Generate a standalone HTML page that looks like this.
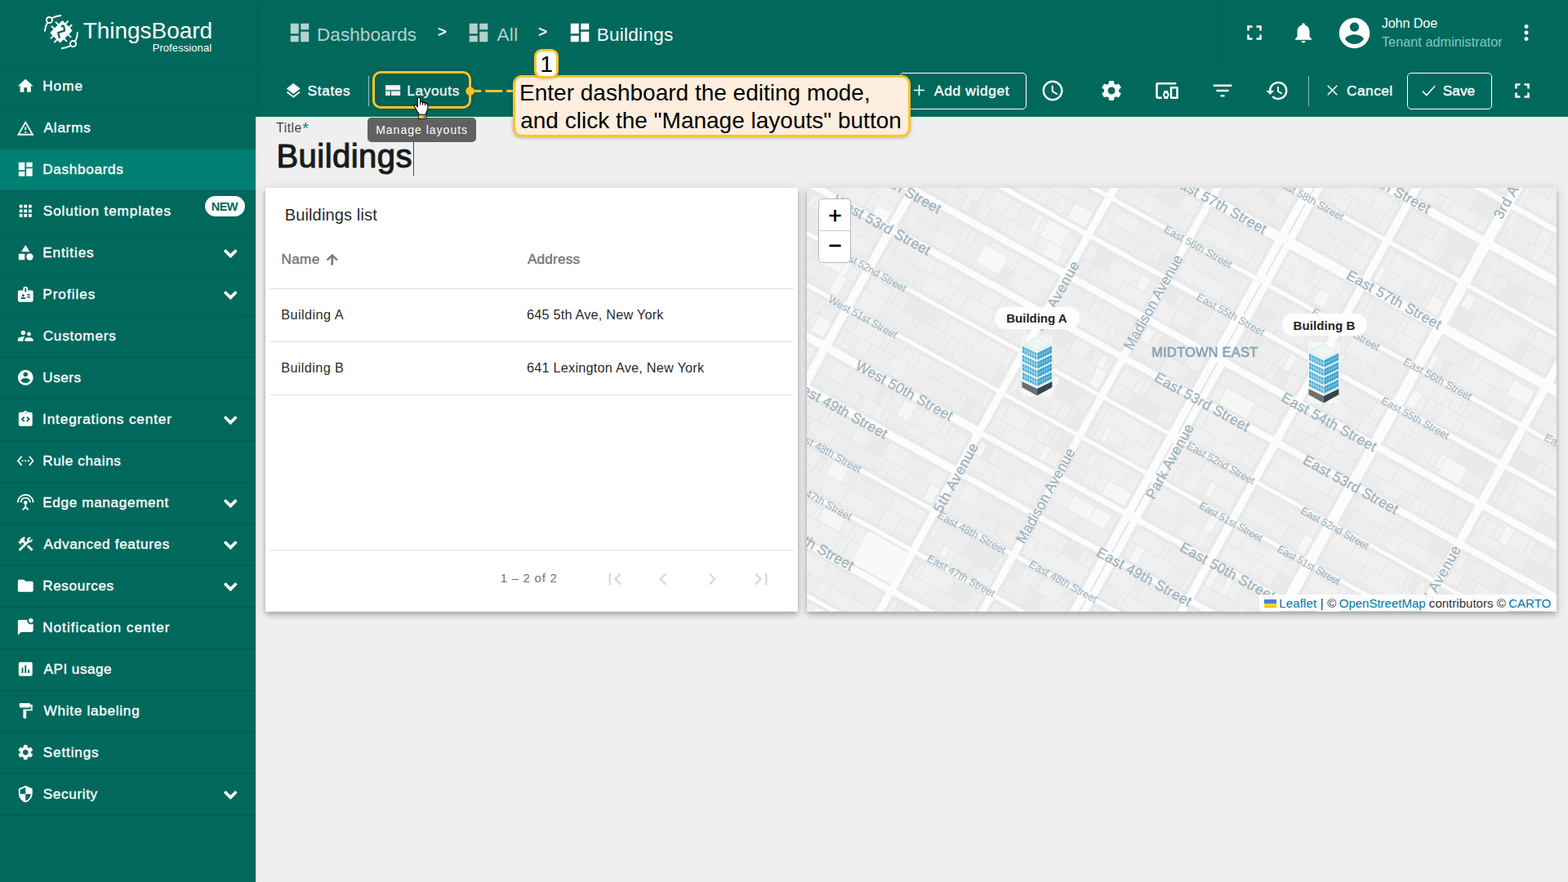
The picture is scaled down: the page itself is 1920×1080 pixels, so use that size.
<!DOCTYPE html>
<html lang="en"><head><meta charset="utf-8"><title>ThingsBoard - Buildings</title>
<style>
html,body{margin:0;padding:0}
body{width:1920px;height:1080px;overflow:hidden;background:#efefef;font-family:"Liberation Sans",sans-serif;position:relative}
.a,.t,.i{position:absolute}
.t{white-space:nowrap;margin:0;padding:0;font-weight:400}
.i{display:block;overflow:visible}
#side{left:0;top:0;width:313px;height:1080px;background:#00695c;box-shadow:1px 0 3px rgba(0,0,0,.1);z-index:3}
#top{left:313px;top:0;width:1607px;height:80px;background:#00695c;z-index:2}
#tb2{left:313px;top:80px;width:1607px;height:63px;background:#00695c;z-index:2}
.mi{left:0;width:313px;height:50px;border-top:1px solid rgba(0,0,0,.12)}
.card{background:#fff;box-shadow:0 2.5px 5px -1.25px rgba(0,0,0,.2),0 5px 6.25px 0 rgba(0,0,0,.14),0 1.25px 12.5px 0 rgba(0,0,0,.12)}
.hl{height:1px;background:#e0e0e0}

</style></head><body>
<nav id="side" class="a">
<div class="a" id="logo" style="left:0;top:0;width:313px;height:80px">
<svg class="i" style="left:48px;top:10px;width:64px;height:56px" viewBox="48 10 64 56" aria-hidden="true"><g fill="none" stroke="#fff" stroke-width="1.9" stroke-linecap="round"><circle cx="60.45" cy="24.5" r="3.55"/><circle cx="89.5" cy="53.6" r="3.55"/><path d="M63.8 22Q69 19.600 74.300 19M58 27.800Q55.400 32.500 54.900 37.800M92.200 50.400Q94.800 45.500 94.900 39.900M86.200 56.200Q81 58.600 75.700 59.200"/></g><g transform="translate(75 38.8) rotate(45)"><rect x="-8.8" y="-10.8" width="17.6" height="21.6" rx="1.2" fill="#fff"/><path d="M-8 -3.6H-12.7M-8 3.6H-12.7M8 -3.6H12.7M8 3.6H12.7M-3.2 -10V-14.7M3.2 -10V-14.7M-3.2 10V14.7M3.2 10V14.7" stroke="#fff" stroke-width="1.9" stroke-linecap="round" fill="none"/></g><path d="M75.800 32.300Q77.600 30 78.300 33L79.200 37.400L71.200 40.100L72.700 45.900" fill="none" stroke="#00695c" stroke-width="2.3" stroke-linejoin="round" stroke-linecap="round"/></svg>
<span class="t" style="left:101.67px;top:24.4px;font-size:28px;line-height:28px;letter-spacing:-0.03px;color:#fff;">ThingsBoard</span>
<span class="t" style="left:186.63px;top:52px;font-size:13px;line-height:13px;letter-spacing:0.09px;color:#fff;">Professional</span>
</div>
<ul style="list-style:none;margin:0;padding:0">
<li class="a mi" style="top:80px;">
<svg class="i" style="left:20.05px;top:13.45px;width:22.5px;height:22.5px;" viewBox="0 0 24 24" aria-hidden="true"><path fill="#fff" d="M10 20v-6h4v6h5v-8h3L12 3 2 12h3v8z"/></svg>
<span class="t" style="left:52.18px;top:16.24px;font-size:17.2px;line-height:17.2px;letter-spacing:1.01px;color:#fff;-webkit-text-stroke:0.38px #fff;">Home</span>
</li>
<li class="a mi" style="top:131px;">
<svg class="i" style="left:20.05px;top:14.35px;width:22.5px;height:22.5px;" viewBox="0 0 24 24" aria-hidden="true"><path fill="#fff" d="M12 5.99L19.53 19H4.47L12 5.99M12 2L1 21h22L12 2zm1 14h-2v2h2v-2zm0-6h-2v4h2v-4z"/></svg>
<span class="t" style="left:53.56px;top:16.24px;font-size:17.2px;line-height:17.2px;letter-spacing:0.78px;color:#fff;-webkit-text-stroke:0.38px #fff;">Alarms</span>
</li>
<li class="a mi" style="top:182px;background:#007f73;">
<svg class="i" style="left:20.05px;top:13.45px;width:22.5px;height:22.5px;" viewBox="0 0 24 24" aria-hidden="true"><path fill="#fff" d="M3 13h8V3H3v10zm0 8h8v-6H3v6zm10 0h8V11h-8v10zm0-18v6h8V3h-8z"/></svg>
<span class="t" style="left:52.18px;top:16.24px;font-size:17.2px;line-height:17.2px;letter-spacing:0.67px;color:#fff;-webkit-text-stroke:0.38px #fff;">Dashboards</span>
</li>
<li class="a mi" style="top:233px;">
<svg class="i" style="left:20.05px;top:13.45px;width:22.5px;height:22.5px;" viewBox="0 0 24 24" aria-hidden="true"><path fill="#fff" d="M4 8h4V4H4v4zm6 12h4v-4h-4v4zm-6 0h4v-4H4v4zm0-6h4v-4H4v4zm6 0h4v-4h-4v4zm6-10v4h4V4h-4zm-6 4h4V4h-4v4zm6 6h4v-4h-4v4zm0 6h4v-4h-4v4z"/></svg>
<span class="t" style="left:52.81px;top:16.24px;font-size:17.2px;line-height:17.2px;letter-spacing:0.87px;color:#fff;-webkit-text-stroke:0.38px #fff;">Solution templates</span>
<span class="a" style="left:251px;top:6px;width:49px;height:25px;border-radius:13px;background:#fff"></span>
<span class="t" style="left:258.73px;top:12.03px;font-size:14.5px;line-height:14.5px;letter-spacing:-0.53px;font-weight:700;color:#00695c;">NEW</span>
</li>
<li class="a mi" style="top:284px;">
<svg class="i" style="left:20.05px;top:13.45px;width:22.5px;height:22.5px;" viewBox="0 0 24 24" aria-hidden="true"><path fill="#fff" d="M12 2l-5.5 9h11z M17.5 13a4.5 4.5 0 1 0 0 9 4.5 4.5 0 1 0 0-9z M3 13.5h8v8H3z"/></svg>
<span class="t" style="left:52.18px;top:16.24px;font-size:17.2px;line-height:17.2px;letter-spacing:0.88px;color:#fff;-webkit-text-stroke:0.38px #fff;">Entities</span>
<svg class="i" style="left:267.25px;top:9.95px;width:30.5px;height:30.5px;" viewBox="0 0 24 24" aria-hidden="true"><path fill="#fff" stroke="#fff" stroke-width="0.9" stroke-linejoin="round" d="M16.59 8.59L12 13.17 7.41 8.59 6 10l6 6 6-6z"/></svg>
</li>
<li class="a mi" style="top:335px;">
<svg class="i" style="left:20.05px;top:13.45px;width:22.5px;height:22.5px;" viewBox="0 0 24 24" aria-hidden="true"><path fill="#fff" d="M20 7h-5V4c0-1.1-.9-2-2-2h-2c-1.1 0-2 .9-2 2v3H4c-1.1 0-2 .9-2 2v11c0 1.1.9 2 2 2h16c1.1 0 2-.9 2-2V9c0-1.1-.9-2-2-2zM9 12c.83 0 1.5.67 1.5 1.5S9.83 15 9 15s-1.5-.67-1.5-1.5S8.17 12 9 12zm3 6H6v-.75c0-1 2-1.5 3-1.5s3 .5 3 1.5V18zm1-9h-2V4h2v5zm5 7.5h-4V15h4v1.5zm0-3h-4V12h4v1.5z"/></svg>
<span class="t" style="left:52.18px;top:16.24px;font-size:17.2px;line-height:17.2px;letter-spacing:0.99px;color:#fff;-webkit-text-stroke:0.38px #fff;">Profiles</span>
<svg class="i" style="left:267.25px;top:9.95px;width:30.5px;height:30.5px;" viewBox="0 0 24 24" aria-hidden="true"><path fill="#fff" stroke="#fff" stroke-width="0.9" stroke-linejoin="round" d="M16.59 8.59L12 13.17 7.41 8.59 6 10l6 6 6-6z"/></svg>
</li>
<li class="a mi" style="top:386px;">
<svg class="i" style="left:20.05px;top:13.45px;width:22.5px;height:22.5px;" viewBox="0 0 24 24" aria-hidden="true"><path fill="#fff" d="M16.5 12c1.38 0 2.49-1.12 2.49-2.5S17.88 7 16.5 7C15.12 7 14 8.12 14 9.5s1.12 2.5 2.5 2.5zM9 11c1.66 0 2.99-1.34 2.99-3S10.66 5 9 5C7.34 5 6 6.34 6 8s1.34 3 3 3zm7.5 3c-1.83 0-5.5.92-5.5 2.75V19h11v-2.25c0-1.83-3.67-2.75-5.5-2.75zM9 13c-2.33 0-7 1.17-7 3.5V19h7v-2.25c0-.85.33-2.34 2.37-3.47C10.5 13.1 9.66 13 9 13z"/></svg>
<span class="t" style="left:52.72px;top:16.24px;font-size:17.2px;line-height:17.2px;letter-spacing:0.74px;color:#fff;-webkit-text-stroke:0.38px #fff;">Customers</span>
</li>
<li class="a mi" style="top:437px;">
<svg class="i" style="left:20.05px;top:13.45px;width:22.5px;height:22.5px;" viewBox="0 0 24 24" aria-hidden="true"><path fill="#fff" d="M12 2C6.48 2 2 6.48 2 12s4.48 10 10 10 10-4.48 10-10S17.52 2 12 2zm0 3c1.66 0 3 1.34 3 3s-1.34 3-3 3-3-1.34-3-3 1.34-3 3-3zm0 14.2c-2.5 0-4.71-1.28-6-3.22.03-1.99 4-3.08 6-3.08 1.99 0 5.97 1.09 6 3.08-1.29 1.94-3.5 3.22-6 3.22z"/></svg>
<span class="t" style="left:52.26px;top:16.24px;font-size:17.2px;line-height:17.2px;letter-spacing:0.52px;color:#fff;-webkit-text-stroke:0.38px #fff;">Users</span>
</li>
<li class="a mi" style="top:488px;">
<svg class="i" style="left:20.05px;top:13.45px;width:22.5px;height:22.5px;" viewBox="0 0 24 24" aria-hidden="true"><path fill="#fff" fill-rule="evenodd" d="M19 3h-4.18C14.4 1.84 13.3 1 12 1s-2.4.84-2.82 2H5c-.14 0-.27.01-.4.04-.39.08-.74.28-1.01.55-.18.18-.33.4-.43.64-.1.23-.16.49-.16.77v14c0 .27.06.54.16.78s.25.45.43.64c.27.27.62.47 1.01.55.13.02.26.03.4.03h14c1.1 0 2-.9 2-2V5c0-1.1-.9-2-2-2zm-8 11.17l-1.41 1.42L6 12l3.59-3.59L11 9.83 8.83 12 11 14.17zm1-9.42c-.41 0-.75-.34-.75-.75s.34-.75.75-.75.75.34.75.75-.34.75-.75.75zm2.41 10.84L13 14.17 15.17 12 13 9.83l1.41-1.42L18 12l-3.59 3.59z"/></svg>
<span class="t" style="left:52px;top:16.24px;font-size:17.2px;line-height:17.2px;letter-spacing:0.87px;color:#fff;-webkit-text-stroke:0.38px #fff;">Integrations center</span>
<svg class="i" style="left:267.25px;top:9.95px;width:30.5px;height:30.5px;" viewBox="0 0 24 24" aria-hidden="true"><path fill="#fff" stroke="#fff" stroke-width="0.9" stroke-linejoin="round" d="M16.59 8.59L12 13.17 7.41 8.59 6 10l6 6 6-6z"/></svg>
</li>
<li class="a mi" style="top:539px;">
<svg class="i" style="left:20.05px;top:13.45px;width:22.5px;height:22.5px;" viewBox="0 0 24 24" aria-hidden="true"><path fill="#fff" d="M7.77 6.76L6.23 5.48.82 12l5.41 6.52 1.54-1.28L3.42 12l4.35-5.24zM7 13h2v-2H7v2zm10-2h-2v2h2v-2zm-6 2h2v-2h-2v2zm6.77-7.52l-1.54 1.28L20.58 12l-4.35 5.24 1.54 1.28L23.18 12l-5.41-6.52z"/></svg>
<span class="t" style="left:52.18px;top:16.24px;font-size:17.2px;line-height:17.2px;letter-spacing:0.59px;color:#fff;-webkit-text-stroke:0.38px #fff;">Rule chains</span>
</li>
<li class="a mi" style="top:590px;">
<svg class="i" style="left:20.05px;top:13.45px;width:22.5px;height:22.5px;" viewBox="0 0 24 24" aria-hidden="true"><path fill="#fff" d="M12 5c-3.87 0-7 3.13-7 7h2c0-2.76 2.24-5 5-5s5 2.24 5 5h2c0-3.87-3.13-7-7-7zm1 9.29c.88-.39 1.5-1.26 1.5-2.29 0-1.38-1.12-2.5-2.5-2.5S9.5 10.62 9.5 12c0 1.02.62 1.9 1.5 2.29v3.3L7.59 21 9 22.41l3-3 3 3L16.41 21 13 17.59v-3.3zM12 1C5.93 1 1 5.93 1 12h2c0-4.97 4.03-9 9-9s9 4.03 9 9h2c0-6.07-4.93-11-11-11z"/></svg>
<span class="t" style="left:52.18px;top:16.24px;font-size:17.2px;line-height:17.2px;letter-spacing:0.63px;color:#fff;-webkit-text-stroke:0.38px #fff;">Edge management</span>
<svg class="i" style="left:267.25px;top:9.95px;width:30.5px;height:30.5px;" viewBox="0 0 24 24" aria-hidden="true"><path fill="#fff" stroke="#fff" stroke-width="0.9" stroke-linejoin="round" d="M16.59 8.59L12 13.17 7.41 8.59 6 10l6 6 6-6z"/></svg>
</li>
<li class="a mi" style="top:641px;">
<svg class="i" style="left:20.05px;top:13.45px;width:22.5px;height:22.5px;" viewBox="0 0 24 24" aria-hidden="true"><path fill="#fff" d="M13.783 15.172l2.121-2.121 5.996 5.996-2.121 2.121zM17.5 10c1.93 0 3.5-1.57 3.5-3.5 0-.58-.16-1.12-.41-1.6l-2.7 2.7-1.49-1.49 2.7-2.7c-.48-.25-1.02-.41-1.6-.41C15.57 3 14 4.57 14 6.5c0 .41.08.8.21 1.16l-1.85 1.85-1.78-1.78.71-.71-1.41-1.41L12 3.49c-1.17-1.17-3.07-1.17-4.24 0L4.22 7.03l1.41 1.41H2.81l-.71.71 3.54 3.54.71-.71V9.15l1.41 1.41.71-.71 1.78 1.78-7.41 7.41 2.12 2.12L16.34 9.79c.36.13.75.21 1.16.21z"/></svg>
<span class="t" style="left:53.56px;top:16.24px;font-size:17.2px;line-height:17.2px;letter-spacing:0.66px;color:#fff;-webkit-text-stroke:0.38px #fff;">Advanced features</span>
<svg class="i" style="left:267.25px;top:9.95px;width:30.5px;height:30.5px;" viewBox="0 0 24 24" aria-hidden="true"><path fill="#fff" stroke="#fff" stroke-width="0.9" stroke-linejoin="round" d="M16.59 8.59L12 13.17 7.41 8.59 6 10l6 6 6-6z"/></svg>
</li>
<li class="a mi" style="top:692px;">
<svg class="i" style="left:20.05px;top:13.45px;width:22.5px;height:22.5px;" viewBox="0 0 24 24" aria-hidden="true"><path fill="#fff" d="M10 4H4c-1.1 0-1.99.9-1.99 2L2 18c0 1.1.9 2 2 2h16c1.1 0 2-.9 2-2V8c0-1.1-.9-2-2-2h-8l-2-2z"/></svg>
<span class="t" style="left:52.18px;top:16.24px;font-size:17.2px;line-height:17.2px;letter-spacing:0.61px;color:#fff;-webkit-text-stroke:0.38px #fff;">Resources</span>
<svg class="i" style="left:267.25px;top:9.95px;width:30.5px;height:30.5px;" viewBox="0 0 24 24" aria-hidden="true"><path fill="#fff" stroke="#fff" stroke-width="0.9" stroke-linejoin="round" d="M16.59 8.59L12 13.17 7.41 8.59 6 10l6 6 6-6z"/></svg>
</li>
<li class="a mi" style="top:743px;">
<svg class="i" style="left:20.05px;top:13.45px;width:22.5px;height:22.5px;" viewBox="0 0 24 24" aria-hidden="true"><path fill="#fff" d="M22 6.98V16c0 1.1-.9 2-2 2H6l-4 4V4c0-1.1.9-2 2-2h10.1c-.06.32-.1.66-.1 1 0 2.76 2.24 5 5 5 1.13 0 2.16-.39 3-1.02zM16 3c0 1.66 1.34 3 3 3s3-1.34 3-3-1.34-3-3-3-3 1.34-3 3z"/></svg>
<span class="t" style="left:52.18px;top:16.24px;font-size:17.2px;line-height:17.2px;letter-spacing:0.99px;color:#fff;-webkit-text-stroke:0.38px #fff;">Notification center</span>
</li>
<li class="a mi" style="top:794px;">
<svg class="i" style="left:20.05px;top:13.45px;width:22.5px;height:22.5px;" viewBox="0 0 24 24" aria-hidden="true"><path fill="#fff" d="M19 3H5c-1.1 0-2 .9-2 2v14c0 1.1.9 2 2 2h14c1.1 0 2-.9 2-2V5c0-1.1-.9-2-2-2zM9 17H7v-7h2v7zm4 0h-2V7h2v10zm4 0h-2v-4h2v4z"/></svg>
<span class="t" style="left:53.56px;top:16.24px;font-size:17.2px;line-height:17.2px;letter-spacing:0.46px;color:#fff;-webkit-text-stroke:0.38px #fff;">API usage</span>
</li>
<li class="a mi" style="top:845px;">
<svg class="i" style="left:20.05px;top:13.45px;width:22.5px;height:22.5px;" viewBox="0 0 24 24" aria-hidden="true"><path fill="#fff" d="M18 4V3c0-.55-.45-1-1-1H5c-.55 0-1 .45-1 1v4c0 .55.45 1 1 1h12c.55 0 1-.45 1-1V6h1v4H9v11c0 .55.45 1 1 1h2c.55 0 1-.45 1-1v-9h8V4h-3z"/></svg>
<span class="t" style="left:53.51px;top:16.24px;font-size:17.2px;line-height:17.2px;letter-spacing:0.71px;color:#fff;-webkit-text-stroke:0.38px #fff;">White labeling</span>
</li>
<li class="a mi" style="top:896px;">
<svg class="i" style="left:20.05px;top:13.45px;width:22.5px;height:22.5px;" viewBox="0 0 24 24" aria-hidden="true"><path fill="#fff" d="M19.14 12.94c.04-.3.06-.61.06-.94 0-.32-.02-.64-.07-.94l2.03-1.58c.18-.14.23-.41.12-.61l-1.92-3.32c-.12-.22-.37-.29-.59-.22l-2.39.96c-.5-.38-1.03-.7-1.62-.94l-.36-2.54c-.04-.24-.24-.41-.48-.41h-3.84c-.24 0-.43.17-.47.41l-.36 2.54c-.59.24-1.13.57-1.62.94l-2.39-.96c-.22-.08-.47 0-.59.22L2.74 8.87c-.12.21-.08.47.12.61l2.03 1.58c-.05.3-.09.63-.09.94s.02.64.07.94l-2.03 1.58c-.18.14-.23.41-.12.61l1.92 3.32c.12.22.37.29.59.22l2.39-.96c.5.38 1.03.7 1.62.94l.36 2.54c.05.24.24.41.48.41h3.84c.24 0 .44-.17.47-.41l.36-2.54c.59-.24 1.13-.56 1.62-.94l2.39.96c.22.08.47 0 .59-.22l1.92-3.32c.12-.22.07-.47-.12-.61l-2.01-1.58zM12 15.6c-1.98 0-3.6-1.62-3.6-3.6s1.62-3.6 3.6-3.6 3.6 1.62 3.6 3.6-1.62 3.6-3.6 3.6z"/></svg>
<span class="t" style="left:52.81px;top:16.24px;font-size:17.2px;line-height:17.2px;letter-spacing:0.83px;color:#fff;-webkit-text-stroke:0.38px #fff;">Settings</span>
</li>
<li class="a mi" style="top:947px;">
<svg class="i" style="left:20.05px;top:13.45px;width:22.5px;height:22.5px;" viewBox="0 0 24 24" aria-hidden="true"><path fill="#fff" d="M12 1L3 5v6c0 5.55 3.84 10.74 9 12 5.16-1.26 9-6.45 9-12V5l-9-4zm0 10.99h7c-.53 4.12-3.28 7.79-7 8.94V12H5V6.3l7-3.11v8.8z"/></svg>
<span class="t" style="left:52.81px;top:16.24px;font-size:17.2px;line-height:17.2px;letter-spacing:0.61px;color:#fff;-webkit-text-stroke:0.38px #fff;">Security</span>
<svg class="i" style="left:267.25px;top:9.95px;width:30.5px;height:30.5px;" viewBox="0 0 24 24" aria-hidden="true"><path fill="#fff" stroke="#fff" stroke-width="0.9" stroke-linejoin="round" d="M16.59 8.59L12 13.17 7.41 8.59 6 10l6 6 6-6z"/></svg>
</li>
</ul>
<div class="a" style="left:0;top:998px;width:313px;height:1px;background:rgba(0,0,0,.12)"></div>
</nav>
<header id="top" class="a">
<svg class="i" style="left:39.1px;top:25px;width:30px;height:30px;" viewBox="0 0 24 24" aria-hidden="true"><path fill="#b3d2ce" d="M3 13h8V3H3v10zm0 8h8v-6H3v6zm10 0h8V11h-8v10zm0-18v6h8V3h-8z"/></svg>
<span class="t" style="left:74.95px;top:31.55px;font-size:22.5px;line-height:22.5px;letter-spacing:0.09px;color:#b3d2ce;">Dashboards</span>
<span class="t" style="left:222.89px;top:30.14px;font-size:18.5px;line-height:18.5px;color:#fff;-webkit-text-stroke:0.4px #fff;">&gt;</span>
<svg class="i" style="left:258.3px;top:25px;width:30px;height:30px;" viewBox="0 0 24 24" aria-hidden="true"><path fill="#b3d2ce" d="M3 13h8V3H3v10zm0 8h8v-6H3v6zm10 0h8V11h-8v10zm0-18v6h8V3h-8z"/></svg>
<span class="t" style="left:295.46px;top:31.55px;font-size:22.5px;line-height:22.5px;letter-spacing:0.37px;color:#b3d2ce;">All</span>
<span class="t" style="left:346.29px;top:30.14px;font-size:18.5px;line-height:18.5px;color:#fff;-webkit-text-stroke:0.4px #fff;">&gt;</span>
<svg class="i" style="left:382.3px;top:25px;width:30px;height:30px;" viewBox="0 0 24 24" aria-hidden="true"><path fill="#fff" d="M3 13h8V3H3v10zm0 8h8v-6H3v6zm10 0h8V11h-8v10zm0-18v6h8V3h-8z"/></svg>
<span class="t" style="left:417.65px;top:31.55px;font-size:22.5px;line-height:22.5px;letter-spacing:0.29px;color:#fff;">Buildings</span>
<div class="a" style="left:1180px;top:0;width:1px;height:79px;background:rgba(0,0,0,.12)"></div>
<svg class="i" style="left:1208.3px;top:25.2px;width:30px;height:30px;" viewBox="0 0 24 24" aria-hidden="true"><path fill="#fff" d="M7 14H5v5h5v-2H7v-3zm-2-4h2V7h3V5H5v5zm12 7h-3v2h5v-5h-2v3zM14 5v2h3v3h2V5h-5z"/></svg>
<svg class="i" style="left:1268.2px;top:25.2px;width:30px;height:30px;" viewBox="0 0 24 24" aria-hidden="true"><path fill="#fff" d="M12 22c1.1 0 2-.9 2-2h-4c0 1.1.89 2 2 2zm6-6v-5c0-3.07-1.64-5.64-4.5-6.32V4c0-.83-.67-1.5-1.5-1.5s-1.5.67-1.5 1.5v.68C7.63 5.36 6 7.92 6 11v5l-2 2v1h16v-1l-2-2z"/></svg>
<svg class="i" style="left:1323.3px;top:17.7px;width:45px;height:45px;" viewBox="0 0 24 24" aria-hidden="true"><path fill="#fff" d="M12 2C6.48 2 2 6.48 2 12s4.48 10 10 10 10-4.48 10-10S17.52 2 12 2zm0 3c1.66 0 3 1.34 3 3s-1.34 3-3 3-3-1.34-3-3 1.34-3 3-3zm0 14.2c-2.5 0-4.71-1.28-6-3.22.03-1.99 4-3.08 6-3.08 1.99 0 5.97 1.09 6 3.08-1.29 1.94-3.5 3.22-6 3.22z"/></svg>
<span class="t" style="left:1378.75px;top:19.79px;font-size:16.2px;line-height:16.2px;letter-spacing:-0.13px;color:#fff;">John Doe</span>
<span class="t" style="left:1378.94px;top:42.79px;font-size:16.2px;line-height:16.2px;letter-spacing:0.06px;color:#80cbc4;">Tenant administrator</span>
<svg class="i" style="left:1540.8px;top:25.2px;width:30px;height:30px;" viewBox="0 0 24 24" aria-hidden="true"><path fill="#fff" d="M12 8c1.1 0 2-.9 2-2s-.9-2-2-2-2 .9-2 2 .9 2 2 2zm0 2c-1.1 0-2 .9-2 2s.9 2 2 2 2-.9 2-2-.9-2-2-2zm0 6c-1.1 0-2 .9-2 2s.9 2 2 2 2-.9 2-2-.9-2-2-2z"/></svg>
</header>
<div id="tb2" class="a" role="toolbar">
<svg class="i" style="left:35.05px;top:19.85px;width:22.5px;height:22.5px;" viewBox="0 0 24 24" aria-hidden="true"><path fill="#fff" d="M11.99 18.54l-7.37-5.73L3 14.07l9 7 9-7-1.63-1.27-7.38 5.74zM12 16l7.36-5.73L21 9l-9-7-9 7 1.63 1.27L12 16z"/></svg>
<span class="t" style="left:63.6px;top:22.96px;font-size:17.3px;line-height:17.3px;letter-spacing:0.63px;color:#fff;-webkit-text-stroke:0.38px #fff;">States</span>
<div class="a" style="left:138px;top:13px;width:1px;height:37px;background:rgba(255,255,255,.6)"></div>
<svg class="i" style="left:159px;top:24px;width:18.4px;height:13.2px" viewBox="0 0 18.4 13.2" aria-hidden="true"><path fill="#fff" d="M0 0.200h18.200v6H0zM0 7.500h5.700v5.500H0zM7 7.500h11.200v5.500H7z"/></svg>
<span class="t" style="left:185.27px;top:22.96px;font-size:17.3px;line-height:17.3px;letter-spacing:0.59px;color:#fff;-webkit-text-stroke:0.38px #fff;">Layouts</span>
<div class="a" style="left:788px;top:9px;width:154px;height:43px;border:1px solid #fff;border-radius:5px"></div>
<svg class="i" style="left:805.0999999999999px;top:23.099999999999994px;width:15px;height:15px" viewBox="0 0 15 15" aria-hidden="true"><path d="M7.5 0.900v13.200M0.900 7.500h13.200" stroke="#fff" stroke-width="1.7" fill="none"/></svg>
<span class="t" style="left:831.06px;top:22.96px;font-size:17.3px;line-height:17.3px;letter-spacing:0.66px;color:#fff;-webkit-text-stroke:0.38px #fff;">Add widget</span>
<svg class="i" style="left:961px;top:16px;width:30px;height:30px;" viewBox="0 0 24 24" aria-hidden="true"><path fill="#fff" d="M11.99 2C6.47 2 2 6.48 2 12s4.47 10 9.99 10C17.52 22 22 17.52 22 12S17.52 2 11.99 2zM12 20c-4.42 0-8-3.58-8-8s3.58-8 8-8 8 3.58 8 8-3.58 8-8 8zm.5-13H11v6l5.25 3.15.75-1.23-4.5-2.67z"/></svg>
<svg class="i" style="left:1033.3px;top:16px;width:30px;height:30px;" viewBox="0 0 24 24" aria-hidden="true"><path fill="#fff" d="M19.14 12.94c.04-.3.06-.61.06-.94 0-.32-.02-.64-.07-.94l2.03-1.58c.18-.14.23-.41.12-.61l-1.92-3.32c-.12-.22-.37-.29-.59-.22l-2.39.96c-.5-.38-1.03-.7-1.62-.94l-.36-2.54c-.04-.24-.24-.41-.48-.41h-3.84c-.24 0-.43.17-.47.41l-.36 2.54c-.59.24-1.13.57-1.62.94l-2.39-.96c-.22-.08-.47 0-.59.22L2.74 8.87c-.12.21-.08.47.12.61l2.03 1.58c-.05.3-.09.63-.09.94s.02.64.07.94l-2.03 1.58c-.18.14-.23.41-.12.61l1.92 3.32c.12.22.37.29.59.22l2.39-.96c.5.38 1.03.7 1.62.94l.36 2.54c.05.24.24.41.48.41h3.84c.24 0 .44-.17.47-.41l.36-2.54c.59-.24 1.13-.56 1.62-.94l2.39.96c.22.08.47 0 .59-.22l1.92-3.32c.12-.22.07-.47-.12-.61l-2.01-1.58zM12 15.6c-1.98 0-3.6-1.62-3.6-3.6s1.62-3.6 3.6-3.6 3.6 1.62 3.6 3.6-1.62 3.6-3.6 3.6z"/></svg>
<svg class="i" style="left:1100.7px;top:16px;width:30px;height:30px;" viewBox="0 0 24 24" aria-hidden="true"><path fill="#fff" d="M3 6h18V4H3c-1.1 0-2 .9-2 2v12c0 1.1.9 2 2 2h4v-2H3V6zm10 6H9v1.78c-.61.55-1 1.33-1 2.22s.39 1.67 1 2.22V20h4v-1.78c.61-.55 1-1.34 1-2.22s-.39-1.67-1-2.22V12zm-2 5.5c-.83 0-1.5-.67-1.5-1.5s.67-1.5 1.5-1.5 1.5.67 1.5 1.5-.67 1.5-1.5 1.5zM22 8h-6c-.5 0-1 .5-1 1v10c0 .5.5 1 1 1h6c.5 0 1-.5 1-1V9c0-.5-.5-1-1-1zm-1 10h-4v-8h4v8z"/></svg>
<svg class="i" style="left:1168.5px;top:16px;width:30px;height:30px;" viewBox="0 0 24 24" aria-hidden="true"><path fill="#fff" d="M10 18h4v-2h-4v2zM3 6v2h18V6H3zm3 7h12v-2H6v2z"/></svg>
<svg class="i" style="left:1235.9px;top:16px;width:30px;height:30px;" viewBox="0 0 24 24" aria-hidden="true"><path fill="#fff" d="M13 3c-4.97 0-9 4.03-9 9H1l3.89 3.89.07.14L9 12H6c0-3.87 3.13-7 7-7s7 3.13 7 7-3.13 7-7 7c-1.93 0-3.68-.79-4.94-2.06l-1.42 1.42C8.27 19.99 10.51 21 13 21c4.97 0 9-4.03 9-9s-4.03-9-9-9zm-1 5v5l4.28 2.54.72-1.21-3.5-2.08V8H12z"/></svg>
<div class="a" style="left:1289px;top:13px;width:1px;height:37px;background:rgba(255,255,255,.55)"></div>
<svg class="i" style="left:1311.8px;top:24.299999999999997px;width:13px;height:13px" viewBox="0 0 13 13"><path d="M0.7 0.7l11.6 11.6M12.3 0.7L0.7 12.3" stroke="#fff" stroke-width="1.5" fill="none"/></svg>
<span class="t" style="left:1336.11px;top:22.96px;font-size:17.3px;line-height:17.3px;letter-spacing:0.45px;color:#fff;-webkit-text-stroke:0.38px #fff;">Cancel</span>
<div class="a" style="left:1410px;top:9px;width:102px;height:43px;border:1px solid #fff;border-radius:5px"></div>
<svg class="i" style="left:1428px;top:24px;width:17px;height:14px" viewBox="0 0 17 14"><path d="M0.8 7.6l5 5L16.2 1.2" stroke="#fff" stroke-width="1.5" fill="none"/></svg>
<span class="t" style="left:1453.8px;top:22.96px;font-size:17.3px;line-height:17.3px;letter-spacing:-0.01px;color:#fff;-webkit-text-stroke:0.38px #fff;">Save</span>
<svg class="i" style="left:1536px;top:16px;width:30px;height:30px;" viewBox="0 0 24 24" aria-hidden="true"><path fill="#fff" d="M7 14H5v5h5v-2H7v-3zm-2-4h2V7h3V5H5v5zm12 7h-3v2h5v-5h-2v3zM14 5v2h3v3h2V5h-5z"/></svg>
</div>
<main class="a" style="left:313px;top:143px;width:1607px;height:937px">
<span class="t" style="left:25.25px;top:6.39px;font-size:15.6px;line-height:15.6px;letter-spacing:0.54px;color:rgba(0,0,0,.76);">Title</span>
<span class="t" style="left:57.29px;top:5.49px;font-size:19.5px;line-height:19.5px;color:#00897b;">*</span>
<h1 class="t" style="left:25.47px;top:27.94px;font-size:40px;line-height:40px;letter-spacing:0.47px;color:#1a1a1a;-webkit-text-stroke:1.1px #1a1a1a;">Buildings</h1>
<div class="a" style="left:193px;top:30.5px;width:1px;height:41.5px;background:#00695c"></div>
<section class="a card" style="left:12px;top:87px;width:652px;height:519px">
<h2 class="t" style="left:23.66px;top:22.87px;font-size:20px;line-height:20px;letter-spacing:0.15px;color:rgba(0,0,0,.87);">Buildings list</h2>
<span class="t" style="left:19.39px;top:78.84px;font-size:17.2px;line-height:17.2px;letter-spacing:0.37px;color:#757575;-webkit-text-stroke:0.4px #757575;">Name</span>
<svg class="i" style="left:71.85px;top:77.95px;width:19.5px;height:19.5px;" viewBox="0 0 24 24" aria-hidden="true"><path fill="#757575" stroke="#757575" stroke-width="1.1" stroke-linejoin="round" d="M4 12l1.41 1.41L11 7.83V20h2V7.83l5.58 5.59L20 12l-8-8-8 8z"/></svg>
<span class="t" style="left:320.97px;top:78.84px;font-size:17.2px;line-height:17.2px;letter-spacing:0.17px;color:#757575;-webkit-text-stroke:0.4px #757575;">Address</span>
<div class="a hl" style="left:5px;top:123px;width:642px"></div>
<div class="a hl" style="left:5px;top:188px;width:642px"></div>
<div class="a hl" style="left:5px;top:253px;width:642px"></div>
<div class="a hl" style="left:5px;top:443px;width:642px"></div>
<span class="t" style="left:19.17px;top:146.74px;font-size:16.25px;line-height:16.25px;letter-spacing:0.45px;color:rgba(0,0,0,.87);">Building A</span>
<span class="t" style="left:319.97px;top:146.74px;font-size:16.25px;line-height:16.25px;letter-spacing:0.21px;color:rgba(0,0,0,.87);">645 5th Ave, New York</span>
<span class="t" style="left:19.17px;top:211.74px;font-size:16.25px;line-height:16.25px;letter-spacing:0.39px;color:rgba(0,0,0,.87);">Building B</span>
<span class="t" style="left:319.97px;top:211.74px;font-size:16.25px;line-height:16.25px;letter-spacing:0.23px;color:rgba(0,0,0,.87);">641 Lexington Ave, New York</span>
<span class="t" style="left:287.66px;top:470.3px;font-size:15px;line-height:15px;letter-spacing:0.73px;color:#757575;">1 – 2 of 2</span>
<svg class="i" style="left:412.7px;top:463.5px;width:30px;height:30px;" viewBox="0 0 24 24" aria-hidden="true"><path fill="#dbdbdb" d="M18.41 16.59L13.82 12l4.59-4.59L17 6l-6 6 6 6zM6 6h2v12H6z"/></svg>
<svg class="i" style="left:472.2px;top:463.5px;width:30px;height:30px;" viewBox="0 0 24 24" aria-hidden="true"><path fill="#dbdbdb" d="M15.41 7.41L14 6l-6 6 6 6 1.41-1.41L10.83 12z"/></svg>
<svg class="i" style="left:532px;top:463.5px;width:30px;height:30px;" viewBox="0 0 24 24" aria-hidden="true"><path fill="#dbdbdb" d="M10 6L8.59 7.41 13.17 12l-4.58 4.59L10 18l6-6z"/></svg>
<svg class="i" style="left:591.6px;top:463.5px;width:30px;height:30px;" viewBox="0 0 24 24" aria-hidden="true"><path fill="#dbdbdb" d="M5.59 7.41L10.18 12l-4.59 4.59L7 18l6-6-6-6zM16 6h2v12h-2z"/></svg>
</section>
<section class="a card" id="map" style="left:675px;top:87px;width:918px;height:519px;background:#fcfcfc;overflow:hidden">
<svg class="i" style="left:0;top:0;width:918px;height:519px;overflow:hidden" viewBox="988 230 918 519" font-family="Liberation Sans, sans-serif">
<g transform="rotate(29.0)">
<path fill="#ececec" d="M700 -334.8H1085V-288H700zM700 -280H1085V-231.8H700zM700 -227.2H1085V-176.4H700zM700 -171.6H1085V-123.5H700zM700 -113.5H1085V-67.8H700zM1095 -499.1H1300.5V-450H1095zM1095 -445H1300.5V-397.3H1095zM1095 -391.3H1300.5V-343.2H1095zM1095 -334.8H1300.5V-288H1095zM1095 -280H1300.5V-231.8H1095zM1095 -227.2H1300.5V-176.4H1095zM1095 -171.6H1300.5V-123.5H1095zM1095 -113.5H1300.5V-67.8H1095zM1095 -58.2H1300.5V-10H1095zM1095 -5H1300.5V45.5H1095zM1095 50.5H1300.5V99.5H1095zM1095 107.5H1300.5V156.5H1095zM1095 161.5H1300.5V212H1095zM1309.5 -563H1410.7V-511.6H1309.5zM1309.5 -499.1H1410.7V-450H1309.5zM1309.5 -445H1410.7V-397.3H1309.5zM1309.5 -391.3H1410.7V-343.2H1309.5zM1309.5 -334.8H1410.7V-288H1309.5zM1309.5 -280H1410.7V-231.8H1309.5zM1309.5 -227.2H1410.7V-176.4H1309.5zM1309.5 -171.6H1410.7V-121.9H1309.5zM1309.5 -115.1H1410.7V-66.5H1309.5zM1309.5 -59.5H1410.7V-10H1309.5zM1309.5 -5H1410.7V45.5H1309.5zM1309.5 50.5H1410.7V100H1309.5zM1309.5 107H1410.7V156.5H1309.5zM1419.3 -617.5H1508.5V-568H1419.3zM1419.3 -563H1508.5V-511.6H1419.3zM1419.3 -499.1H1508.5V-450H1419.3zM1419.3 -445H1508.5V-397.3H1419.3zM1419.3 -391.3H1508.5V-343.2H1419.3zM1419.3 -334.8H1508.5V-288H1419.3zM1419.3 -280H1508.5V-231.8H1419.3zM1419.3 -227.2H1508.5V-176.4H1419.3zM1419.3 -171.6H1508.5V-121.9H1419.3zM1419.3 -115.1H1508.5V-66.5H1419.3zM1419.3 -59.5H1508.5V-10H1419.3zM1419.3 -5H1508.5V45.5H1419.3zM1419.3 50.5H1508.5V100H1419.3zM1528.5 -673.8H1623.8V-627.5H1528.5zM1528.5 -617.5H1623.8V-568H1528.5zM1528.5 -563H1623.8V-511.6H1528.5zM1528.5 -499.1H1623.8V-450H1528.5zM1528.5 -445H1623.8V-397.3H1528.5zM1528.5 -391.3H1623.8V-343.2H1528.5zM1528.5 -334.8H1623.8V-288H1528.5zM1528.5 -280H1623.8V-231.8H1528.5zM1528.5 -227.2H1623.8V-176.4H1528.5zM1528.5 -171.6H1623.8V-121.9H1528.5zM1528.5 -115.1H1623.8V-66.5H1528.5zM1528.5 -59.5H1623.8V-10H1528.5zM1528.5 -5H1623.8V45.5H1528.5zM1633.2 -730.5H1729.5V-680.2H1633.2zM1633.2 -673.8H1729.5V-627.5H1633.2zM1633.2 -617.5H1729.5V-568H1633.2zM1633.2 -563H1729.5V-511.6H1633.2zM1633.2 -499.1H1729.5V-450H1633.2zM1633.2 -445H1729.5V-397.3H1633.2zM1633.2 -391.3H1729.5V-343.2H1633.2zM1633.2 -334.8H1729.5V-288H1633.2zM1633.2 -280H1729.5V-231.8H1633.2zM1633.2 -227.2H1729.5V-176.4H1633.2zM1633.2 -171.6H1729.5V-121.9H1633.2zM1633.2 -115.1H1729.5V-66.5H1633.2zM1633.2 -59.5H1729.5V-10H1633.2zM1742.5 -730.5H1880V-680.2H1742.5zM1742.5 -673.8H1880V-627.5H1742.5zM1742.5 -617.5H1880V-568H1742.5zM1742.5 -563H1880V-511.6H1742.5zM1742.5 -499.1H1880V-450H1742.5zM1742.5 -445H1880V-397.3H1742.5zM1742.5 -391.3H1880V-343.2H1742.5zM1742.5 -334.8H1880V-288H1742.5zM1742.5 -280H1880V-231.8H1742.5zM1742.5 -227.2H1880V-176.4H1742.5zM1742.5 -171.6H1880V-121.9H1742.5zM1742.5 -115.1H1880V-66.5H1742.5zM1890 -563H2200V-511.6H1890zM1890 -499.1H2200V-450H1890zM1890 -445H2200V-397.3H1890zM1890 -391.3H2200V-343.2H1890zM1890 -334.8H2200V-288H1890zM1890 -280H2200V-231.8H1890zM1890 -227.2H2200V-176.4H1890z"/>
<path fill="#f0f0f0" d="M703.4 -331.4H712.4V-312.4H703.4zM759.4 -331.4H766.4V-312.4H759.4zM809.4 -331.4H825.4V-312.4H809.4zM889.4 -331.4H905.4V-312.4H889.4zM959.4 -331.4H981.4V-312.4H959.4zM981.4 -331.4H997.4V-312.4H981.4zM1019.4 -329.4H1049.4V-312.4H1019.4zM1049.4 -331.4H1081.6V-312.4H1049.4zM761.4 -312.4H777.4V-291.4H761.4zM777.4 -312.4H793.4V-291.4H777.4zM793.4 -312.4H823.4V-293.4H793.4zM823.4 -312.4H830.4V-296.4H823.4zM854.4 -312.4H863.4V-291.4H854.4zM912.4 -312.4H919.4V-291.4H912.4zM1003.4 -312.4H1019.4V-293.4H1003.4zM1019.4 -312.4H1049.4V-291.4H1019.4zM1049.4 -312.4H1058.4V-291.4H1049.4zM1058.4 -312.4H1081.6V-296.4H1058.4zM726.4 -276.6H738.4V-258H726.4zM738.4 -276.6H754.4V-258H738.4zM754.4 -276.6H763.4V-258H754.4zM779.4 -272.6H786.4V-258H779.4zM807.4 -276.6H829.4V-258H807.4zM829.4 -272.6H869.4V-258H829.4zM881.4 -274.6H921.4V-258H881.4zM986.4 -276.6H993.4V-258H986.4zM993.4 -274.6H1002.4V-258H993.4zM703.4 -258H712.4V-235.2H703.4zM925.4 -258H934.4V-240.2H925.4zM934.4 -258H946.4V-235.2H934.4zM1023.4 -258H1045.4V-235.2H1023.4zM1045.4 -258H1081.6V-240.2H1045.4zM703.4 -223.8H743.4V-204.8H703.4zM793.4 -223.8H800.4V-204.8H793.4zM800.4 -221.8H840.4V-204.8H800.4zM859.4 -223.8H881.4V-204.8H859.4zM921.4 -223.8H928.4V-204.8H921.4zM928.4 -223.8H958.4V-204.8H928.4zM958.4 -223.8H988.4V-204.8H958.4zM1069.4 -219.8H1081.6V-204.8H1069.4zM703.4 -204.8H715.4V-179.8H703.4zM722.4 -204.8H744.4V-181.8H722.4zM756.4 -204.8H763.4V-179.8H756.4zM763.4 -204.8H770.4V-179.8H763.4zM782.4 -204.8H798.4V-184.8H782.4zM821.4 -204.8H828.4V-179.8H821.4zM828.4 -204.8H868.4V-179.8H828.4zM868.4 -204.8H875.4V-181.8H868.4zM875.4 -204.8H882.4V-181.8H875.4zM894.4 -204.8H924.4V-179.8H894.4zM924.4 -204.8H936.4V-179.8H924.4zM936.4 -204.8H966.4V-179.8H936.4zM994.4 -204.8H1001.4V-184.8H994.4zM740.4 -166.2H770.4V-149.6H740.4zM770.4 -168.2H779.4V-149.6H770.4zM791.4 -168.2H800.4V-149.6H791.4zM800.4 -168.2H812.4V-149.6H800.4zM812.4 -164.2H819.4V-149.6H812.4zM840.4 -168.2H862.4V-149.6H840.4zM1056.4 -168.2H1063.4V-149.6H1056.4zM703.4 -149.6H733.4V-126.9H703.4zM733.4 -149.6H749.4V-126.9H733.4zM809.4 -149.6H849.4V-126.9H809.4zM895.4 -149.6H925.4V-131.9H895.4zM955.4 -149.6H964.4V-131.9H955.4zM964.4 -149.6H986.4V-126.9H964.4zM986.4 -149.6H1002.4V-126.9H986.4zM1002.4 -149.6H1032.4V-126.9H1002.4zM1032.4 -149.6H1048.4V-131.9H1032.4zM1048.4 -149.6H1057.4V-128.9H1048.4zM1057.4 -149.6H1064.4V-131.9H1057.4zM703.4 -110.1H712.4V-88.1H703.4zM771.4 -110.1H787.4V-88.1H771.4zM803.4 -110.1H833.4V-88.1H803.4zM833.4 -110.1H845.4V-88.1H833.4zM866.4 -108.1H878.4V-88.1H866.4zM878.4 -108.1H885.4V-88.1H878.4zM885.4 -110.1H925.4V-88.1H885.4zM965.4 -110.1H977.4V-88.1H965.4zM977.4 -108.1H1017.4V-88.1H977.4zM1057.4 -110.1H1081.6V-88.1H1057.4zM703.4 -88.1H733.4V-71.2H703.4zM763.4 -88.1H785.4V-73.2H763.4zM785.4 -88.1H797.4V-71.2H785.4zM835.4 -88.1H865.4V-76.2H835.4zM865.4 -88.1H905.4V-73.2H865.4zM926.4 -88.1H935.4V-71.2H926.4zM935.4 -88.1H944.4V-71.2H935.4zM967.4 -88.1H979.4V-73.2H967.4zM1033.4 -88.1H1063.4V-71.2H1033.4zM1063.4 -88.1H1072.4V-76.2H1063.4zM1072.4 -88.1H1081.6V-76.2H1072.4zM1098.4 -495.7H1114.4V-472.4H1098.4zM1114.4 -495.7H1123.4V-472.4H1114.4zM1130.4 -491.7H1170.4V-472.4H1130.4zM1222.4 -491.7H1229.4V-472.4H1222.4zM1229.4 -491.7H1245.4V-472.4H1229.4zM1264.4 -495.7H1286.4V-472.4H1264.4zM1098.4 -472.4H1105.4V-453.4H1098.4zM1105.4 -472.4H1117.4V-453.4H1105.4zM1117.4 -472.4H1126.4V-455.4H1117.4zM1138.4 -472.4H1178.4V-453.4H1138.4zM1178.4 -472.4H1187.4V-453.4H1178.4zM1227.4 -472.4H1236.4V-453.4H1227.4zM1236.4 -472.4H1258.4V-453.4H1236.4zM1258.4 -472.4H1274.4V-458.4H1258.4zM1128.4 -441.6H1137.4V-421.5H1128.4zM1137.4 -441.6H1167.4V-421.5H1137.4zM1167.4 -441.6H1207.4V-421.5H1167.4zM1207.4 -441.6H1216.4V-421.5H1207.4zM1216.4 -441.6H1223.4V-421.5H1216.4zM1223.4 -441.6H1263.4V-421.5H1223.4zM1098.4 -421.5H1128.4V-405.7H1098.4zM1128.4 -421.5H1144.4V-402.7H1128.4zM1151.4 -421.5H1158.4V-400.7H1151.4zM1198.4 -421.5H1228.4V-400.7H1198.4zM1228.4 -421.5H1240.4V-400.7H1228.4zM1252.4 -421.5H1264.4V-400.7H1252.4zM1098.4 -385.9H1138.4V-364.8H1098.4zM1145.4 -387.9H1167.4V-364.8H1145.4zM1179.4 -387.9H1201.4V-364.8H1179.4zM1201.4 -387.9H1217.4V-364.8H1201.4zM1246.4 -385.9H1253.4V-364.8H1246.4zM1283.4 -383.9H1297.1V-364.8H1283.4zM1128.4 -364.8H1140.4V-346.6H1128.4zM1152.4 -364.8H1161.4V-346.6H1152.4zM1173.4 -364.8H1185.4V-346.6H1173.4zM1207.4 -364.8H1214.4V-346.6H1207.4zM1214.4 -364.8H1254.4V-346.6H1214.4zM1254.4 -364.8H1266.4V-346.6H1254.4zM1288.4 -364.8H1297.1V-348.6H1288.4zM1168.4 -331.4H1177.4V-310.8H1168.4zM1177.4 -331.4H1184.4V-310.8H1177.4zM1206.4 -331.4H1246.4V-310.8H1206.4zM1246.4 -331.4H1268.4V-310.8H1246.4zM1268.4 -329.4H1297.1V-310.8H1268.4zM1098.4 -310.8H1114.4V-296.4H1098.4zM1139.4 -310.8H1169.4V-291.4H1139.4zM1199.4 -310.8H1215.4V-291.4H1199.4zM1247.4 -310.8H1287.4V-291.4H1247.4zM1129.4 -276.6H1138.4V-258.6H1129.4zM1138.4 -276.6H1160.4V-258.6H1138.4zM1160.4 -276.6H1176.4V-258.6H1160.4zM1185.4 -274.6H1197.4V-258.6H1185.4zM1227.4 -276.6H1249.4V-258.6H1227.4zM1258.4 -276.6H1280.4V-258.6H1258.4zM1280.4 -276.6H1289.4V-258.6H1280.4zM1098.4 -258.6H1105.4V-240.2H1098.4zM1157.4 -258.6H1187.4V-237.2H1157.4zM1187.4 -258.6H1196.4V-237.2H1187.4zM1196.4 -258.6H1212.4V-237.2H1196.4zM1212.4 -258.6H1252.4V-237.2H1212.4zM1252.4 -258.6H1259.4V-237.2H1252.4zM1259.4 -258.6H1271.4V-240.2H1259.4zM1098.4 -219.8H1128.4V-204.3H1098.4zM1142.4 -221.8H1151.4V-204.3H1142.4zM1198.4 -219.8H1207.4V-204.3H1198.4zM1207.4 -223.8H1247.4V-204.3H1207.4zM1247.4 -223.8H1263.4V-204.3H1247.4zM1263.4 -223.8H1285.4V-204.3H1263.4zM1285.4 -223.8H1297.1V-204.3H1285.4zM1098.4 -204.3H1128.4V-179.8H1098.4zM1219.4 -204.3H1231.4V-184.8H1219.4zM1231.4 -204.3H1240.4V-181.8H1231.4zM1240.4 -204.3H1249.4V-179.8H1240.4zM1110.4 -168.2H1132.4V-149.2H1110.4zM1132.4 -168.2H1148.4V-149.2H1132.4zM1148.4 -168.2H1155.4V-149.2H1148.4zM1178.4 -166.2H1187.4V-149.2H1178.4zM1187.4 -168.2H1196.4V-149.2H1187.4zM1196.4 -168.2H1212.4V-149.2H1196.4zM1288.4 -168.2H1297.1V-149.2H1288.4zM1098.4 -149.2H1105.4V-128.9H1098.4zM1105.4 -149.2H1114.4V-126.9H1105.4zM1121.4 -149.2H1137.4V-131.9H1121.4zM1167.4 -149.2H1189.4V-126.9H1167.4zM1265.4 -149.2H1272.4V-126.9H1265.4zM1110.4 -110.1H1132.4V-87.8H1110.4zM1181.4 -106.1H1190.4V-87.8H1181.4zM1234.4 -110.1H1256.4V-87.8H1234.4zM1256.4 -110.1H1263.4V-87.8H1256.4zM1263.4 -110.1H1272.4V-87.8H1263.4zM1272.4 -110.1H1279.4V-87.8H1272.4zM1279.4 -106.1H1297.1V-87.8H1279.4zM1147.4 -87.8H1156.4V-71.2H1147.4zM1163.4 -87.8H1179.4V-71.2H1163.4zM1179.4 -87.8H1191.4V-71.2H1179.4zM1191.4 -87.8H1198.4V-71.2H1191.4zM1228.4 -87.8H1250.4V-76.2H1228.4zM1250.4 -87.8H1280.4V-71.2H1250.4zM1134.4 -54.9H1141.4V-34.3H1134.4zM1171.4 -50.9H1193.4V-34.3H1171.4zM1215.4 -54.9H1245.4V-34.3H1215.4zM1275.4 -54.9H1297.1V-34.3H1275.4zM1098.4 -34.3H1105.4V-13.4H1098.4zM1121.4 -34.3H1130.4V-18.4H1121.4zM1130.4 -34.3H1152.4V-15.4H1130.4zM1213.4 -34.3H1222.4V-18.4H1213.4zM1222.4 -34.3H1231.4V-13.4H1222.4zM1231.4 -34.3H1253.4V-18.4H1231.4zM1098.4 0.4H1128.4V18.2H1098.4zM1137.4 -1.6H1149.4V18.2H1137.4zM1158.4 0.4H1165.4V18.2H1158.4zM1187.4 2.4H1194.4V18.2H1187.4zM1253.4 -1.6H1283.4V18.2H1253.4zM1283.4 -1.6H1297.1V18.2H1283.4zM1107.4 18.2H1147.4V42.1H1107.4zM1169.4 18.2H1199.4V40.1H1169.4zM1199.4 18.2H1239.4V42.1H1199.4zM1251.4 18.2H1273.4V40.1H1251.4zM1273.4 18.2H1297.1V37.1H1273.4zM1154.4 57.9H1184.4V72.1H1154.4zM1214.4 55.9H1226.4V72.1H1214.4zM1226.4 55.9H1233.4V72.1H1226.4zM1233.4 53.9H1255.4V72.1H1233.4zM1255.4 57.9H1285.4V72.1H1255.4zM1098.4 72.1H1107.4V96.1H1098.4zM1159.4 72.1H1189.4V94.1H1159.4zM1189.4 72.1H1219.4V96.1H1189.4zM1219.4 72.1H1231.4V96.1H1219.4zM1231.4 72.1H1247.4V96.1H1231.4zM1277.4 72.1H1297.1V91.1H1277.4zM1182.4 110.9H1222.4V134.4H1182.4zM1144.4 134.4H1151.4V153.1H1144.4zM1151.4 134.4H1167.4V151.1H1151.4zM1183.4 134.4H1199.4V153.1H1183.4zM1224.4 134.4H1240.4V153.1H1224.4zM1240.4 134.4H1270.4V153.1H1240.4zM1270.4 134.4H1297.1V153.1H1270.4zM1146.4 166.9H1158.4V186.8H1146.4zM1158.4 164.9H1180.4V186.8H1158.4zM1223.4 164.9H1232.4V186.8H1223.4zM1270.4 164.9H1297.1V186.8H1270.4zM1098.4 186.8H1105.4V203.6H1098.4zM1145.4 186.8H1167.4V203.6H1145.4zM1167.4 186.8H1197.4V206.6H1167.4zM1227.4 186.8H1267.4V208.6H1227.4zM1312.9 -555.6H1324.9V-537.7H1312.9zM1324.9 -555.6H1331.9V-537.7H1324.9zM1331.9 -557.6H1371.9V-537.7H1331.9zM1342.9 -537.7H1364.9V-515H1342.9zM1389.9 -537.7H1396.9V-515H1389.9zM1384.9 -495.7H1407.2V-475.3H1384.9zM1342.9 -475.3H1358.9V-453.4H1342.9zM1398.9 -475.3H1407.2V-455.4H1398.9zM1312.9 -441.6H1321.9V-421.3H1312.9zM1321.9 -439.6H1351.9V-421.3H1321.9zM1312.9 -421.3H1324.9V-400.7H1312.9zM1386.9 -421.3H1395.9V-405.7H1386.9zM1312.9 -385.9H1324.9V-366.1H1312.9zM1346.9 -383.9H1386.9V-366.1H1346.9zM1340.9 -366.1H1370.9V-351.6H1340.9zM1370.9 -366.1H1407.2V-348.6H1370.9zM1350.9 -327.4H1362.9V-311.1H1350.9zM1362.9 -331.4H1371.9V-311.1H1362.9zM1312.9 -311.1H1334.9V-291.4H1312.9zM1334.9 -311.1H1343.9V-291.4H1334.9zM1343.9 -311.1H1383.9V-291.4H1343.9zM1383.9 -311.1H1392.9V-291.4H1383.9zM1352.9 -276.6H1374.9V-258.7H1352.9zM1381.9 -276.6H1390.9V-258.7H1381.9zM1399.9 -272.6H1407.2V-258.7H1399.9zM1312.9 -219.8H1342.9V-201.4H1312.9zM1342.9 -223.8H1351.9V-201.4H1342.9zM1312.9 -201.4H1319.9V-179.8H1312.9zM1365.9 -201.4H1377.9V-179.8H1365.9zM1377.9 -201.4H1389.9V-181.8H1377.9zM1312.9 -164.2H1321.9V-144.2H1312.9zM1321.9 -166.2H1351.9V-144.2H1321.9zM1367.9 -168.2H1379.9V-144.2H1367.9zM1312.9 -144.2H1324.9V-125.3H1312.9zM1324.9 -144.2H1331.9V-125.3H1324.9zM1331.9 -144.2H1371.9V-125.3H1331.9zM1371.9 -144.2H1383.9V-125.3H1371.9zM1392.9 -144.2H1407.2V-125.3H1392.9zM1330.9 -111.7H1342.9V-92.3H1330.9zM1382.9 -107.7H1407.2V-92.3H1382.9zM1312.9 -92.3H1334.9V-74.9H1312.9zM1334.9 -92.3H1346.9V-69.9H1334.9zM1346.9 -92.3H1362.9V-69.9H1346.9zM1371.9 -92.3H1401.9V-69.9H1371.9zM1401.9 -92.3H1407.2V-71.9H1401.9zM1312.9 -52.1H1321.9V-33.2H1312.9zM1321.9 -56.1H1343.9V-33.2H1321.9zM1312.9 -33.2H1319.9V-13.4H1312.9zM1390.9 -33.2H1407.2V-15.4H1390.9zM1312.9 -1.6H1319.9V23.1H1312.9zM1399.9 2.4H1407.2V23.1H1399.9zM1343.9 23.1H1352.9V42.1H1343.9zM1388.9 23.1H1407.2V42.1H1388.9zM1319.9 57.9H1326.9V74.4H1319.9zM1326.9 53.9H1366.9V74.4H1326.9zM1312.9 74.4H1342.9V91.6H1312.9zM1312.9 110.4H1319.9V133.8H1312.9zM1335.9 110.4H1351.9V133.8H1335.9zM1351.9 112.4H1360.9V133.8H1351.9zM1360.9 110.4H1390.9V133.8H1360.9zM1324.9 133.8H1331.9V153.1H1324.9zM1331.9 133.8H1347.9V153.1H1331.9zM1347.9 133.8H1354.9V153.1H1347.9zM1361.9 133.8H1368.9V153.1H1361.9zM1368.9 133.8H1384.9V153.1H1368.9zM1400.9 133.8H1407.2V153.1H1400.9zM1453.8 -612.1H1475.8V-590.7H1453.8zM1475.8 -614.1H1505.1V-590.7H1475.8zM1422.8 -590.7H1431.8V-573.4H1422.8zM1431.8 -590.7H1453.8V-571.4H1431.8zM1493.8 -590.7H1505.1V-571.4H1493.8zM1422.8 -555.6H1462.8V-538.5H1422.8zM1484.8 -557.6H1505.1V-538.5H1484.8zM1422.8 -477H1462.8V-458.4H1422.8zM1462.8 -477H1484.8V-458.4H1462.8zM1484.8 -477H1493.8V-458.4H1484.8zM1493.8 -477H1505.1V-455.4H1493.8zM1422.8 -439.6H1434.8V-422.4H1422.8zM1496.8 -437.6H1505.1V-422.4H1496.8zM1422.8 -422.4H1462.8V-402.7H1422.8zM1462.8 -422.4H1484.8V-400.7H1462.8zM1438.8 -385.9H1445.8V-369H1438.8zM1483.8 -387.9H1499.8V-369H1483.8zM1499.8 -387.9H1505.1V-369H1499.8zM1422.8 -369H1444.8V-346.6H1422.8zM1444.8 -369H1466.8V-351.6H1444.8zM1475.8 -369H1491.8V-351.6H1475.8zM1434.8 -331.4H1443.8V-312.2H1434.8zM1483.8 -331.4H1505.1V-312.2H1483.8zM1431.8 -312.2H1440.8V-296.4H1431.8zM1440.8 -312.2H1447.8V-293.4H1440.8zM1461.8 -312.2H1483.8V-291.4H1461.8zM1483.8 -312.2H1492.8V-296.4H1483.8zM1422.8 -272.6H1444.8V-252.9H1422.8zM1444.8 -272.6H1453.8V-252.9H1444.8zM1453.8 -276.6H1460.8V-252.9H1453.8zM1422.8 -252.9H1434.8V-235.2H1422.8zM1434.8 -252.9H1446.8V-235.2H1434.8zM1486.8 -252.9H1498.8V-237.2H1486.8zM1498.8 -252.9H1505.1V-240.2H1498.8zM1422.8 -219.8H1429.8V-200.2H1422.8zM1429.8 -223.8H1438.8V-200.2H1429.8zM1438.8 -223.8H1478.8V-200.2H1438.8zM1478.8 -223.8H1490.8V-200.2H1478.8zM1490.8 -221.8H1497.8V-200.2H1490.8zM1497.8 -221.8H1505.1V-200.2H1497.8zM1429.8 -200.2H1438.8V-179.8H1429.8zM1445.8 -200.2H1467.8V-184.8H1445.8zM1467.8 -200.2H1505.1V-179.8H1467.8zM1438.8 -166.2H1447.8V-144H1438.8zM1447.8 -168.2H1459.8V-144H1447.8zM1459.8 -168.2H1489.8V-144H1459.8zM1489.8 -168.2H1505.1V-144H1489.8zM1444.8 -144H1460.8V-125.3H1444.8zM1460.8 -144H1472.8V-127.3H1460.8zM1422.8 -109.7H1444.8V-88.1H1422.8zM1422.8 -56.1H1452.8V-37.7H1422.8zM1452.8 -56.1H1464.8V-37.7H1452.8zM1486.8 -56.1H1495.8V-37.7H1486.8zM1495.8 -54.1H1505.1V-37.7H1495.8zM1422.8 -37.7H1434.8V-13.4H1422.8zM1434.8 -37.7H1446.8V-13.4H1434.8zM1446.8 -37.7H1462.8V-13.4H1446.8zM1462.8 -37.7H1505.1V-13.4H1462.8zM1434.8 -1.6H1450.8V19H1434.8zM1459.8 -1.6H1489.8V19H1459.8zM1471.8 19H1505.1V42.1H1471.8zM1422.8 53.9H1434.8V72.5H1422.8zM1450.8 57.9H1490.8V72.5H1450.8zM1471.8 72.5H1505.1V96.6H1471.8zM1540.9 -670.4H1552.9V-652.6H1540.9zM1552.9 -670.4H1564.9V-652.6H1552.9zM1564.9 -670.4H1594.9V-652.6H1564.9zM1594.9 -670.4H1620.3V-652.6H1594.9zM1553.9 -652.6H1583.9V-635.9H1553.9zM1583.9 -652.6H1605.9V-635.9H1583.9zM1554.9 -614.1H1570.9V-592.2H1554.9zM1570.9 -614.1H1582.9V-592.2H1570.9zM1582.9 -612.1H1589.9V-592.2H1582.9zM1589.9 -614.1H1611.9V-592.2H1589.9zM1611.9 -612.1H1620.3V-592.2H1611.9zM1538.9 -592.2H1550.9V-573.4H1538.9zM1550.9 -592.2H1566.9V-571.4H1550.9zM1566.9 -592.2H1573.9V-571.4H1566.9zM1603.9 -592.2H1610.9V-571.4H1603.9zM1610.9 -592.2H1620.3V-571.4H1610.9zM1601.9 -559.6H1613.9V-538.1H1601.9zM1613.9 -555.6H1620.3V-538.1H1613.9zM1571.9 -538.1H1578.9V-515H1571.9zM1578.9 -538.1H1587.9V-515H1578.9zM1599.9 -538.1H1620.3V-517H1599.9zM1531.9 -495.7H1547.9V-473.7H1531.9zM1547.9 -495.7H1563.9V-473.7H1547.9zM1570.9 -495.7H1579.9V-473.7H1570.9zM1579.9 -495.7H1609.9V-473.7H1579.9zM1609.9 -495.7H1620.3V-473.7H1609.9zM1531.9 -473.7H1547.9V-458.4H1531.9zM1547.9 -473.7H1577.9V-455.4H1547.9zM1559.9 -441.6H1599.9V-420.5H1559.9zM1562.9 -420.5H1569.9V-405.7H1562.9zM1569.9 -420.5H1599.9V-400.7H1569.9zM1584.9 -385.9H1591.9V-366.8H1584.9zM1571.9 -366.8H1578.9V-351.6H1571.9zM1578.9 -366.8H1587.9V-346.6H1578.9zM1603.9 -366.8H1620.3V-346.6H1603.9zM1561.9 -327.4H1568.9V-313.4H1561.9zM1580.9 -327.4H1592.9V-313.4H1580.9zM1531.9 -313.4H1543.9V-291.4H1531.9zM1583.9 -313.4H1620.3V-291.4H1583.9zM1531.9 -276.6H1540.9V-254.1H1531.9zM1540.9 -276.6H1580.9V-254.1H1540.9zM1610.9 -276.6H1620.3V-254.1H1610.9zM1531.9 -254.1H1553.9V-235.2H1531.9zM1553.9 -254.1H1560.9V-237.2H1553.9zM1560.9 -254.1H1600.9V-237.2H1560.9zM1600.9 -254.1H1620.3V-240.2H1600.9zM1565.9 -221.8H1605.9V-204.3H1565.9zM1605.9 -223.8H1620.3V-204.3H1605.9zM1531.9 -204.3H1538.9V-179.8H1531.9zM1538.9 -204.3H1547.9V-184.8H1538.9zM1554.9 -204.3H1570.9V-179.8H1554.9zM1591.9 -204.3H1620.3V-181.8H1591.9zM1531.9 -168.2H1561.9V-146H1531.9zM1578.9 -146H1600.9V-125.3H1578.9zM1600.9 -146H1612.9V-125.3H1600.9zM1531.9 -111.7H1571.9V-91.4H1531.9zM1571.9 -111.7H1578.9V-91.4H1571.9zM1531.9 -91.4H1540.9V-71.9H1531.9zM1552.9 -91.4H1592.9V-69.9H1552.9zM1613.9 -91.4H1620.3V-69.9H1613.9zM1531.9 -56.1H1561.9V-32.6H1531.9zM1610.9 -56.1H1620.3V-32.6H1610.9zM1553.9 -32.6H1560.9V-13.4H1553.9zM1560.9 -32.6H1590.9V-13.4H1560.9zM1590.9 -32.6H1599.9V-13.4H1590.9zM1606.9 -32.6H1620.3V-13.4H1606.9zM1559.9 -1.6H1566.9V17.4H1559.9zM1588.9 -1.6H1620.3V17.4H1588.9zM1600.9 17.4H1620.3V37.1H1600.9zM1636.7 -702.5H1645.7V-688.6H1636.7zM1654.7 -702.5H1676.7V-683.6H1654.7zM1716.7 -702.5H1726.1V-685.6H1716.7zM1636.7 -670.4H1652.7V-647.7H1636.7zM1652.7 -670.4H1668.7V-647.7H1652.7zM1636.7 -647.7H1658.7V-630.9H1636.7zM1658.7 -647.7H1665.7V-632.9H1658.7zM1665.7 -647.7H1674.7V-630.9H1665.7zM1674.7 -647.7H1714.7V-630.9H1674.7zM1714.7 -647.7H1726.1V-630.9H1714.7zM1676.7 -614.1H1688.7V-592.9H1676.7zM1666.7 -592.9H1688.7V-571.4H1666.7zM1711.7 -592.9H1726.1V-571.4H1711.7zM1645.7 -557.6H1685.7V-534.8H1645.7zM1685.7 -557.6H1701.7V-534.8H1685.7zM1708.7 -555.6H1715.7V-534.8H1708.7zM1715.7 -559.6H1726.1V-534.8H1715.7zM1643.7 -534.8H1650.7V-515H1643.7zM1650.7 -534.8H1672.7V-515H1650.7zM1636.7 -495.7H1645.7V-475.9H1636.7zM1645.7 -495.7H1652.7V-475.9H1645.7zM1692.7 -495.7H1699.7V-475.9H1692.7zM1699.7 -495.7H1726.1V-475.9H1699.7zM1676.7 -475.9H1692.7V-455.4H1676.7zM1692.7 -475.9H1701.7V-455.4H1692.7zM1701.7 -475.9H1726.1V-453.4H1701.7zM1648.7 -441.6H1688.7V-420.5H1648.7zM1674.7 -420.5H1681.7V-405.7H1674.7zM1712.7 -385.9H1726.1V-366H1712.7zM1658.7 -366H1667.7V-346.6H1658.7zM1667.7 -366H1689.7V-346.6H1667.7zM1707.7 -366H1726.1V-346.6H1707.7zM1636.7 -331.4H1666.7V-311.9H1636.7zM1678.7 -331.4H1690.7V-311.9H1678.7zM1690.7 -329.4H1706.7V-311.9H1690.7zM1636.7 -311.9H1645.7V-291.4H1636.7zM1680.7 -311.9H1692.7V-291.4H1680.7zM1636.7 -272.6H1676.7V-257.4H1636.7zM1676.7 -276.6H1716.7V-257.4H1676.7zM1716.7 -276.6H1726.1V-257.4H1716.7zM1636.7 -257.4H1666.7V-235.2H1636.7zM1716.7 -223.8H1726.1V-203.4H1716.7zM1636.7 -203.4H1676.7V-184.8H1636.7zM1676.7 -203.4H1692.7V-179.8H1676.7zM1636.7 -168.2H1652.7V-147.1H1636.7zM1652.7 -164.2H1682.7V-147.1H1652.7zM1682.7 -168.2H1712.7V-147.1H1682.7zM1712.7 -168.2H1726.1V-147.1H1712.7zM1636.7 -147.1H1676.7V-125.3H1636.7zM1676.7 -147.1H1692.7V-130.3H1676.7zM1692.7 -147.1H1708.7V-125.3H1692.7zM1645.7 -107.7H1657.7V-88.7H1645.7zM1666.7 -109.7H1678.7V-88.7H1666.7zM1636.7 -88.7H1648.7V-71.9H1636.7zM1688.7 -88.7H1697.7V-69.9H1688.7zM1673.7 -56.1H1713.7V-35H1673.7zM1713.7 -56.1H1726.1V-35H1713.7zM1692.7 -35H1701.7V-13.4H1692.7zM1701.7 -35H1708.7V-18.4H1701.7zM1708.7 -35H1726.1V-13.4H1708.7zM1797.9 -727.1H1819.9V-705.4H1797.9zM1819.9 -727.1H1859.9V-705.4H1819.9zM1868.9 -727.1H1876.6V-705.4H1868.9zM1745.9 -705.4H1752.9V-683.6H1745.9zM1752.9 -705.4H1792.9V-683.6H1752.9zM1822.9 -705.4H1834.9V-683.6H1822.9zM1745.9 -670.4H1757.9V-647.8H1745.9zM1787.9 -670.4H1803.9V-647.8H1787.9zM1815.9 -670.4H1855.9V-647.8H1815.9zM1855.9 -668.4H1876.6V-647.8H1855.9zM1752.9 -647.8H1761.9V-635.9H1752.9zM1783.9 -647.8H1792.9V-635.9H1783.9zM1792.9 -647.8H1804.9V-630.9H1792.9zM1804.9 -647.8H1811.9V-630.9H1804.9zM1811.9 -647.8H1818.9V-632.9H1811.9zM1818.9 -647.8H1834.9V-630.9H1818.9zM1754.9 -610.1H1761.9V-595.1H1754.9zM1845.9 -614.1H1854.9V-595.1H1845.9zM1854.9 -614.1H1861.9V-595.1H1854.9zM1861.9 -612.1H1876.6V-595.1H1861.9zM1754.9 -595.1H1766.9V-571.4H1754.9zM1812.9 -595.1H1819.9V-573.4H1812.9zM1779.9 -555.6H1786.9V-539.4H1779.9zM1786.9 -555.6H1795.9V-539.4H1786.9zM1795.9 -555.6H1835.9V-539.4H1795.9zM1835.9 -555.6H1842.9V-539.4H1835.9zM1842.9 -559.6H1876.6V-539.4H1842.9zM1783.9 -539.4H1823.9V-515H1783.9zM1791.9 -495.7H1800.9V-472.3H1791.9zM1800.9 -491.7H1830.9V-472.3H1800.9zM1830.9 -491.7H1846.9V-472.3H1830.9zM1752.9 -472.3H1761.9V-458.4H1752.9zM1786.9 -472.3H1826.9V-453.4H1786.9zM1856.9 -472.3H1876.6V-453.4H1856.9zM1745.9 -441.6H1767.9V-422.3H1745.9zM1767.9 -441.6H1783.9V-422.3H1767.9zM1783.9 -441.6H1792.9V-422.3H1783.9zM1792.9 -439.6H1804.9V-422.3H1792.9zM1804.9 -441.6H1811.9V-422.3H1804.9zM1757.9 -422.3H1766.9V-402.7H1757.9zM1766.9 -422.3H1778.9V-405.7H1766.9zM1787.9 -422.3H1809.9V-400.7H1787.9zM1809.9 -422.3H1818.9V-400.7H1809.9zM1818.9 -422.3H1848.9V-405.7H1818.9zM1848.9 -422.3H1876.6V-402.7H1848.9zM1745.9 -387.9H1767.9V-369.8H1745.9zM1767.9 -385.9H1779.9V-369.8H1767.9zM1745.9 -369.8H1761.9V-346.6H1745.9zM1791.9 -369.8H1803.9V-346.6H1791.9zM1803.9 -369.8H1812.9V-351.6H1803.9zM1745.9 -329.4H1775.9V-308.5H1745.9zM1775.9 -331.4H1805.9V-308.5H1775.9zM1764.9 -308.5H1794.9V-293.4H1764.9zM1810.9 -308.5H1822.9V-291.4H1810.9zM1822.9 -308.5H1829.9V-293.4H1822.9zM1851.9 -308.5H1858.9V-293.4H1851.9zM1757.9 -276.6H1797.9V-257.2H1757.9zM1807.9 -257.2H1823.9V-235.2H1807.9zM1823.9 -257.2H1863.9V-240.2H1823.9zM1745.9 -221.8H1775.9V-203.5H1745.9zM1775.9 -219.8H1797.9V-203.5H1775.9zM1797.9 -223.8H1819.9V-203.5H1797.9zM1819.9 -223.8H1849.9V-203.5H1819.9zM1865.9 -221.8H1876.6V-203.5H1865.9zM1797.9 -203.5H1806.9V-184.8H1797.9zM1806.9 -203.5H1846.9V-184.8H1806.9zM1846.9 -203.5H1853.9V-179.8H1846.9zM1853.9 -203.5H1860.9V-181.8H1853.9zM1745.9 -164.2H1785.9V-146.4H1745.9zM1785.9 -168.2H1792.9V-146.4H1785.9zM1866.9 -168.2H1876.6V-146.4H1866.9zM1792.9 -146.4H1814.9V-130.3H1792.9zM1814.9 -146.4H1836.9V-125.3H1814.9zM1836.9 -146.4H1858.9V-125.3H1836.9zM1858.9 -146.4H1876.6V-127.3H1858.9zM1775.9 -111.7H1784.9V-91.1H1775.9zM1784.9 -111.7H1800.9V-91.1H1784.9zM1830.9 -111.7H1870.9V-91.1H1830.9zM1775.9 -91.1H1787.9V-74.9H1775.9zM1799.9 -91.1H1829.9V-69.9H1799.9zM1829.9 -91.1H1836.9V-69.9H1829.9zM1852.9 -91.1H1864.9V-69.9H1852.9zM1893.4 -559.6H1933.4V-534.8H1893.4zM1955.4 -559.6H1964.4V-534.8H1955.4zM1964.4 -555.6H1994.4V-534.8H1964.4zM2074.4 -559.6H2083.4V-534.8H2074.4zM2083.4 -559.6H2105.4V-534.8H2083.4zM1893.4 -534.8H1902.4V-517H1893.4zM1902.4 -534.8H1909.4V-515H1902.4zM1909.4 -534.8H1925.4V-517H1909.4zM1925.4 -534.8H1965.4V-517H1925.4zM1965.4 -534.8H1974.4V-517H1965.4zM2034.4 -534.8H2043.4V-515H2034.4zM2043.4 -534.8H2050.4V-515H2043.4zM2089.4 -534.8H2096.4V-517H2089.4zM2145.4 -534.8H2167.4V-517H2145.4zM2167.4 -534.8H2174.4V-520H2167.4zM1915.4 -491.7H1945.4V-473.8H1915.4zM1945.4 -495.7H1957.4V-473.8H1945.4zM1957.4 -495.7H1987.4V-473.8H1957.4zM2064.4 -495.7H2086.4V-473.8H2064.4zM2086.4 -495.7H2116.4V-473.8H2086.4zM2116.4 -495.7H2128.4V-473.8H2116.4zM2128.4 -491.7H2137.4V-473.8H2128.4zM2137.4 -495.7H2177.4V-473.8H2137.4zM2177.4 -491.7H2184.4V-473.8H2177.4zM2184.4 -493.7H2196.6V-473.8H2184.4zM1915.4 -473.8H1955.4V-453.4H1915.4zM2017.4 -473.8H2047.4V-453.4H2017.4zM2047.4 -473.8H2054.4V-453.4H2047.4zM2054.4 -473.8H2070.4V-458.4H2054.4zM2110.4 -473.8H2150.4V-458.4H2110.4zM2150.4 -473.8H2157.4V-453.4H2150.4zM2157.4 -473.8H2196.6V-453.4H2157.4zM1893.4 -441.6H1915.4V-419.4H1893.4zM1931.4 -439.6H1953.4V-419.4H1931.4zM1978.4 -441.6H2008.4V-419.4H1978.4zM2008.4 -441.6H2038.4V-419.4H2008.4zM2038.4 -441.6H2060.4V-419.4H2038.4zM2060.4 -441.6H2100.4V-419.4H2060.4zM2100.4 -441.6H2107.4V-419.4H2100.4zM2129.4 -441.6H2159.4V-419.4H2129.4zM2159.4 -441.6H2171.4V-419.4H2159.4zM2171.4 -441.6H2178.4V-419.4H2171.4zM2178.4 -439.6H2196.6V-419.4H2178.4zM1923.4 -419.4H1930.4V-402.7H1923.4zM2000.4 -419.4H2040.4V-400.7H2000.4zM2059.4 -419.4H2066.4V-400.7H2059.4zM2066.4 -419.4H2096.4V-400.7H2066.4zM2096.4 -419.4H2112.4V-402.7H2096.4zM2124.4 -419.4H2133.4V-400.7H2124.4zM2169.4 -419.4H2181.4V-400.7H2169.4zM2181.4 -419.4H2196.6V-400.7H2181.4zM1911.4 -387.9H1951.4V-368.9H1911.4zM1951.4 -387.9H1991.4V-368.9H1951.4zM1991.4 -387.9H2007.4V-368.9H1991.4zM2023.4 -385.9H2039.4V-368.9H2023.4zM2039.4 -387.9H2048.4V-368.9H2039.4zM2048.4 -387.9H2057.4V-368.9H2048.4zM2057.4 -387.9H2073.4V-368.9H2057.4zM2073.4 -387.9H2080.4V-368.9H2073.4zM2080.4 -383.9H2110.4V-368.9H2080.4zM2110.4 -385.9H2117.4V-368.9H2110.4zM2117.4 -387.9H2124.4V-368.9H2117.4zM2124.4 -387.9H2164.4V-368.9H2124.4zM2164.4 -385.9H2180.4V-368.9H2164.4zM2187.4 -387.9H2196.6V-368.9H2187.4zM1900.4 -368.9H1912.4V-351.6H1900.4zM1919.4 -368.9H1949.4V-351.6H1919.4zM2063.4 -368.9H2085.4V-348.6H2063.4zM2092.4 -368.9H2108.4V-346.6H2092.4zM2152.4 -368.9H2161.4V-346.6H2152.4zM2170.4 -368.9H2186.4V-346.6H2170.4zM2186.4 -368.9H2196.6V-346.6H2186.4zM1893.4 -331.4H1900.4V-309.4H1893.4zM1900.4 -327.4H1916.4V-309.4H1900.4zM1916.4 -327.4H1925.4V-309.4H1916.4zM1937.4 -331.4H1959.4V-309.4H1937.4zM1959.4 -331.4H1968.4V-309.4H1959.4zM2012.4 -331.4H2042.4V-309.4H2012.4zM2042.4 -331.4H2082.4V-309.4H2042.4zM2082.4 -331.4H2089.4V-309.4H2082.4zM2089.4 -329.4H2105.4V-309.4H2089.4zM2145.4 -329.4H2152.4V-309.4H2145.4zM2174.4 -331.4H2196.6V-309.4H2174.4zM1905.4 -309.4H1935.4V-296.4H1905.4zM2040.4 -309.4H2056.4V-291.4H2040.4zM2068.4 -309.4H2098.4V-291.4H2068.4zM2146.4 -309.4H2158.4V-291.4H2146.4zM2167.4 -309.4H2183.4V-296.4H2167.4zM2183.4 -309.4H2196.6V-296.4H2183.4zM1893.4 -276.6H1902.4V-253.1H1893.4zM1983.4 -276.6H2013.4V-253.1H1983.4zM2013.4 -276.6H2022.4V-253.1H2013.4zM2022.4 -276.6H2029.4V-253.1H2022.4zM2029.4 -276.6H2038.4V-253.1H2029.4zM2038.4 -274.6H2050.4V-253.1H2038.4zM2050.4 -276.6H2090.4V-253.1H2050.4zM2090.4 -276.6H2102.4V-253.1H2090.4zM2102.4 -276.6H2124.4V-253.1H2102.4zM2164.4 -276.6H2186.4V-253.1H2164.4zM1893.4 -253.1H1909.4V-235.2H1893.4zM1928.4 -253.1H1968.4V-240.2H1928.4zM1975.4 -253.1H1991.4V-240.2H1975.4zM1991.4 -253.1H2000.4V-235.2H1991.4zM2000.4 -253.1H2040.4V-240.2H2000.4zM2040.4 -253.1H2062.4V-235.2H2040.4zM2071.4 -253.1H2083.4V-240.2H2071.4zM2122.4 -253.1H2129.4V-235.2H2122.4zM2129.4 -253.1H2145.4V-235.2H2129.4zM2185.4 -253.1H2196.6V-235.2H2185.4zM1923.4 -219.8H1932.4V-203.7H1923.4zM1932.4 -221.8H1972.4V-203.7H1932.4zM1984.4 -221.8H2006.4V-203.7H1984.4zM2018.4 -221.8H2034.4V-203.7H2018.4zM2114.4 -221.8H2121.4V-203.7H2114.4zM2191.4 -219.8H2196.6V-203.7H2191.4zM1905.4 -203.7H1927.4V-179.8H1905.4zM2016.4 -203.7H2025.4V-179.8H2016.4zM2025.4 -203.7H2037.4V-181.8H2025.4zM2037.4 -203.7H2059.4V-181.8H2037.4zM2059.4 -203.7H2075.4V-184.8H2059.4zM2075.4 -203.7H2115.4V-181.8H2075.4zM2115.4 -203.7H2145.4V-179.8H2115.4zM2145.4 -203.7H2161.4V-179.8H2145.4zM2161.4 -203.7H2196.6V-184.8H2161.4z"/>
<path fill="#eaeaea" d="M752.4 -331.4H759.4V-312.4H752.4zM773.4 -327.4H780.4V-312.4H773.4zM830.4 -312.4H842.4V-296.4H830.4zM703.4 -272.6H710.4V-258H703.4zM710.4 -272.6H717.4V-258H710.4zM946.4 -276.6H986.4V-258H946.4zM712.4 -258H752.4V-237.2H712.4zM777.4 -258H799.4V-240.2H777.4zM855.4 -258H885.4V-235.2H855.4zM885.4 -258H925.4V-235.2H885.4zM946.4 -258H953.4V-237.2H946.4zM983.4 -258H1023.4V-235.2H983.4zM1018.4 -221.8H1030.4V-204.8H1018.4zM749.4 -149.6H779.4V-126.9H749.4zM733.4 -88.1H763.4V-71.2H733.4zM1021.4 -88.1H1033.4V-73.2H1021.4zM1274.4 -472.4H1283.4V-453.4H1274.4zM1098.4 -441.6H1128.4V-421.5H1098.4zM1158.4 -421.5H1198.4V-400.7H1158.4zM1161.4 -364.8H1173.4V-346.6H1161.4zM1231.4 -310.8H1247.4V-291.4H1231.4zM1151.4 -223.8H1191.4V-204.3H1151.4zM1289.4 -204.3H1297.1V-179.8H1289.4zM1272.4 -149.2H1284.4V-126.9H1272.4zM1172.4 -110.1H1181.4V-87.8H1172.4zM1156.4 -87.8H1163.4V-71.2H1156.4zM1193.4 -54.9H1215.4V-34.3H1193.4zM1105.4 -34.3H1121.4V-13.4H1105.4zM1149.4 0.4H1158.4V18.2H1149.4zM1247.4 72.1H1277.4V96.1H1247.4zM1098.4 114.9H1138.4V134.4H1098.4zM1167.4 134.4H1183.4V153.1H1167.4zM1123.4 164.9H1130.4V186.8H1123.4zM1267.4 186.8H1279.4V208.6H1267.4zM1371.9 -557.6H1401.9V-537.7H1371.9zM1380.9 -537.7H1389.9V-517H1380.9zM1354.9 -495.7H1384.9V-475.3H1354.9zM1395.9 -421.3H1407.2V-400.7H1395.9zM1324.9 -387.9H1346.9V-366.1H1324.9zM1312.9 -274.6H1352.9V-258.7H1312.9zM1374.9 -272.6H1381.9V-258.7H1374.9zM1360.9 -223.8H1367.9V-201.4H1360.9zM1367.9 -223.8H1389.9V-201.4H1367.9zM1398.9 -201.4H1407.2V-179.8H1398.9zM1395.9 -166.2H1407.2V-144.2H1395.9zM1321.9 -111.7H1330.9V-92.3H1321.9zM1359.9 -1.6H1399.9V23.1H1359.9zM1374.9 23.1H1381.9V42.1H1374.9zM1366.9 57.9H1382.9V74.4H1366.9zM1382.9 53.9H1391.9V74.4H1382.9zM1319.9 110.4H1328.9V133.8H1319.9zM1462.8 -557.6H1484.8V-538.5H1462.8zM1422.8 -387.9H1438.8V-369H1422.8zM1466.8 -369H1475.8V-348.6H1466.8zM1443.8 -327.4H1483.8V-312.2H1443.8zM1454.8 -312.2H1461.8V-291.4H1454.8zM1492.8 -312.2H1505.1V-296.4H1492.8zM1446.8 -252.9H1486.8V-235.2H1446.8zM1464.8 -52.1H1486.8V-37.7H1464.8zM1422.8 -1.6H1434.8V19H1422.8zM1452.8 19H1464.8V42.1H1452.8zM1464.8 19H1471.8V37.1H1464.8zM1490.8 55.9H1505.1V72.5H1490.8zM1531.9 -420.5H1553.9V-405.7H1531.9zM1545.9 -383.9H1554.9V-366.8H1545.9zM1587.9 -366.8H1603.9V-351.6H1587.9zM1652.7 -727.1H1674.7V-702.5H1652.7zM1698.7 -670.4H1726.1V-647.7H1698.7zM1688.7 -614.1H1726.1V-592.9H1688.7zM1695.7 -592.9H1711.7V-571.4H1695.7zM1708.7 -147.1H1726.1V-127.3H1708.7zM1708.7 -111.7H1726.1V-88.7H1708.7zM1713.7 -88.7H1726.1V-69.9H1713.7zM1676.7 -35H1692.7V-13.4H1676.7zM1782.9 -595.1H1812.9V-571.4H1782.9zM1745.9 -539.4H1767.9V-515H1745.9zM1832.9 -539.4H1841.9V-515H1832.9zM1761.9 -472.3H1770.9V-453.4H1761.9zM1859.9 -439.6H1876.6V-422.3H1859.9zM1831.9 -387.9H1876.6V-369.8H1831.9zM1853.9 -276.6H1876.6V-257.2H1853.9zM1745.9 -257.2H1752.9V-240.2H1745.9zM1858.9 -223.8H1865.9V-203.5H1858.9zM1745.9 -107.7H1775.9V-91.1H1745.9zM1800.9 -111.7H1830.9V-91.1H1800.9zM1836.9 -91.1H1852.9V-69.9H1836.9zM1864.9 -91.1H1876.6V-69.9H1864.9zM2034.4 -557.6H2074.4V-534.8H2034.4zM2121.4 -559.6H2143.4V-534.8H2121.4zM1974.4 -534.8H2004.4V-515H1974.4zM2004.4 -534.8H2011.4V-517H2004.4zM1955.4 -473.8H1995.4V-453.4H1955.4zM1995.4 -473.8H2017.4V-453.4H1995.4zM1962.4 -437.6H1978.4V-419.4H1962.4zM1893.4 -419.4H1923.4V-400.7H1893.4zM1960.4 -419.4H2000.4V-400.7H1960.4zM1893.4 -385.9H1902.4V-368.9H1893.4zM1958.4 -368.9H1998.4V-346.6H1958.4zM2130.4 -368.9H2152.4V-348.6H2130.4zM1969.4 -309.4H2009.4V-293.4H1969.4zM2130.4 -309.4H2146.4V-296.4H2130.4zM1951.4 -272.6H1960.4V-253.1H1951.4zM2124.4 -276.6H2164.4V-253.1H2124.4zM2083.4 -253.1H2092.4V-235.2H2083.4zM2092.4 -253.1H2122.4V-235.2H2092.4zM1893.4 -221.8H1923.4V-203.7H1893.4zM2074.4 -223.8H2114.4V-203.7H2074.4zM2121.4 -223.8H2151.4V-203.7H2121.4zM1957.4 -203.7H1969.4V-184.8H1957.4z"/>
<path fill="#f6f6f5" d="M795.4 -276.6H807.4V-258H795.4zM768.4 -258H777.4V-235.2H768.4zM1030.4 -221.8H1060.4V-204.8H1030.4zM1060.4 -223.8H1069.4V-204.8H1060.4zM1060.4 -204.8H1072.4V-179.8H1060.4zM710.4 -164.2H740.4V-149.6H710.4zM779.4 -164.2H791.4V-149.6H779.4zM1064.4 -149.6H1081.6V-126.9H1064.4zM905.4 -88.1H917.4V-73.2H905.4zM1283.4 -472.4H1290.4V-455.4H1283.4zM1271.4 -421.5H1297.1V-400.7H1271.4zM1239.4 -387.9H1246.4V-364.8H1239.4zM1253.4 -387.9H1283.4V-364.8H1253.4zM1266.4 -364.8H1288.4V-346.6H1266.4zM1206.4 -110.1H1222.4V-87.8H1206.4zM1284.4 -34.3H1297.1V-13.4H1284.4zM1165.4 -1.6H1187.4V18.2H1165.4zM1184.4 53.9H1214.4V72.1H1184.4zM1285.4 55.9H1297.1V72.1H1285.4zM1192.4 168.9H1214.4V186.8H1192.4zM1232.4 164.9H1254.4V186.8H1232.4zM1312.9 -537.7H1342.9V-517H1312.9zM1386.9 -383.9H1398.9V-366.1H1386.9zM1390.9 -274.6H1399.9V-258.7H1390.9zM1392.9 -258.7H1407.2V-235.2H1392.9zM1351.9 -223.8H1360.9V-201.4H1351.9zM1383.9 -144.2H1392.9V-125.3H1383.9zM1312.9 -109.7H1321.9V-92.3H1312.9zM1334.9 23.1H1343.9V37.1H1334.9zM1398.9 74.4H1407.2V94.6H1398.9zM1453.8 -590.7H1493.8V-576.4H1453.8zM1422.8 -331.4H1434.8V-312.2H1422.8zM1438.8 -200.2H1445.8V-181.8H1438.8zM1472.8 -144H1505.1V-125.3H1472.8zM1444.8 -107.7H1474.8V-88.1H1444.8zM1474.8 -107.7H1496.8V-88.1H1474.8zM1531.9 -670.4H1540.9V-652.6H1531.9zM1584.9 -473.7H1600.9V-455.4H1584.9zM1591.9 -387.9H1600.9V-366.8H1591.9zM1543.9 -313.4H1583.9V-291.4H1543.9zM1582.9 -204.3H1591.9V-184.8H1582.9zM1601.9 -168.2H1613.9V-146H1601.9zM1540.9 -91.4H1552.9V-69.9H1540.9zM1561.9 17.4H1591.9V42.1H1561.9zM1681.7 -727.1H1690.7V-702.5H1681.7zM1690.7 -727.1H1726.1V-702.5H1690.7zM1636.7 -534.8H1643.7V-515H1636.7zM1709.7 -534.8H1726.1V-515H1709.7zM1636.7 -387.9H1652.7V-366H1636.7zM1714.7 -203.4H1726.1V-179.8H1714.7zM1636.7 -111.7H1645.7V-88.7H1636.7zM1657.7 -111.7H1666.7V-88.7H1657.7zM1636.7 -35H1676.7V-15.4H1636.7zM1745.9 -557.6H1757.9V-539.4H1745.9zM1846.9 -491.7H1876.6V-472.3H1846.9zM1745.9 -472.3H1752.9V-453.4H1745.9zM1745.9 -422.3H1757.9V-400.7H1745.9zM1812.9 -369.8H1819.9V-351.6H1812.9zM1819.9 -369.8H1849.9V-346.6H1819.9zM1826.9 -164.2H1866.9V-146.4H1826.9zM1785.9 -146.4H1792.9V-125.3H1785.9zM2096.4 -534.8H2136.4V-515H2096.4zM2107.4 -437.6H2129.4V-419.4H2107.4zM2161.4 -368.9H2170.4V-346.6H2161.4zM1925.4 -331.4H1937.4V-309.4H1925.4zM2033.4 -309.4H2040.4V-296.4H2033.4zM2151.4 -219.8H2191.4V-203.7H2151.4zM1927.4 -203.7H1957.4V-179.8H1927.4z"/>
<path fill="#eeeeee" d="M712.4 -331.4H752.4V-312.4H712.4zM766.4 -331.4H773.4V-312.4H766.4zM780.4 -331.4H802.4V-312.4H780.4zM802.4 -331.4H809.4V-312.4H802.4zM825.4 -331.4H837.4V-312.4H825.4zM837.4 -331.4H859.4V-312.4H837.4zM859.4 -331.4H866.4V-312.4H859.4zM866.4 -329.4H873.4V-312.4H866.4zM873.4 -329.4H889.4V-312.4H873.4zM905.4 -331.4H935.4V-312.4H905.4zM935.4 -331.4H947.4V-312.4H935.4zM947.4 -331.4H959.4V-312.4H947.4zM997.4 -331.4H1019.4V-312.4H997.4zM703.4 -312.4H719.4V-291.4H703.4zM719.4 -312.4H749.4V-293.4H719.4zM749.4 -312.4H761.4V-291.4H749.4zM842.4 -312.4H854.4V-293.4H842.4zM863.4 -312.4H872.4V-293.4H863.4zM872.4 -312.4H912.4V-291.4H872.4zM919.4 -312.4H941.4V-296.4H919.4zM941.4 -312.4H963.4V-293.4H941.4zM963.4 -312.4H1003.4V-293.4H963.4zM717.4 -276.6H726.4V-258H717.4zM763.4 -276.6H779.4V-258H763.4zM786.4 -276.6H795.4V-258H786.4zM869.4 -272.6H881.4V-258H869.4zM921.4 -276.6H930.4V-258H921.4zM930.4 -274.6H937.4V-258H930.4zM937.4 -276.6H946.4V-258H937.4zM1002.4 -274.6H1024.4V-258H1002.4zM1024.4 -276.6H1064.4V-258H1024.4zM1064.4 -276.6H1081.6V-258H1064.4zM752.4 -258H768.4V-235.2H752.4zM799.4 -258H839.4V-235.2H799.4zM839.4 -258H848.4V-235.2H839.4zM848.4 -258H855.4V-240.2H848.4zM953.4 -258H983.4V-237.2H953.4zM743.4 -219.8H765.4V-204.8H743.4zM765.4 -219.8H777.4V-204.8H765.4zM777.4 -223.8H793.4V-204.8H777.4zM840.4 -223.8H847.4V-204.8H840.4zM847.4 -219.8H859.4V-204.8H847.4zM881.4 -221.8H903.4V-204.8H881.4zM903.4 -223.8H912.4V-204.8H903.4zM912.4 -223.8H921.4V-204.8H912.4zM988.4 -223.8H1018.4V-204.8H988.4zM715.4 -204.8H722.4V-179.8H715.4zM744.4 -204.8H756.4V-184.8H744.4zM770.4 -204.8H782.4V-179.8H770.4zM798.4 -204.8H814.4V-179.8H798.4zM814.4 -204.8H821.4V-181.8H814.4zM882.4 -204.8H894.4V-184.8H882.4zM966.4 -204.8H982.4V-179.8H966.4zM982.4 -204.8H994.4V-179.8H982.4zM1001.4 -204.8H1010.4V-181.8H1001.4zM1010.4 -204.8H1017.4V-181.8H1010.4zM1017.4 -204.8H1039.4V-184.8H1017.4zM1039.4 -204.8H1051.4V-179.8H1039.4zM1051.4 -204.8H1060.4V-181.8H1051.4zM1072.4 -204.8H1081.6V-181.8H1072.4zM703.4 -166.2H710.4V-149.6H703.4zM819.4 -168.2H828.4V-149.6H819.4zM828.4 -168.2H840.4V-149.6H828.4zM862.4 -168.2H874.4V-149.6H862.4zM874.4 -168.2H896.4V-149.6H874.4zM896.4 -166.2H912.4V-149.6H896.4zM912.4 -168.2H924.4V-149.6H912.4zM924.4 -164.2H964.4V-149.6H924.4zM964.4 -164.2H994.4V-149.6H964.4zM994.4 -164.2H1016.4V-149.6H994.4zM1016.4 -168.2H1056.4V-149.6H1016.4zM1063.4 -164.2H1081.6V-149.6H1063.4zM779.4 -149.6H809.4V-126.9H779.4zM849.4 -149.6H879.4V-128.9H849.4zM879.4 -149.6H895.4V-128.9H879.4zM925.4 -149.6H955.4V-131.9H925.4zM712.4 -110.1H742.4V-88.1H712.4zM742.4 -106.1H764.4V-88.1H742.4zM764.4 -110.1H771.4V-88.1H764.4zM787.4 -108.1H803.4V-88.1H787.4zM845.4 -108.1H857.4V-88.1H845.4zM857.4 -110.1H866.4V-88.1H857.4zM925.4 -110.1H965.4V-88.1H925.4zM1017.4 -108.1H1057.4V-88.1H1017.4zM797.4 -88.1H813.4V-73.2H797.4zM813.4 -88.1H835.4V-71.2H813.4zM917.4 -88.1H926.4V-71.2H917.4zM944.4 -88.1H951.4V-73.2H944.4zM951.4 -88.1H967.4V-73.2H951.4zM979.4 -88.1H991.4V-71.2H979.4zM991.4 -88.1H1021.4V-71.2H991.4zM1123.4 -495.7H1130.4V-472.4H1123.4zM1170.4 -495.7H1200.4V-472.4H1170.4zM1200.4 -495.7H1222.4V-472.4H1200.4zM1245.4 -493.7H1252.4V-472.4H1245.4zM1252.4 -495.7H1264.4V-472.4H1252.4zM1286.4 -495.7H1297.1V-472.4H1286.4zM1126.4 -472.4H1138.4V-453.4H1126.4zM1187.4 -472.4H1227.4V-455.4H1187.4zM1290.4 -472.4H1297.1V-455.4H1290.4zM1263.4 -441.6H1297.1V-421.5H1263.4zM1144.4 -421.5H1151.4V-402.7H1144.4zM1240.4 -421.5H1252.4V-400.7H1240.4zM1264.4 -421.5H1271.4V-402.7H1264.4zM1138.4 -387.9H1145.4V-364.8H1138.4zM1167.4 -383.9H1179.4V-364.8H1167.4zM1217.4 -387.9H1239.4V-364.8H1217.4zM1098.4 -364.8H1128.4V-346.6H1098.4zM1140.4 -364.8H1152.4V-348.6H1140.4zM1185.4 -364.8H1207.4V-348.6H1185.4zM1098.4 -331.4H1138.4V-310.8H1098.4zM1138.4 -327.4H1168.4V-310.8H1138.4zM1184.4 -331.4H1206.4V-310.8H1184.4zM1114.4 -310.8H1123.4V-291.4H1114.4zM1123.4 -310.8H1139.4V-291.4H1123.4zM1169.4 -310.8H1199.4V-293.4H1169.4zM1215.4 -310.8H1231.4V-291.4H1215.4zM1287.4 -310.8H1297.1V-291.4H1287.4zM1098.4 -274.6H1107.4V-258.6H1098.4zM1107.4 -276.6H1129.4V-258.6H1107.4zM1176.4 -276.6H1185.4V-258.6H1176.4zM1197.4 -276.6H1227.4V-258.6H1197.4zM1249.4 -276.6H1258.4V-258.6H1249.4zM1289.4 -276.6H1297.1V-258.6H1289.4zM1105.4 -258.6H1145.4V-237.2H1105.4zM1145.4 -258.6H1157.4V-237.2H1145.4zM1271.4 -258.6H1297.1V-235.2H1271.4zM1128.4 -221.8H1135.4V-204.3H1128.4zM1135.4 -219.8H1142.4V-204.3H1135.4zM1191.4 -219.8H1198.4V-204.3H1191.4zM1128.4 -204.3H1168.4V-184.8H1128.4zM1168.4 -204.3H1175.4V-181.8H1168.4zM1175.4 -204.3H1197.4V-179.8H1175.4zM1197.4 -204.3H1219.4V-179.8H1197.4zM1249.4 -204.3H1289.4V-184.8H1249.4zM1098.4 -166.2H1110.4V-149.2H1098.4zM1155.4 -164.2H1162.4V-149.2H1155.4zM1162.4 -164.2H1178.4V-149.2H1162.4zM1212.4 -168.2H1228.4V-149.2H1212.4zM1228.4 -168.2H1258.4V-149.2H1228.4zM1258.4 -164.2H1288.4V-149.2H1258.4zM1114.4 -149.2H1121.4V-126.9H1114.4zM1137.4 -149.2H1167.4V-126.9H1137.4zM1189.4 -149.2H1219.4V-126.9H1189.4zM1219.4 -149.2H1235.4V-126.9H1219.4zM1235.4 -149.2H1265.4V-126.9H1235.4zM1284.4 -149.2H1297.1V-131.9H1284.4zM1098.4 -110.1H1110.4V-87.8H1098.4zM1132.4 -110.1H1172.4V-87.8H1132.4zM1190.4 -110.1H1206.4V-87.8H1190.4zM1222.4 -108.1H1234.4V-87.8H1222.4zM1098.4 -87.8H1107.4V-71.2H1098.4zM1107.4 -87.8H1147.4V-71.2H1107.4zM1198.4 -87.8H1228.4V-76.2H1198.4zM1280.4 -87.8H1297.1V-71.2H1280.4zM1098.4 -54.9H1105.4V-34.3H1098.4zM1105.4 -54.9H1127.4V-34.3H1105.4zM1127.4 -54.9H1134.4V-34.3H1127.4zM1141.4 -54.9H1171.4V-34.3H1141.4zM1245.4 -52.9H1275.4V-34.3H1245.4zM1152.4 -34.3H1161.4V-13.4H1152.4zM1161.4 -34.3H1173.4V-13.4H1161.4zM1173.4 -34.3H1213.4V-13.4H1173.4zM1253.4 -34.3H1262.4V-13.4H1253.4zM1262.4 -34.3H1284.4V-13.4H1262.4zM1128.4 -1.6H1137.4V18.2H1128.4zM1194.4 0.4H1201.4V18.2H1194.4zM1201.4 0.4H1223.4V18.2H1201.4zM1223.4 2.4H1253.4V18.2H1223.4zM1098.4 18.2H1107.4V42.1H1098.4zM1147.4 18.2H1169.4V42.1H1147.4zM1239.4 18.2H1251.4V42.1H1239.4zM1098.4 57.9H1138.4V72.1H1098.4zM1138.4 55.9H1154.4V72.1H1138.4zM1107.4 72.1H1123.4V96.1H1107.4zM1123.4 72.1H1135.4V94.1H1123.4zM1135.4 72.1H1147.4V94.1H1135.4zM1147.4 72.1H1159.4V96.1H1147.4zM1138.4 110.9H1168.4V134.4H1138.4zM1168.4 110.9H1175.4V134.4H1168.4zM1175.4 110.9H1182.4V134.4H1175.4zM1222.4 110.9H1238.4V134.4H1222.4zM1238.4 110.9H1268.4V134.4H1238.4zM1268.4 110.9H1297.1V134.4H1268.4zM1098.4 134.4H1114.4V153.1H1098.4zM1114.4 134.4H1144.4V148.1H1114.4zM1199.4 134.4H1208.4V148.1H1199.4zM1208.4 134.4H1224.4V153.1H1208.4zM1098.4 164.9H1114.4V186.8H1098.4zM1114.4 164.9H1123.4V186.8H1114.4zM1130.4 168.9H1146.4V186.8H1130.4zM1180.4 166.9H1192.4V186.8H1180.4zM1214.4 164.9H1223.4V186.8H1214.4zM1254.4 166.9H1270.4V186.8H1254.4zM1105.4 186.8H1145.4V203.6H1105.4zM1197.4 186.8H1227.4V208.6H1197.4zM1279.4 186.8H1297.1V208.6H1279.4zM1401.9 -555.6H1407.2V-537.7H1401.9zM1364.9 -537.7H1373.9V-515H1364.9zM1373.9 -537.7H1380.9V-515H1373.9zM1396.9 -537.7H1407.2V-515H1396.9zM1312.9 -495.7H1342.9V-475.3H1312.9zM1342.9 -493.7H1354.9V-475.3H1342.9zM1312.9 -475.3H1342.9V-453.4H1312.9zM1358.9 -475.3H1398.9V-453.4H1358.9zM1351.9 -439.6H1367.9V-421.3H1351.9zM1367.9 -441.6H1407.2V-421.3H1367.9zM1324.9 -421.3H1364.9V-400.7H1324.9zM1364.9 -421.3H1386.9V-402.7H1364.9zM1398.9 -383.9H1407.2V-366.1H1398.9zM1312.9 -366.1H1328.9V-346.6H1312.9zM1328.9 -366.1H1340.9V-348.6H1328.9zM1312.9 -331.4H1334.9V-311.1H1312.9zM1334.9 -331.4H1350.9V-311.1H1334.9zM1371.9 -331.4H1407.2V-311.1H1371.9zM1392.9 -311.1H1407.2V-291.4H1392.9zM1312.9 -258.7H1352.9V-235.2H1312.9zM1352.9 -258.7H1392.9V-235.2H1352.9zM1389.9 -221.8H1407.2V-201.4H1389.9zM1319.9 -201.4H1349.9V-184.8H1319.9zM1349.9 -201.4H1365.9V-181.8H1349.9zM1389.9 -201.4H1398.9V-181.8H1389.9zM1351.9 -168.2H1367.9V-144.2H1351.9zM1379.9 -168.2H1386.9V-144.2H1379.9zM1386.9 -168.2H1395.9V-144.2H1386.9zM1342.9 -111.7H1382.9V-92.3H1342.9zM1362.9 -92.3H1371.9V-69.9H1362.9zM1343.9 -54.1H1373.9V-33.2H1343.9zM1373.9 -56.1H1395.9V-33.2H1373.9zM1395.9 -54.1H1407.2V-33.2H1395.9zM1319.9 -33.2H1359.9V-13.4H1319.9zM1359.9 -33.2H1381.9V-13.4H1359.9zM1381.9 -33.2H1390.9V-18.4H1381.9zM1319.9 0.4H1359.9V23.1H1319.9zM1312.9 23.1H1334.9V42.1H1312.9zM1352.9 23.1H1374.9V42.1H1352.9zM1381.9 23.1H1388.9V40.1H1381.9zM1312.9 53.9H1319.9V74.4H1312.9zM1391.9 53.9H1407.2V74.4H1391.9zM1342.9 74.4H1382.9V94.6H1342.9zM1382.9 74.4H1389.9V94.6H1382.9zM1389.9 74.4H1398.9V91.6H1389.9zM1328.9 110.4H1335.9V133.8H1328.9zM1390.9 110.4H1407.2V133.8H1390.9zM1312.9 133.8H1324.9V148.1H1312.9zM1354.9 133.8H1361.9V153.1H1354.9zM1384.9 133.8H1400.9V153.1H1384.9zM1422.8 -614.1H1444.8V-590.7H1422.8zM1444.8 -614.1H1453.8V-590.7H1444.8zM1422.8 -538.5H1452.8V-515H1422.8zM1452.8 -538.5H1482.8V-517H1452.8zM1482.8 -538.5H1494.8V-515H1482.8zM1494.8 -538.5H1505.1V-520H1494.8zM1422.8 -493.7H1462.8V-477H1422.8zM1462.8 -495.7H1505.1V-477H1462.8zM1434.8 -441.6H1456.8V-422.4H1434.8zM1456.8 -439.6H1496.8V-422.4H1456.8zM1484.8 -422.4H1505.1V-400.7H1484.8zM1445.8 -383.9H1467.8V-369H1445.8zM1467.8 -383.9H1483.8V-369H1467.8zM1491.8 -369H1505.1V-346.6H1491.8zM1422.8 -312.2H1431.8V-293.4H1422.8zM1447.8 -312.2H1454.8V-296.4H1447.8zM1460.8 -272.6H1476.8V-252.9H1460.8zM1476.8 -276.6H1505.1V-252.9H1476.8zM1422.8 -200.2H1429.8V-179.8H1422.8zM1422.8 -168.2H1438.8V-144H1422.8zM1422.8 -144H1444.8V-130.3H1422.8zM1496.8 -111.7H1505.1V-88.1H1496.8zM1422.8 -88.1H1462.8V-69.9H1422.8zM1462.8 -88.1H1484.8V-69.9H1462.8zM1484.8 -88.1H1505.1V-69.9H1484.8zM1450.8 -1.6H1459.8V19H1450.8zM1489.8 2.4H1505.1V19H1489.8zM1422.8 19H1452.8V37.1H1422.8zM1434.8 55.9H1450.8V72.5H1434.8zM1422.8 72.5H1434.8V91.6H1422.8zM1434.8 72.5H1441.8V94.6H1434.8zM1441.8 72.5H1471.8V94.6H1441.8zM1531.9 -652.6H1553.9V-630.9H1531.9zM1605.9 -652.6H1620.3V-630.9H1605.9zM1531.9 -612.1H1547.9V-592.2H1531.9zM1547.9 -614.1H1554.9V-592.2H1547.9zM1531.9 -592.2H1538.9V-576.4H1531.9zM1573.9 -592.2H1603.9V-571.4H1573.9zM1531.9 -559.6H1561.9V-538.1H1531.9zM1561.9 -559.6H1601.9V-538.1H1561.9zM1531.9 -538.1H1571.9V-515H1531.9zM1587.9 -538.1H1599.9V-515H1587.9zM1563.9 -491.7H1570.9V-473.7H1563.9zM1577.9 -473.7H1584.9V-455.4H1577.9zM1600.9 -473.7H1620.3V-453.4H1600.9zM1531.9 -439.6H1543.9V-420.5H1531.9zM1543.9 -441.6H1559.9V-420.5H1543.9zM1599.9 -439.6H1608.9V-420.5H1599.9zM1608.9 -441.6H1620.3V-420.5H1608.9zM1553.9 -420.5H1562.9V-400.7H1553.9zM1599.9 -420.5H1608.9V-402.7H1599.9zM1608.9 -420.5H1620.3V-405.7H1608.9zM1531.9 -383.9H1538.9V-366.8H1531.9zM1538.9 -387.9H1545.9V-366.8H1538.9zM1554.9 -387.9H1584.9V-366.8H1554.9zM1600.9 -387.9H1620.3V-366.8H1600.9zM1531.9 -366.8H1571.9V-346.6H1531.9zM1531.9 -331.4H1561.9V-313.4H1531.9zM1568.9 -331.4H1580.9V-313.4H1568.9zM1592.9 -331.4H1620.3V-313.4H1592.9zM1580.9 -276.6H1610.9V-254.1H1580.9zM1531.9 -223.8H1543.9V-204.3H1531.9zM1543.9 -223.8H1565.9V-204.3H1543.9zM1547.9 -204.3H1554.9V-179.8H1547.9zM1570.9 -204.3H1582.9V-184.8H1570.9zM1561.9 -168.2H1601.9V-146H1561.9zM1613.9 -168.2H1620.3V-146H1613.9zM1531.9 -146H1571.9V-125.3H1531.9zM1571.9 -146H1578.9V-127.3H1571.9zM1612.9 -146H1620.3V-127.3H1612.9zM1578.9 -111.7H1608.9V-91.4H1578.9zM1608.9 -111.7H1620.3V-91.4H1608.9zM1592.9 -91.4H1604.9V-69.9H1592.9zM1604.9 -91.4H1613.9V-69.9H1604.9zM1561.9 -56.1H1570.9V-32.6H1561.9zM1570.9 -52.1H1610.9V-32.6H1570.9zM1531.9 -32.6H1553.9V-13.4H1531.9zM1599.9 -32.6H1606.9V-15.4H1599.9zM1531.9 -1.6H1543.9V17.4H1531.9zM1543.9 -1.6H1559.9V17.4H1543.9zM1566.9 -1.6H1588.9V17.4H1566.9zM1531.9 17.4H1561.9V42.1H1531.9zM1591.9 17.4H1600.9V40.1H1591.9zM1636.7 -727.1H1652.7V-702.5H1636.7zM1674.7 -727.1H1681.7V-702.5H1674.7zM1645.7 -702.5H1654.7V-683.6H1645.7zM1676.7 -702.5H1716.7V-688.6H1676.7zM1668.7 -670.4H1698.7V-647.7H1668.7zM1636.7 -614.1H1676.7V-592.9H1636.7zM1636.7 -592.9H1666.7V-571.4H1636.7zM1688.7 -592.9H1695.7V-571.4H1688.7zM1636.7 -559.6H1645.7V-534.8H1636.7zM1701.7 -559.6H1708.7V-534.8H1701.7zM1672.7 -534.8H1702.7V-520H1672.7zM1702.7 -534.8H1709.7V-515H1702.7zM1652.7 -495.7H1692.7V-475.9H1652.7zM1636.7 -475.9H1676.7V-455.4H1636.7zM1636.7 -439.6H1648.7V-420.5H1636.7zM1688.7 -441.6H1726.1V-420.5H1688.7zM1636.7 -420.5H1652.7V-402.7H1636.7zM1652.7 -420.5H1674.7V-405.7H1652.7zM1681.7 -420.5H1693.7V-400.7H1681.7zM1693.7 -420.5H1726.1V-400.7H1693.7zM1652.7 -387.9H1682.7V-366H1652.7zM1682.7 -387.9H1712.7V-366H1682.7zM1636.7 -366H1658.7V-346.6H1636.7zM1689.7 -366H1698.7V-348.6H1689.7zM1698.7 -366H1707.7V-346.6H1698.7zM1666.7 -327.4H1678.7V-311.9H1666.7zM1706.7 -331.4H1726.1V-311.9H1706.7zM1645.7 -311.9H1661.7V-296.4H1645.7zM1661.7 -311.9H1673.7V-291.4H1661.7zM1673.7 -311.9H1680.7V-296.4H1673.7zM1692.7 -311.9H1726.1V-291.4H1692.7zM1666.7 -257.4H1696.7V-237.2H1666.7zM1696.7 -257.4H1726.1V-235.2H1696.7zM1636.7 -219.8H1676.7V-203.4H1636.7zM1676.7 -223.8H1716.7V-203.4H1676.7zM1692.7 -203.4H1714.7V-181.8H1692.7zM1678.7 -107.7H1708.7V-88.7H1678.7zM1648.7 -88.7H1688.7V-69.9H1648.7zM1697.7 -88.7H1713.7V-69.9H1697.7zM1636.7 -56.1H1666.7V-35H1636.7zM1666.7 -54.1H1673.7V-35H1666.7zM1745.9 -727.1H1775.9V-705.4H1745.9zM1775.9 -727.1H1797.9V-705.4H1775.9zM1859.9 -727.1H1868.9V-705.4H1859.9zM1792.9 -705.4H1822.9V-683.6H1792.9zM1834.9 -705.4H1876.6V-685.6H1834.9zM1757.9 -670.4H1787.9V-647.8H1757.9zM1803.9 -670.4H1815.9V-647.8H1803.9zM1745.9 -647.8H1752.9V-630.9H1745.9zM1761.9 -647.8H1783.9V-630.9H1761.9zM1834.9 -647.8H1841.9V-630.9H1834.9zM1841.9 -647.8H1876.6V-635.9H1841.9zM1745.9 -612.1H1754.9V-595.1H1745.9zM1761.9 -614.1H1777.9V-595.1H1761.9zM1777.9 -614.1H1799.9V-595.1H1777.9zM1799.9 -614.1H1829.9V-595.1H1799.9zM1829.9 -614.1H1838.9V-595.1H1829.9zM1838.9 -612.1H1845.9V-595.1H1838.9zM1745.9 -595.1H1754.9V-576.4H1745.9zM1766.9 -595.1H1782.9V-571.4H1766.9zM1819.9 -595.1H1859.9V-571.4H1819.9zM1859.9 -595.1H1876.6V-571.4H1859.9zM1757.9 -559.6H1779.9V-539.4H1757.9zM1767.9 -539.4H1783.9V-515H1767.9zM1823.9 -539.4H1832.9V-515H1823.9zM1841.9 -539.4H1848.9V-515H1841.9zM1848.9 -539.4H1864.9V-515H1848.9zM1864.9 -539.4H1876.6V-515H1864.9zM1745.9 -493.7H1752.9V-472.3H1745.9zM1752.9 -495.7H1782.9V-472.3H1752.9zM1782.9 -493.7H1791.9V-472.3H1782.9zM1770.9 -472.3H1786.9V-453.4H1770.9zM1826.9 -472.3H1856.9V-458.4H1826.9zM1811.9 -439.6H1820.9V-422.3H1811.9zM1820.9 -441.6H1850.9V-422.3H1820.9zM1850.9 -441.6H1859.9V-422.3H1850.9zM1778.9 -422.3H1787.9V-402.7H1778.9zM1779.9 -385.9H1819.9V-369.8H1779.9zM1819.9 -387.9H1831.9V-369.8H1819.9zM1761.9 -369.8H1791.9V-346.6H1761.9zM1849.9 -369.8H1876.6V-351.6H1849.9zM1805.9 -329.4H1814.9V-308.5H1805.9zM1814.9 -331.4H1854.9V-308.5H1814.9zM1854.9 -331.4H1876.6V-308.5H1854.9zM1745.9 -308.5H1757.9V-291.4H1745.9zM1757.9 -308.5H1764.9V-291.4H1757.9zM1794.9 -308.5H1803.9V-293.4H1794.9zM1803.9 -308.5H1810.9V-293.4H1803.9zM1829.9 -308.5H1851.9V-291.4H1829.9zM1858.9 -308.5H1876.6V-291.4H1858.9zM1745.9 -274.6H1757.9V-257.2H1745.9zM1797.9 -276.6H1813.9V-257.2H1797.9zM1813.9 -276.6H1853.9V-257.2H1813.9zM1752.9 -257.2H1782.9V-235.2H1752.9zM1782.9 -257.2H1791.9V-237.2H1782.9zM1791.9 -257.2H1807.9V-237.2H1791.9zM1863.9 -257.2H1876.6V-235.2H1863.9zM1849.9 -223.8H1858.9V-203.5H1849.9zM1745.9 -203.5H1757.9V-184.8H1745.9zM1757.9 -203.5H1797.9V-179.8H1757.9zM1860.9 -203.5H1876.6V-184.8H1860.9zM1792.9 -168.2H1804.9V-146.4H1792.9zM1804.9 -168.2H1826.9V-146.4H1804.9zM1745.9 -146.4H1785.9V-125.3H1745.9zM1870.9 -111.7H1876.6V-91.1H1870.9zM1745.9 -91.1H1775.9V-69.9H1745.9zM1787.9 -91.1H1799.9V-74.9H1787.9zM1933.4 -555.6H1955.4V-534.8H1933.4zM1994.4 -557.6H2034.4V-534.8H1994.4zM2105.4 -559.6H2121.4V-534.8H2105.4zM2143.4 -557.6H2165.4V-534.8H2143.4zM2165.4 -559.6H2196.6V-534.8H2165.4zM2011.4 -534.8H2018.4V-515H2011.4zM2018.4 -534.8H2034.4V-515H2018.4zM2050.4 -534.8H2059.4V-520H2050.4zM2059.4 -534.8H2089.4V-515H2059.4zM2136.4 -534.8H2145.4V-520H2136.4zM2174.4 -534.8H2196.6V-520H2174.4zM1893.4 -491.7H1915.4V-473.8H1893.4zM1987.4 -495.7H2027.4V-473.8H1987.4zM2027.4 -495.7H2057.4V-473.8H2027.4zM2057.4 -495.7H2064.4V-473.8H2057.4zM1893.4 -473.8H1915.4V-453.4H1893.4zM2070.4 -473.8H2110.4V-453.4H2070.4zM1915.4 -441.6H1931.4V-419.4H1915.4zM1953.4 -437.6H1962.4V-419.4H1953.4zM1930.4 -419.4H1960.4V-400.7H1930.4zM2040.4 -419.4H2047.4V-400.7H2040.4zM2047.4 -419.4H2059.4V-400.7H2047.4zM2112.4 -419.4H2124.4V-405.7H2112.4zM2133.4 -419.4H2145.4V-400.7H2133.4zM2145.4 -419.4H2157.4V-400.7H2145.4zM2157.4 -419.4H2169.4V-400.7H2157.4zM1902.4 -385.9H1911.4V-368.9H1902.4zM2007.4 -385.9H2023.4V-368.9H2007.4zM2180.4 -387.9H2187.4V-368.9H2180.4zM1893.4 -368.9H1900.4V-348.6H1893.4zM1912.4 -368.9H1919.4V-351.6H1912.4zM1949.4 -368.9H1958.4V-348.6H1949.4zM1998.4 -368.9H2038.4V-346.6H1998.4zM2038.4 -368.9H2045.4V-348.6H2038.4zM2045.4 -368.9H2054.4V-348.6H2045.4zM2054.4 -368.9H2063.4V-346.6H2054.4zM2085.4 -368.9H2092.4V-346.6H2085.4zM2108.4 -368.9H2130.4V-346.6H2108.4zM1968.4 -329.4H1990.4V-309.4H1968.4zM1990.4 -331.4H2012.4V-309.4H1990.4zM2105.4 -327.4H2145.4V-309.4H2105.4zM2152.4 -331.4H2174.4V-309.4H2152.4zM1893.4 -309.4H1905.4V-291.4H1893.4zM1935.4 -309.4H1947.4V-291.4H1935.4zM1947.4 -309.4H1969.4V-291.4H1947.4zM2009.4 -309.4H2021.4V-293.4H2009.4zM2021.4 -309.4H2033.4V-293.4H2021.4zM2056.4 -309.4H2068.4V-293.4H2056.4zM2098.4 -309.4H2107.4V-291.4H2098.4zM2107.4 -309.4H2114.4V-296.4H2107.4zM2114.4 -309.4H2130.4V-296.4H2114.4zM2158.4 -309.4H2167.4V-291.4H2158.4zM1902.4 -272.6H1911.4V-253.1H1902.4zM1911.4 -272.6H1951.4V-253.1H1911.4zM1960.4 -276.6H1976.4V-253.1H1960.4zM1976.4 -276.6H1983.4V-253.1H1976.4zM2186.4 -276.6H2196.6V-253.1H2186.4zM1909.4 -253.1H1921.4V-235.2H1909.4zM1921.4 -253.1H1928.4V-237.2H1921.4zM1968.4 -253.1H1975.4V-240.2H1968.4zM2062.4 -253.1H2071.4V-240.2H2062.4zM2145.4 -253.1H2185.4V-235.2H2145.4zM1972.4 -223.8H1984.4V-203.7H1972.4zM2006.4 -219.8H2018.4V-203.7H2006.4zM2034.4 -219.8H2074.4V-203.7H2034.4zM1893.4 -203.7H1905.4V-181.8H1893.4zM1969.4 -203.7H1976.4V-179.8H1969.4zM1976.4 -203.7H2016.4V-179.8H1976.4z"/>
<path fill="none" stroke="#e5e5e5" stroke-width="0.7" d="M703.4 -331.4H712.4V-312.4H703.4zM712.4 -331.4H752.4V-312.4H712.4zM752.4 -331.4H759.4V-312.4H752.4zM759.4 -331.4H766.4V-312.4H759.4zM766.4 -331.4H773.4V-312.4H766.4zM773.4 -327.4H780.4V-312.4H773.4zM780.4 -331.4H802.4V-312.4H780.4zM802.4 -331.4H809.4V-312.4H802.4zM809.4 -331.4H825.4V-312.4H809.4zM825.4 -331.4H837.4V-312.4H825.4zM837.4 -331.4H859.4V-312.4H837.4zM859.4 -331.4H866.4V-312.4H859.4zM866.4 -329.4H873.4V-312.4H866.4zM873.4 -329.4H889.4V-312.4H873.4zM889.4 -331.4H905.4V-312.4H889.4zM905.4 -331.4H935.4V-312.4H905.4zM935.4 -331.4H947.4V-312.4H935.4zM947.4 -331.4H959.4V-312.4H947.4zM959.4 -331.4H981.4V-312.4H959.4zM981.4 -331.4H997.4V-312.4H981.4zM997.4 -331.4H1019.4V-312.4H997.4zM1019.4 -329.4H1049.4V-312.4H1019.4zM1049.4 -331.4H1081.6V-312.4H1049.4zM703.4 -312.4H719.4V-291.4H703.4zM719.4 -312.4H749.4V-293.4H719.4zM749.4 -312.4H761.4V-291.4H749.4zM761.4 -312.4H777.4V-291.4H761.4zM777.4 -312.4H793.4V-291.4H777.4zM793.4 -312.4H823.4V-293.4H793.4zM823.4 -312.4H830.4V-296.4H823.4zM830.4 -312.4H842.4V-296.4H830.4zM842.4 -312.4H854.4V-293.4H842.4zM854.4 -312.4H863.4V-291.4H854.4zM863.4 -312.4H872.4V-293.4H863.4zM872.4 -312.4H912.4V-291.4H872.4zM912.4 -312.4H919.4V-291.4H912.4zM919.4 -312.4H941.4V-296.4H919.4zM941.4 -312.4H963.4V-293.4H941.4zM963.4 -312.4H1003.4V-293.4H963.4zM1003.4 -312.4H1019.4V-293.4H1003.4zM1019.4 -312.4H1049.4V-291.4H1019.4zM1049.4 -312.4H1058.4V-291.4H1049.4zM1058.4 -312.4H1081.6V-296.4H1058.4zM703.4 -272.6H710.4V-258H703.4zM710.4 -272.6H717.4V-258H710.4zM717.4 -276.6H726.4V-258H717.4zM726.4 -276.6H738.4V-258H726.4zM738.4 -276.6H754.4V-258H738.4zM754.4 -276.6H763.4V-258H754.4zM763.4 -276.6H779.4V-258H763.4zM779.4 -272.6H786.4V-258H779.4zM786.4 -276.6H795.4V-258H786.4zM795.4 -276.6H807.4V-258H795.4zM807.4 -276.6H829.4V-258H807.4zM829.4 -272.6H869.4V-258H829.4zM869.4 -272.6H881.4V-258H869.4zM881.4 -274.6H921.4V-258H881.4zM921.4 -276.6H930.4V-258H921.4zM930.4 -274.6H937.4V-258H930.4zM937.4 -276.6H946.4V-258H937.4zM946.4 -276.6H986.4V-258H946.4zM986.4 -276.6H993.4V-258H986.4zM993.4 -274.6H1002.4V-258H993.4zM1002.4 -274.6H1024.4V-258H1002.4zM1024.4 -276.6H1064.4V-258H1024.4zM1064.4 -276.6H1081.6V-258H1064.4zM703.4 -258H712.4V-235.2H703.4zM712.4 -258H752.4V-237.2H712.4zM752.4 -258H768.4V-235.2H752.4zM768.4 -258H777.4V-235.2H768.4zM777.4 -258H799.4V-240.2H777.4zM799.4 -258H839.4V-235.2H799.4zM839.4 -258H848.4V-235.2H839.4zM848.4 -258H855.4V-240.2H848.4zM855.4 -258H885.4V-235.2H855.4zM885.4 -258H925.4V-235.2H885.4zM925.4 -258H934.4V-240.2H925.4zM934.4 -258H946.4V-235.2H934.4zM946.4 -258H953.4V-237.2H946.4zM953.4 -258H983.4V-237.2H953.4zM983.4 -258H1023.4V-235.2H983.4zM1023.4 -258H1045.4V-235.2H1023.4zM1045.4 -258H1081.6V-240.2H1045.4zM703.4 -223.8H743.4V-204.8H703.4zM743.4 -219.8H765.4V-204.8H743.4zM765.4 -219.8H777.4V-204.8H765.4zM777.4 -223.8H793.4V-204.8H777.4zM793.4 -223.8H800.4V-204.8H793.4zM800.4 -221.8H840.4V-204.8H800.4zM840.4 -223.8H847.4V-204.8H840.4zM847.4 -219.8H859.4V-204.8H847.4zM859.4 -223.8H881.4V-204.8H859.4zM881.4 -221.8H903.4V-204.8H881.4zM903.4 -223.8H912.4V-204.8H903.4zM912.4 -223.8H921.4V-204.8H912.4zM921.4 -223.8H928.4V-204.8H921.4zM928.4 -223.8H958.4V-204.8H928.4zM958.4 -223.8H988.4V-204.8H958.4zM988.4 -223.8H1018.4V-204.8H988.4zM1018.4 -221.8H1030.4V-204.8H1018.4zM1030.4 -221.8H1060.4V-204.8H1030.4zM1060.4 -223.8H1069.4V-204.8H1060.4zM1069.4 -219.8H1081.6V-204.8H1069.4zM703.4 -204.8H715.4V-179.8H703.4zM715.4 -204.8H722.4V-179.8H715.4zM722.4 -204.8H744.4V-181.8H722.4zM744.4 -204.8H756.4V-184.8H744.4zM756.4 -204.8H763.4V-179.8H756.4zM763.4 -204.8H770.4V-179.8H763.4zM770.4 -204.8H782.4V-179.8H770.4zM782.4 -204.8H798.4V-184.8H782.4zM798.4 -204.8H814.4V-179.8H798.4zM814.4 -204.8H821.4V-181.8H814.4zM821.4 -204.8H828.4V-179.8H821.4zM828.4 -204.8H868.4V-179.8H828.4zM868.4 -204.8H875.4V-181.8H868.4zM875.4 -204.8H882.4V-181.8H875.4zM882.4 -204.8H894.4V-184.8H882.4zM894.4 -204.8H924.4V-179.8H894.4zM924.4 -204.8H936.4V-179.8H924.4zM936.4 -204.8H966.4V-179.8H936.4zM966.4 -204.8H982.4V-179.8H966.4zM982.4 -204.8H994.4V-179.8H982.4zM994.4 -204.8H1001.4V-184.8H994.4zM1001.4 -204.8H1010.4V-181.8H1001.4zM1010.4 -204.8H1017.4V-181.8H1010.4zM1017.4 -204.8H1039.4V-184.8H1017.4zM1039.4 -204.8H1051.4V-179.8H1039.4zM1051.4 -204.8H1060.4V-181.8H1051.4zM1060.4 -204.8H1072.4V-179.8H1060.4zM1072.4 -204.8H1081.6V-181.8H1072.4zM703.4 -166.2H710.4V-149.6H703.4zM710.4 -164.2H740.4V-149.6H710.4zM740.4 -166.2H770.4V-149.6H740.4zM770.4 -168.2H779.4V-149.6H770.4zM779.4 -164.2H791.4V-149.6H779.4zM791.4 -168.2H800.4V-149.6H791.4zM800.4 -168.2H812.4V-149.6H800.4zM812.4 -164.2H819.4V-149.6H812.4zM819.4 -168.2H828.4V-149.6H819.4zM828.4 -168.2H840.4V-149.6H828.4zM840.4 -168.2H862.4V-149.6H840.4zM862.4 -168.2H874.4V-149.6H862.4zM874.4 -168.2H896.4V-149.6H874.4zM896.4 -166.2H912.4V-149.6H896.4zM912.4 -168.2H924.4V-149.6H912.4zM924.4 -164.2H964.4V-149.6H924.4zM964.4 -164.2H994.4V-149.6H964.4zM994.4 -164.2H1016.4V-149.6H994.4zM1016.4 -168.2H1056.4V-149.6H1016.4zM1056.4 -168.2H1063.4V-149.6H1056.4zM1063.4 -164.2H1081.6V-149.6H1063.4zM703.4 -149.6H733.4V-126.9H703.4zM733.4 -149.6H749.4V-126.9H733.4zM749.4 -149.6H779.4V-126.9H749.4zM779.4 -149.6H809.4V-126.9H779.4zM809.4 -149.6H849.4V-126.9H809.4zM849.4 -149.6H879.4V-128.9H849.4zM879.4 -149.6H895.4V-128.9H879.4zM895.4 -149.6H925.4V-131.9H895.4zM925.4 -149.6H955.4V-131.9H925.4zM955.4 -149.6H964.4V-131.9H955.4zM964.4 -149.6H986.4V-126.9H964.4zM986.4 -149.6H1002.4V-126.9H986.4zM1002.4 -149.6H1032.4V-126.9H1002.4zM1032.4 -149.6H1048.4V-131.9H1032.4zM1048.4 -149.6H1057.4V-128.9H1048.4zM1057.4 -149.6H1064.4V-131.9H1057.4zM1064.4 -149.6H1081.6V-126.9H1064.4zM703.4 -110.1H712.4V-88.1H703.4zM712.4 -110.1H742.4V-88.1H712.4zM742.4 -106.1H764.4V-88.1H742.4zM764.4 -110.1H771.4V-88.1H764.4zM771.4 -110.1H787.4V-88.1H771.4zM787.4 -108.1H803.4V-88.1H787.4zM803.4 -110.1H833.4V-88.1H803.4zM833.4 -110.1H845.4V-88.1H833.4zM845.4 -108.1H857.4V-88.1H845.4zM857.4 -110.1H866.4V-88.1H857.4zM866.4 -108.1H878.4V-88.1H866.4zM878.4 -108.1H885.4V-88.1H878.4zM885.4 -110.1H925.4V-88.1H885.4zM925.4 -110.1H965.4V-88.1H925.4zM965.4 -110.1H977.4V-88.1H965.4zM977.4 -108.1H1017.4V-88.1H977.4zM1017.4 -108.1H1057.4V-88.1H1017.4zM1057.4 -110.1H1081.6V-88.1H1057.4zM703.4 -88.1H733.4V-71.2H703.4zM733.4 -88.1H763.4V-71.2H733.4zM763.4 -88.1H785.4V-73.2H763.4zM785.4 -88.1H797.4V-71.2H785.4zM797.4 -88.1H813.4V-73.2H797.4zM813.4 -88.1H835.4V-71.2H813.4zM835.4 -88.1H865.4V-76.2H835.4zM865.4 -88.1H905.4V-73.2H865.4zM905.4 -88.1H917.4V-73.2H905.4zM917.4 -88.1H926.4V-71.2H917.4zM926.4 -88.1H935.4V-71.2H926.4zM935.4 -88.1H944.4V-71.2H935.4zM944.4 -88.1H951.4V-73.2H944.4zM951.4 -88.1H967.4V-73.2H951.4zM967.4 -88.1H979.4V-73.2H967.4zM979.4 -88.1H991.4V-71.2H979.4zM991.4 -88.1H1021.4V-71.2H991.4zM1021.4 -88.1H1033.4V-73.2H1021.4zM1033.4 -88.1H1063.4V-71.2H1033.4zM1063.4 -88.1H1072.4V-76.2H1063.4zM1072.4 -88.1H1081.6V-76.2H1072.4zM1098.4 -495.7H1114.4V-472.4H1098.4zM1114.4 -495.7H1123.4V-472.4H1114.4zM1123.4 -495.7H1130.4V-472.4H1123.4zM1130.4 -491.7H1170.4V-472.4H1130.4zM1170.4 -495.7H1200.4V-472.4H1170.4zM1200.4 -495.7H1222.4V-472.4H1200.4zM1222.4 -491.7H1229.4V-472.4H1222.4zM1229.4 -491.7H1245.4V-472.4H1229.4zM1245.4 -493.7H1252.4V-472.4H1245.4zM1252.4 -495.7H1264.4V-472.4H1252.4zM1264.4 -495.7H1286.4V-472.4H1264.4zM1286.4 -495.7H1297.1V-472.4H1286.4zM1098.4 -472.4H1105.4V-453.4H1098.4zM1105.4 -472.4H1117.4V-453.4H1105.4zM1117.4 -472.4H1126.4V-455.4H1117.4zM1126.4 -472.4H1138.4V-453.4H1126.4zM1138.4 -472.4H1178.4V-453.4H1138.4zM1178.4 -472.4H1187.4V-453.4H1178.4zM1187.4 -472.4H1227.4V-455.4H1187.4zM1227.4 -472.4H1236.4V-453.4H1227.4zM1236.4 -472.4H1258.4V-453.4H1236.4zM1258.4 -472.4H1274.4V-458.4H1258.4zM1274.4 -472.4H1283.4V-453.4H1274.4zM1283.4 -472.4H1290.4V-455.4H1283.4zM1290.4 -472.4H1297.1V-455.4H1290.4zM1098.4 -441.6H1128.4V-421.5H1098.4zM1128.4 -441.6H1137.4V-421.5H1128.4zM1137.4 -441.6H1167.4V-421.5H1137.4zM1167.4 -441.6H1207.4V-421.5H1167.4zM1207.4 -441.6H1216.4V-421.5H1207.4zM1216.4 -441.6H1223.4V-421.5H1216.4zM1223.4 -441.6H1263.4V-421.5H1223.4zM1263.4 -441.6H1297.1V-421.5H1263.4zM1098.4 -421.5H1128.4V-405.7H1098.4zM1128.4 -421.5H1144.4V-402.7H1128.4zM1144.4 -421.5H1151.4V-402.7H1144.4zM1151.4 -421.5H1158.4V-400.7H1151.4zM1158.4 -421.5H1198.4V-400.7H1158.4zM1198.4 -421.5H1228.4V-400.7H1198.4zM1228.4 -421.5H1240.4V-400.7H1228.4zM1240.4 -421.5H1252.4V-400.7H1240.4zM1252.4 -421.5H1264.4V-400.7H1252.4zM1264.4 -421.5H1271.4V-402.7H1264.4zM1271.4 -421.5H1297.1V-400.7H1271.4zM1098.4 -385.9H1138.4V-364.8H1098.4zM1138.4 -387.9H1145.4V-364.8H1138.4zM1145.4 -387.9H1167.4V-364.8H1145.4zM1167.4 -383.9H1179.4V-364.8H1167.4zM1179.4 -387.9H1201.4V-364.8H1179.4zM1201.4 -387.9H1217.4V-364.8H1201.4zM1217.4 -387.9H1239.4V-364.8H1217.4zM1239.4 -387.9H1246.4V-364.8H1239.4zM1246.4 -385.9H1253.4V-364.8H1246.4zM1253.4 -387.9H1283.4V-364.8H1253.4zM1283.4 -383.9H1297.1V-364.8H1283.4zM1098.4 -364.8H1128.4V-346.6H1098.4zM1128.4 -364.8H1140.4V-346.6H1128.4zM1140.4 -364.8H1152.4V-348.6H1140.4zM1152.4 -364.8H1161.4V-346.6H1152.4zM1161.4 -364.8H1173.4V-346.6H1161.4zM1173.4 -364.8H1185.4V-346.6H1173.4zM1185.4 -364.8H1207.4V-348.6H1185.4zM1207.4 -364.8H1214.4V-346.6H1207.4zM1214.4 -364.8H1254.4V-346.6H1214.4zM1254.4 -364.8H1266.4V-346.6H1254.4zM1266.4 -364.8H1288.4V-346.6H1266.4zM1288.4 -364.8H1297.1V-348.6H1288.4zM1098.4 -331.4H1138.4V-310.8H1098.4zM1138.4 -327.4H1168.4V-310.8H1138.4zM1168.4 -331.4H1177.4V-310.8H1168.4zM1177.4 -331.4H1184.4V-310.8H1177.4zM1184.4 -331.4H1206.4V-310.8H1184.4zM1206.4 -331.4H1246.4V-310.8H1206.4zM1246.4 -331.4H1268.4V-310.8H1246.4zM1268.4 -329.4H1297.1V-310.8H1268.4zM1098.4 -310.8H1114.4V-296.4H1098.4zM1114.4 -310.8H1123.4V-291.4H1114.4zM1123.4 -310.8H1139.4V-291.4H1123.4zM1139.4 -310.8H1169.4V-291.4H1139.4zM1169.4 -310.8H1199.4V-293.4H1169.4zM1199.4 -310.8H1215.4V-291.4H1199.4zM1215.4 -310.8H1231.4V-291.4H1215.4zM1231.4 -310.8H1247.4V-291.4H1231.4zM1247.4 -310.8H1287.4V-291.4H1247.4zM1287.4 -310.8H1297.1V-291.4H1287.4zM1098.4 -274.6H1107.4V-258.6H1098.4zM1107.4 -276.6H1129.4V-258.6H1107.4zM1129.4 -276.6H1138.4V-258.6H1129.4zM1138.4 -276.6H1160.4V-258.6H1138.4zM1160.4 -276.6H1176.4V-258.6H1160.4zM1176.4 -276.6H1185.4V-258.6H1176.4zM1185.4 -274.6H1197.4V-258.6H1185.4zM1197.4 -276.6H1227.4V-258.6H1197.4zM1227.4 -276.6H1249.4V-258.6H1227.4zM1249.4 -276.6H1258.4V-258.6H1249.4zM1258.4 -276.6H1280.4V-258.6H1258.4zM1280.4 -276.6H1289.4V-258.6H1280.4zM1289.4 -276.6H1297.1V-258.6H1289.4zM1098.4 -258.6H1105.4V-240.2H1098.4zM1105.4 -258.6H1145.4V-237.2H1105.4zM1145.4 -258.6H1157.4V-237.2H1145.4zM1157.4 -258.6H1187.4V-237.2H1157.4zM1187.4 -258.6H1196.4V-237.2H1187.4zM1196.4 -258.6H1212.4V-237.2H1196.4zM1212.4 -258.6H1252.4V-237.2H1212.4zM1252.4 -258.6H1259.4V-237.2H1252.4zM1259.4 -258.6H1271.4V-240.2H1259.4zM1271.4 -258.6H1297.1V-235.2H1271.4zM1098.4 -219.8H1128.4V-204.3H1098.4zM1128.4 -221.8H1135.4V-204.3H1128.4zM1135.4 -219.8H1142.4V-204.3H1135.4zM1142.4 -221.8H1151.4V-204.3H1142.4zM1151.4 -223.8H1191.4V-204.3H1151.4zM1191.4 -219.8H1198.4V-204.3H1191.4zM1198.4 -219.8H1207.4V-204.3H1198.4zM1207.4 -223.8H1247.4V-204.3H1207.4zM1247.4 -223.8H1263.4V-204.3H1247.4zM1263.4 -223.8H1285.4V-204.3H1263.4zM1285.4 -223.8H1297.1V-204.3H1285.4zM1098.4 -204.3H1128.4V-179.8H1098.4zM1128.4 -204.3H1168.4V-184.8H1128.4zM1168.4 -204.3H1175.4V-181.8H1168.4zM1175.4 -204.3H1197.4V-179.8H1175.4zM1197.4 -204.3H1219.4V-179.8H1197.4zM1219.4 -204.3H1231.4V-184.8H1219.4zM1231.4 -204.3H1240.4V-181.8H1231.4zM1240.4 -204.3H1249.4V-179.8H1240.4zM1249.4 -204.3H1289.4V-184.8H1249.4zM1289.4 -204.3H1297.1V-179.8H1289.4zM1098.4 -166.2H1110.4V-149.2H1098.4zM1110.4 -168.2H1132.4V-149.2H1110.4zM1132.4 -168.2H1148.4V-149.2H1132.4zM1148.4 -168.2H1155.4V-149.2H1148.4zM1155.4 -164.2H1162.4V-149.2H1155.4zM1162.4 -164.2H1178.4V-149.2H1162.4zM1178.4 -166.2H1187.4V-149.2H1178.4zM1187.4 -168.2H1196.4V-149.2H1187.4zM1196.4 -168.2H1212.4V-149.2H1196.4zM1212.4 -168.2H1228.4V-149.2H1212.4zM1228.4 -168.2H1258.4V-149.2H1228.4zM1258.4 -164.2H1288.4V-149.2H1258.4zM1288.4 -168.2H1297.1V-149.2H1288.4zM1098.4 -149.2H1105.4V-128.9H1098.4zM1105.4 -149.2H1114.4V-126.9H1105.4zM1114.4 -149.2H1121.4V-126.9H1114.4zM1121.4 -149.2H1137.4V-131.9H1121.4zM1137.4 -149.2H1167.4V-126.9H1137.4zM1167.4 -149.2H1189.4V-126.9H1167.4zM1189.4 -149.2H1219.4V-126.9H1189.4zM1219.4 -149.2H1235.4V-126.9H1219.4zM1235.4 -149.2H1265.4V-126.9H1235.4zM1265.4 -149.2H1272.4V-126.9H1265.4zM1272.4 -149.2H1284.4V-126.9H1272.4zM1284.4 -149.2H1297.1V-131.9H1284.4zM1098.4 -110.1H1110.4V-87.8H1098.4zM1110.4 -110.1H1132.4V-87.8H1110.4zM1132.4 -110.1H1172.4V-87.8H1132.4zM1172.4 -110.1H1181.4V-87.8H1172.4zM1181.4 -106.1H1190.4V-87.8H1181.4zM1190.4 -110.1H1206.4V-87.8H1190.4zM1206.4 -110.1H1222.4V-87.8H1206.4zM1222.4 -108.1H1234.4V-87.8H1222.4zM1234.4 -110.1H1256.4V-87.8H1234.4zM1256.4 -110.1H1263.4V-87.8H1256.4zM1263.4 -110.1H1272.4V-87.8H1263.4zM1272.4 -110.1H1279.4V-87.8H1272.4zM1279.4 -106.1H1297.1V-87.8H1279.4zM1098.4 -87.8H1107.4V-71.2H1098.4zM1107.4 -87.8H1147.4V-71.2H1107.4zM1147.4 -87.8H1156.4V-71.2H1147.4zM1156.4 -87.8H1163.4V-71.2H1156.4zM1163.4 -87.8H1179.4V-71.2H1163.4zM1179.4 -87.8H1191.4V-71.2H1179.4zM1191.4 -87.8H1198.4V-71.2H1191.4zM1198.4 -87.8H1228.4V-76.2H1198.4zM1228.4 -87.8H1250.4V-76.2H1228.4zM1250.4 -87.8H1280.4V-71.2H1250.4zM1280.4 -87.8H1297.1V-71.2H1280.4zM1098.4 -54.9H1105.4V-34.3H1098.4zM1105.4 -54.9H1127.4V-34.3H1105.4zM1127.4 -54.9H1134.4V-34.3H1127.4zM1134.4 -54.9H1141.4V-34.3H1134.4zM1141.4 -54.9H1171.4V-34.3H1141.4zM1171.4 -50.9H1193.4V-34.3H1171.4zM1193.4 -54.9H1215.4V-34.3H1193.4zM1215.4 -54.9H1245.4V-34.3H1215.4zM1245.4 -52.9H1275.4V-34.3H1245.4zM1275.4 -54.9H1297.1V-34.3H1275.4zM1098.4 -34.3H1105.4V-13.4H1098.4zM1105.4 -34.3H1121.4V-13.4H1105.4zM1121.4 -34.3H1130.4V-18.4H1121.4zM1130.4 -34.3H1152.4V-15.4H1130.4zM1152.4 -34.3H1161.4V-13.4H1152.4zM1161.4 -34.3H1173.4V-13.4H1161.4zM1173.4 -34.3H1213.4V-13.4H1173.4zM1213.4 -34.3H1222.4V-18.4H1213.4zM1222.4 -34.3H1231.4V-13.4H1222.4zM1231.4 -34.3H1253.4V-18.4H1231.4zM1253.4 -34.3H1262.4V-13.4H1253.4zM1262.4 -34.3H1284.4V-13.4H1262.4zM1284.4 -34.3H1297.1V-13.4H1284.4zM1098.4 0.4H1128.4V18.2H1098.4zM1128.4 -1.6H1137.4V18.2H1128.4zM1137.4 -1.6H1149.4V18.2H1137.4zM1149.4 0.4H1158.4V18.2H1149.4zM1158.4 0.4H1165.4V18.2H1158.4zM1165.4 -1.6H1187.4V18.2H1165.4zM1187.4 2.4H1194.4V18.2H1187.4zM1194.4 0.4H1201.4V18.2H1194.4zM1201.4 0.4H1223.4V18.2H1201.4zM1223.4 2.4H1253.4V18.2H1223.4zM1253.4 -1.6H1283.4V18.2H1253.4zM1283.4 -1.6H1297.1V18.2H1283.4zM1098.4 18.2H1107.4V42.1H1098.4zM1107.4 18.2H1147.4V42.1H1107.4zM1147.4 18.2H1169.4V42.1H1147.4zM1169.4 18.2H1199.4V40.1H1169.4zM1199.4 18.2H1239.4V42.1H1199.4zM1239.4 18.2H1251.4V42.1H1239.4zM1251.4 18.2H1273.4V40.1H1251.4zM1273.4 18.2H1297.1V37.1H1273.4zM1098.4 57.9H1138.4V72.1H1098.4zM1138.4 55.9H1154.4V72.1H1138.4zM1154.4 57.9H1184.4V72.1H1154.4zM1184.4 53.9H1214.4V72.1H1184.4zM1214.4 55.9H1226.4V72.1H1214.4zM1226.4 55.9H1233.4V72.1H1226.4zM1233.4 53.9H1255.4V72.1H1233.4zM1255.4 57.9H1285.4V72.1H1255.4zM1285.4 55.9H1297.1V72.1H1285.4zM1098.4 72.1H1107.4V96.1H1098.4zM1107.4 72.1H1123.4V96.1H1107.4zM1123.4 72.1H1135.4V94.1H1123.4zM1135.4 72.1H1147.4V94.1H1135.4zM1147.4 72.1H1159.4V96.1H1147.4zM1159.4 72.1H1189.4V94.1H1159.4zM1189.4 72.1H1219.4V96.1H1189.4zM1219.4 72.1H1231.4V96.1H1219.4zM1231.4 72.1H1247.4V96.1H1231.4zM1247.4 72.1H1277.4V96.1H1247.4zM1277.4 72.1H1297.1V91.1H1277.4zM1098.4 114.9H1138.4V134.4H1098.4zM1138.4 110.9H1168.4V134.4H1138.4zM1168.4 110.9H1175.4V134.4H1168.4zM1175.4 110.9H1182.4V134.4H1175.4zM1182.4 110.9H1222.4V134.4H1182.4zM1222.4 110.9H1238.4V134.4H1222.4zM1238.4 110.9H1268.4V134.4H1238.4zM1268.4 110.9H1297.1V134.4H1268.4zM1098.4 134.4H1114.4V153.1H1098.4zM1114.4 134.4H1144.4V148.1H1114.4zM1144.4 134.4H1151.4V153.1H1144.4zM1151.4 134.4H1167.4V151.1H1151.4zM1167.4 134.4H1183.4V153.1H1167.4zM1183.4 134.4H1199.4V153.1H1183.4zM1199.4 134.4H1208.4V148.1H1199.4zM1208.4 134.4H1224.4V153.1H1208.4zM1224.4 134.4H1240.4V153.1H1224.4zM1240.4 134.4H1270.4V153.1H1240.4zM1270.4 134.4H1297.1V153.1H1270.4zM1098.4 164.9H1114.4V186.8H1098.4zM1114.4 164.9H1123.4V186.8H1114.4zM1123.4 164.9H1130.4V186.8H1123.4zM1130.4 168.9H1146.4V186.8H1130.4zM1146.4 166.9H1158.4V186.8H1146.4zM1158.4 164.9H1180.4V186.8H1158.4zM1180.4 166.9H1192.4V186.8H1180.4zM1192.4 168.9H1214.4V186.8H1192.4zM1214.4 164.9H1223.4V186.8H1214.4zM1223.4 164.9H1232.4V186.8H1223.4zM1232.4 164.9H1254.4V186.8H1232.4zM1254.4 166.9H1270.4V186.8H1254.4zM1270.4 164.9H1297.1V186.8H1270.4zM1098.4 186.8H1105.4V203.6H1098.4zM1105.4 186.8H1145.4V203.6H1105.4zM1145.4 186.8H1167.4V203.6H1145.4zM1167.4 186.8H1197.4V206.6H1167.4zM1197.4 186.8H1227.4V208.6H1197.4zM1227.4 186.8H1267.4V208.6H1227.4zM1267.4 186.8H1279.4V208.6H1267.4zM1279.4 186.8H1297.1V208.6H1279.4zM1312.9 -555.6H1324.9V-537.7H1312.9zM1324.9 -555.6H1331.9V-537.7H1324.9zM1331.9 -557.6H1371.9V-537.7H1331.9zM1371.9 -557.6H1401.9V-537.7H1371.9zM1401.9 -555.6H1407.2V-537.7H1401.9zM1312.9 -537.7H1342.9V-517H1312.9zM1342.9 -537.7H1364.9V-515H1342.9zM1364.9 -537.7H1373.9V-515H1364.9zM1373.9 -537.7H1380.9V-515H1373.9zM1380.9 -537.7H1389.9V-517H1380.9zM1389.9 -537.7H1396.9V-515H1389.9zM1396.9 -537.7H1407.2V-515H1396.9zM1312.9 -495.7H1342.9V-475.3H1312.9zM1342.9 -493.7H1354.9V-475.3H1342.9zM1354.9 -495.7H1384.9V-475.3H1354.9zM1384.9 -495.7H1407.2V-475.3H1384.9zM1312.9 -475.3H1342.9V-453.4H1312.9zM1342.9 -475.3H1358.9V-453.4H1342.9zM1358.9 -475.3H1398.9V-453.4H1358.9zM1398.9 -475.3H1407.2V-455.4H1398.9zM1312.9 -441.6H1321.9V-421.3H1312.9zM1321.9 -439.6H1351.9V-421.3H1321.9zM1351.9 -439.6H1367.9V-421.3H1351.9zM1367.9 -441.6H1407.2V-421.3H1367.9zM1312.9 -421.3H1324.9V-400.7H1312.9zM1324.9 -421.3H1364.9V-400.7H1324.9zM1364.9 -421.3H1386.9V-402.7H1364.9zM1386.9 -421.3H1395.9V-405.7H1386.9zM1395.9 -421.3H1407.2V-400.7H1395.9zM1312.9 -385.9H1324.9V-366.1H1312.9zM1324.9 -387.9H1346.9V-366.1H1324.9zM1346.9 -383.9H1386.9V-366.1H1346.9zM1386.9 -383.9H1398.9V-366.1H1386.9zM1398.9 -383.9H1407.2V-366.1H1398.9zM1312.9 -366.1H1328.9V-346.6H1312.9zM1328.9 -366.1H1340.9V-348.6H1328.9zM1340.9 -366.1H1370.9V-351.6H1340.9zM1370.9 -366.1H1407.2V-348.6H1370.9zM1312.9 -331.4H1334.9V-311.1H1312.9zM1334.9 -331.4H1350.9V-311.1H1334.9zM1350.9 -327.4H1362.9V-311.1H1350.9zM1362.9 -331.4H1371.9V-311.1H1362.9zM1371.9 -331.4H1407.2V-311.1H1371.9zM1312.9 -311.1H1334.9V-291.4H1312.9zM1334.9 -311.1H1343.9V-291.4H1334.9zM1343.9 -311.1H1383.9V-291.4H1343.9zM1383.9 -311.1H1392.9V-291.4H1383.9zM1392.9 -311.1H1407.2V-291.4H1392.9zM1312.9 -274.6H1352.9V-258.7H1312.9zM1352.9 -276.6H1374.9V-258.7H1352.9zM1374.9 -272.6H1381.9V-258.7H1374.9zM1381.9 -276.6H1390.9V-258.7H1381.9zM1390.9 -274.6H1399.9V-258.7H1390.9zM1399.9 -272.6H1407.2V-258.7H1399.9zM1312.9 -258.7H1352.9V-235.2H1312.9zM1352.9 -258.7H1392.9V-235.2H1352.9zM1392.9 -258.7H1407.2V-235.2H1392.9zM1312.9 -219.8H1342.9V-201.4H1312.9zM1342.9 -223.8H1351.9V-201.4H1342.9zM1351.9 -223.8H1360.9V-201.4H1351.9zM1360.9 -223.8H1367.9V-201.4H1360.9zM1367.9 -223.8H1389.9V-201.4H1367.9zM1389.9 -221.8H1407.2V-201.4H1389.9zM1312.9 -201.4H1319.9V-179.8H1312.9zM1319.9 -201.4H1349.9V-184.8H1319.9zM1349.9 -201.4H1365.9V-181.8H1349.9zM1365.9 -201.4H1377.9V-179.8H1365.9zM1377.9 -201.4H1389.9V-181.8H1377.9zM1389.9 -201.4H1398.9V-181.8H1389.9zM1398.9 -201.4H1407.2V-179.8H1398.9zM1312.9 -164.2H1321.9V-144.2H1312.9zM1321.9 -166.2H1351.9V-144.2H1321.9zM1351.9 -168.2H1367.9V-144.2H1351.9zM1367.9 -168.2H1379.9V-144.2H1367.9zM1379.9 -168.2H1386.9V-144.2H1379.9zM1386.9 -168.2H1395.9V-144.2H1386.9zM1395.9 -166.2H1407.2V-144.2H1395.9zM1312.9 -144.2H1324.9V-125.3H1312.9zM1324.9 -144.2H1331.9V-125.3H1324.9zM1331.9 -144.2H1371.9V-125.3H1331.9zM1371.9 -144.2H1383.9V-125.3H1371.9zM1383.9 -144.2H1392.9V-125.3H1383.9zM1392.9 -144.2H1407.2V-125.3H1392.9zM1312.9 -109.7H1321.9V-92.3H1312.9zM1321.9 -111.7H1330.9V-92.3H1321.9zM1330.9 -111.7H1342.9V-92.3H1330.9zM1342.9 -111.7H1382.9V-92.3H1342.9zM1382.9 -107.7H1407.2V-92.3H1382.9zM1312.9 -92.3H1334.9V-74.9H1312.9zM1334.9 -92.3H1346.9V-69.9H1334.9zM1346.9 -92.3H1362.9V-69.9H1346.9zM1362.9 -92.3H1371.9V-69.9H1362.9zM1371.9 -92.3H1401.9V-69.9H1371.9zM1401.9 -92.3H1407.2V-71.9H1401.9zM1312.9 -52.1H1321.9V-33.2H1312.9zM1321.9 -56.1H1343.9V-33.2H1321.9zM1343.9 -54.1H1373.9V-33.2H1343.9zM1373.9 -56.1H1395.9V-33.2H1373.9zM1395.9 -54.1H1407.2V-33.2H1395.9zM1312.9 -33.2H1319.9V-13.4H1312.9zM1319.9 -33.2H1359.9V-13.4H1319.9zM1359.9 -33.2H1381.9V-13.4H1359.9zM1381.9 -33.2H1390.9V-18.4H1381.9zM1390.9 -33.2H1407.2V-15.4H1390.9zM1312.9 -1.6H1319.9V23.1H1312.9zM1319.9 0.4H1359.9V23.1H1319.9zM1359.9 -1.6H1399.9V23.1H1359.9zM1399.9 2.4H1407.2V23.1H1399.9zM1312.9 23.1H1334.9V42.1H1312.9zM1334.9 23.1H1343.9V37.1H1334.9zM1343.9 23.1H1352.9V42.1H1343.9zM1352.9 23.1H1374.9V42.1H1352.9zM1374.9 23.1H1381.9V42.1H1374.9zM1381.9 23.1H1388.9V40.1H1381.9zM1388.9 23.1H1407.2V42.1H1388.9zM1312.9 53.9H1319.9V74.4H1312.9zM1319.9 57.9H1326.9V74.4H1319.9zM1326.9 53.9H1366.9V74.4H1326.9zM1366.9 57.9H1382.9V74.4H1366.9zM1382.9 53.9H1391.9V74.4H1382.9zM1391.9 53.9H1407.2V74.4H1391.9zM1312.9 74.4H1342.9V91.6H1312.9zM1342.9 74.4H1382.9V94.6H1342.9zM1382.9 74.4H1389.9V94.6H1382.9zM1389.9 74.4H1398.9V91.6H1389.9zM1398.9 74.4H1407.2V94.6H1398.9zM1312.9 110.4H1319.9V133.8H1312.9zM1319.9 110.4H1328.9V133.8H1319.9zM1328.9 110.4H1335.9V133.8H1328.9zM1335.9 110.4H1351.9V133.8H1335.9zM1351.9 112.4H1360.9V133.8H1351.9zM1360.9 110.4H1390.9V133.8H1360.9zM1390.9 110.4H1407.2V133.8H1390.9zM1312.9 133.8H1324.9V148.1H1312.9zM1324.9 133.8H1331.9V153.1H1324.9zM1331.9 133.8H1347.9V153.1H1331.9zM1347.9 133.8H1354.9V153.1H1347.9zM1354.9 133.8H1361.9V153.1H1354.9zM1361.9 133.8H1368.9V153.1H1361.9zM1368.9 133.8H1384.9V153.1H1368.9zM1384.9 133.8H1400.9V153.1H1384.9zM1400.9 133.8H1407.2V153.1H1400.9zM1422.8 -614.1H1444.8V-590.7H1422.8zM1444.8 -614.1H1453.8V-590.7H1444.8zM1453.8 -612.1H1475.8V-590.7H1453.8zM1475.8 -614.1H1505.1V-590.7H1475.8zM1422.8 -590.7H1431.8V-573.4H1422.8zM1431.8 -590.7H1453.8V-571.4H1431.8zM1453.8 -590.7H1493.8V-576.4H1453.8zM1493.8 -590.7H1505.1V-571.4H1493.8zM1422.8 -555.6H1462.8V-538.5H1422.8zM1462.8 -557.6H1484.8V-538.5H1462.8zM1484.8 -557.6H1505.1V-538.5H1484.8zM1422.8 -538.5H1452.8V-515H1422.8zM1452.8 -538.5H1482.8V-517H1452.8zM1482.8 -538.5H1494.8V-515H1482.8zM1494.8 -538.5H1505.1V-520H1494.8zM1422.8 -493.7H1462.8V-477H1422.8zM1462.8 -495.7H1505.1V-477H1462.8zM1422.8 -477H1462.8V-458.4H1422.8zM1462.8 -477H1484.8V-458.4H1462.8zM1484.8 -477H1493.8V-458.4H1484.8zM1493.8 -477H1505.1V-455.4H1493.8zM1422.8 -439.6H1434.8V-422.4H1422.8zM1434.8 -441.6H1456.8V-422.4H1434.8zM1456.8 -439.6H1496.8V-422.4H1456.8zM1496.8 -437.6H1505.1V-422.4H1496.8zM1422.8 -422.4H1462.8V-402.7H1422.8zM1462.8 -422.4H1484.8V-400.7H1462.8zM1484.8 -422.4H1505.1V-400.7H1484.8zM1422.8 -387.9H1438.8V-369H1422.8zM1438.8 -385.9H1445.8V-369H1438.8zM1445.8 -383.9H1467.8V-369H1445.8zM1467.8 -383.9H1483.8V-369H1467.8zM1483.8 -387.9H1499.8V-369H1483.8zM1499.8 -387.9H1505.1V-369H1499.8zM1422.8 -369H1444.8V-346.6H1422.8zM1444.8 -369H1466.8V-351.6H1444.8zM1466.8 -369H1475.8V-348.6H1466.8zM1475.8 -369H1491.8V-351.6H1475.8zM1491.8 -369H1505.1V-346.6H1491.8zM1422.8 -331.4H1434.8V-312.2H1422.8zM1434.8 -331.4H1443.8V-312.2H1434.8zM1443.8 -327.4H1483.8V-312.2H1443.8zM1483.8 -331.4H1505.1V-312.2H1483.8zM1422.8 -312.2H1431.8V-293.4H1422.8zM1431.8 -312.2H1440.8V-296.4H1431.8zM1440.8 -312.2H1447.8V-293.4H1440.8zM1447.8 -312.2H1454.8V-296.4H1447.8zM1454.8 -312.2H1461.8V-291.4H1454.8zM1461.8 -312.2H1483.8V-291.4H1461.8zM1483.8 -312.2H1492.8V-296.4H1483.8zM1492.8 -312.2H1505.1V-296.4H1492.8zM1422.8 -272.6H1444.8V-252.9H1422.8zM1444.8 -272.6H1453.8V-252.9H1444.8zM1453.8 -276.6H1460.8V-252.9H1453.8zM1460.8 -272.6H1476.8V-252.9H1460.8zM1476.8 -276.6H1505.1V-252.9H1476.8zM1422.8 -252.9H1434.8V-235.2H1422.8zM1434.8 -252.9H1446.8V-235.2H1434.8zM1446.8 -252.9H1486.8V-235.2H1446.8zM1486.8 -252.9H1498.8V-237.2H1486.8zM1498.8 -252.9H1505.1V-240.2H1498.8zM1422.8 -219.8H1429.8V-200.2H1422.8zM1429.8 -223.8H1438.8V-200.2H1429.8zM1438.8 -223.8H1478.8V-200.2H1438.8zM1478.8 -223.8H1490.8V-200.2H1478.8zM1490.8 -221.8H1497.8V-200.2H1490.8zM1497.8 -221.8H1505.1V-200.2H1497.8zM1422.8 -200.2H1429.8V-179.8H1422.8zM1429.8 -200.2H1438.8V-179.8H1429.8zM1438.8 -200.2H1445.8V-181.8H1438.8zM1445.8 -200.2H1467.8V-184.8H1445.8zM1467.8 -200.2H1505.1V-179.8H1467.8zM1422.8 -168.2H1438.8V-144H1422.8zM1438.8 -166.2H1447.8V-144H1438.8zM1447.8 -168.2H1459.8V-144H1447.8zM1459.8 -168.2H1489.8V-144H1459.8zM1489.8 -168.2H1505.1V-144H1489.8zM1422.8 -144H1444.8V-130.3H1422.8zM1444.8 -144H1460.8V-125.3H1444.8zM1460.8 -144H1472.8V-127.3H1460.8zM1472.8 -144H1505.1V-125.3H1472.8zM1422.8 -109.7H1444.8V-88.1H1422.8zM1444.8 -107.7H1474.8V-88.1H1444.8zM1474.8 -107.7H1496.8V-88.1H1474.8zM1496.8 -111.7H1505.1V-88.1H1496.8zM1422.8 -88.1H1462.8V-69.9H1422.8zM1462.8 -88.1H1484.8V-69.9H1462.8zM1484.8 -88.1H1505.1V-69.9H1484.8zM1422.8 -56.1H1452.8V-37.7H1422.8zM1452.8 -56.1H1464.8V-37.7H1452.8zM1464.8 -52.1H1486.8V-37.7H1464.8zM1486.8 -56.1H1495.8V-37.7H1486.8zM1495.8 -54.1H1505.1V-37.7H1495.8zM1422.8 -37.7H1434.8V-13.4H1422.8zM1434.8 -37.7H1446.8V-13.4H1434.8zM1446.8 -37.7H1462.8V-13.4H1446.8zM1462.8 -37.7H1505.1V-13.4H1462.8zM1422.8 -1.6H1434.8V19H1422.8zM1434.8 -1.6H1450.8V19H1434.8zM1450.8 -1.6H1459.8V19H1450.8zM1459.8 -1.6H1489.8V19H1459.8zM1489.8 2.4H1505.1V19H1489.8zM1422.8 19H1452.8V37.1H1422.8zM1452.8 19H1464.8V42.1H1452.8zM1464.8 19H1471.8V37.1H1464.8zM1471.8 19H1505.1V42.1H1471.8zM1422.8 53.9H1434.8V72.5H1422.8zM1434.8 55.9H1450.8V72.5H1434.8zM1450.8 57.9H1490.8V72.5H1450.8zM1490.8 55.9H1505.1V72.5H1490.8zM1422.8 72.5H1434.8V91.6H1422.8zM1434.8 72.5H1441.8V94.6H1434.8zM1441.8 72.5H1471.8V94.6H1441.8zM1471.8 72.5H1505.1V96.6H1471.8zM1531.9 -670.4H1540.9V-652.6H1531.9zM1540.9 -670.4H1552.9V-652.6H1540.9zM1552.9 -670.4H1564.9V-652.6H1552.9zM1564.9 -670.4H1594.9V-652.6H1564.9zM1594.9 -670.4H1620.3V-652.6H1594.9zM1531.9 -652.6H1553.9V-630.9H1531.9zM1553.9 -652.6H1583.9V-635.9H1553.9zM1583.9 -652.6H1605.9V-635.9H1583.9zM1605.9 -652.6H1620.3V-630.9H1605.9zM1531.9 -612.1H1547.9V-592.2H1531.9zM1547.9 -614.1H1554.9V-592.2H1547.9zM1554.9 -614.1H1570.9V-592.2H1554.9zM1570.9 -614.1H1582.9V-592.2H1570.9zM1582.9 -612.1H1589.9V-592.2H1582.9zM1589.9 -614.1H1611.9V-592.2H1589.9zM1611.9 -612.1H1620.3V-592.2H1611.9zM1531.9 -592.2H1538.9V-576.4H1531.9zM1538.9 -592.2H1550.9V-573.4H1538.9zM1550.9 -592.2H1566.9V-571.4H1550.9zM1566.9 -592.2H1573.9V-571.4H1566.9zM1573.9 -592.2H1603.9V-571.4H1573.9zM1603.9 -592.2H1610.9V-571.4H1603.9zM1610.9 -592.2H1620.3V-571.4H1610.9zM1531.9 -559.6H1561.9V-538.1H1531.9zM1561.9 -559.6H1601.9V-538.1H1561.9zM1601.9 -559.6H1613.9V-538.1H1601.9zM1613.9 -555.6H1620.3V-538.1H1613.9zM1531.9 -538.1H1571.9V-515H1531.9zM1571.9 -538.1H1578.9V-515H1571.9zM1578.9 -538.1H1587.9V-515H1578.9zM1587.9 -538.1H1599.9V-515H1587.9zM1599.9 -538.1H1620.3V-517H1599.9zM1531.9 -495.7H1547.9V-473.7H1531.9zM1547.9 -495.7H1563.9V-473.7H1547.9zM1563.9 -491.7H1570.9V-473.7H1563.9zM1570.9 -495.7H1579.9V-473.7H1570.9zM1579.9 -495.7H1609.9V-473.7H1579.9zM1609.9 -495.7H1620.3V-473.7H1609.9zM1531.9 -473.7H1547.9V-458.4H1531.9zM1547.9 -473.7H1577.9V-455.4H1547.9zM1577.9 -473.7H1584.9V-455.4H1577.9zM1584.9 -473.7H1600.9V-455.4H1584.9zM1600.9 -473.7H1620.3V-453.4H1600.9zM1531.9 -439.6H1543.9V-420.5H1531.9zM1543.9 -441.6H1559.9V-420.5H1543.9zM1559.9 -441.6H1599.9V-420.5H1559.9zM1599.9 -439.6H1608.9V-420.5H1599.9zM1608.9 -441.6H1620.3V-420.5H1608.9zM1531.9 -420.5H1553.9V-405.7H1531.9zM1553.9 -420.5H1562.9V-400.7H1553.9zM1562.9 -420.5H1569.9V-405.7H1562.9zM1569.9 -420.5H1599.9V-400.7H1569.9zM1599.9 -420.5H1608.9V-402.7H1599.9zM1608.9 -420.5H1620.3V-405.7H1608.9zM1531.9 -383.9H1538.9V-366.8H1531.9zM1538.9 -387.9H1545.9V-366.8H1538.9zM1545.9 -383.9H1554.9V-366.8H1545.9zM1554.9 -387.9H1584.9V-366.8H1554.9zM1584.9 -385.9H1591.9V-366.8H1584.9zM1591.9 -387.9H1600.9V-366.8H1591.9zM1600.9 -387.9H1620.3V-366.8H1600.9zM1531.9 -366.8H1571.9V-346.6H1531.9zM1571.9 -366.8H1578.9V-351.6H1571.9zM1578.9 -366.8H1587.9V-346.6H1578.9zM1587.9 -366.8H1603.9V-351.6H1587.9zM1603.9 -366.8H1620.3V-346.6H1603.9zM1531.9 -331.4H1561.9V-313.4H1531.9zM1561.9 -327.4H1568.9V-313.4H1561.9zM1568.9 -331.4H1580.9V-313.4H1568.9zM1580.9 -327.4H1592.9V-313.4H1580.9zM1592.9 -331.4H1620.3V-313.4H1592.9zM1531.9 -313.4H1543.9V-291.4H1531.9zM1543.9 -313.4H1583.9V-291.4H1543.9zM1583.9 -313.4H1620.3V-291.4H1583.9zM1531.9 -276.6H1540.9V-254.1H1531.9zM1540.9 -276.6H1580.9V-254.1H1540.9zM1580.9 -276.6H1610.9V-254.1H1580.9zM1610.9 -276.6H1620.3V-254.1H1610.9zM1531.9 -254.1H1553.9V-235.2H1531.9zM1553.9 -254.1H1560.9V-237.2H1553.9zM1560.9 -254.1H1600.9V-237.2H1560.9zM1600.9 -254.1H1620.3V-240.2H1600.9zM1531.9 -223.8H1543.9V-204.3H1531.9zM1543.9 -223.8H1565.9V-204.3H1543.9zM1565.9 -221.8H1605.9V-204.3H1565.9zM1605.9 -223.8H1620.3V-204.3H1605.9zM1531.9 -204.3H1538.9V-179.8H1531.9zM1538.9 -204.3H1547.9V-184.8H1538.9zM1547.9 -204.3H1554.9V-179.8H1547.9zM1554.9 -204.3H1570.9V-179.8H1554.9zM1570.9 -204.3H1582.9V-184.8H1570.9zM1582.9 -204.3H1591.9V-184.8H1582.9zM1591.9 -204.3H1620.3V-181.8H1591.9zM1531.9 -168.2H1561.9V-146H1531.9zM1561.9 -168.2H1601.9V-146H1561.9zM1601.9 -168.2H1613.9V-146H1601.9zM1613.9 -168.2H1620.3V-146H1613.9zM1531.9 -146H1571.9V-125.3H1531.9zM1571.9 -146H1578.9V-127.3H1571.9zM1578.9 -146H1600.9V-125.3H1578.9zM1600.9 -146H1612.9V-125.3H1600.9zM1612.9 -146H1620.3V-127.3H1612.9zM1531.9 -111.7H1571.9V-91.4H1531.9zM1571.9 -111.7H1578.9V-91.4H1571.9zM1578.9 -111.7H1608.9V-91.4H1578.9zM1608.9 -111.7H1620.3V-91.4H1608.9zM1531.9 -91.4H1540.9V-71.9H1531.9zM1540.9 -91.4H1552.9V-69.9H1540.9zM1552.9 -91.4H1592.9V-69.9H1552.9zM1592.9 -91.4H1604.9V-69.9H1592.9zM1604.9 -91.4H1613.9V-69.9H1604.9zM1613.9 -91.4H1620.3V-69.9H1613.9zM1531.9 -56.1H1561.9V-32.6H1531.9zM1561.9 -56.1H1570.9V-32.6H1561.9zM1570.9 -52.1H1610.9V-32.6H1570.9zM1610.9 -56.1H1620.3V-32.6H1610.9zM1531.9 -32.6H1553.9V-13.4H1531.9zM1553.9 -32.6H1560.9V-13.4H1553.9zM1560.9 -32.6H1590.9V-13.4H1560.9zM1590.9 -32.6H1599.9V-13.4H1590.9zM1599.9 -32.6H1606.9V-15.4H1599.9zM1606.9 -32.6H1620.3V-13.4H1606.9zM1531.9 -1.6H1543.9V17.4H1531.9zM1543.9 -1.6H1559.9V17.4H1543.9zM1559.9 -1.6H1566.9V17.4H1559.9zM1566.9 -1.6H1588.9V17.4H1566.9zM1588.9 -1.6H1620.3V17.4H1588.9zM1531.9 17.4H1561.9V42.1H1531.9zM1561.9 17.4H1591.9V42.1H1561.9zM1591.9 17.4H1600.9V40.1H1591.9zM1600.9 17.4H1620.3V37.1H1600.9zM1636.7 -727.1H1652.7V-702.5H1636.7zM1652.7 -727.1H1674.7V-702.5H1652.7zM1674.7 -727.1H1681.7V-702.5H1674.7zM1681.7 -727.1H1690.7V-702.5H1681.7zM1690.7 -727.1H1726.1V-702.5H1690.7zM1636.7 -702.5H1645.7V-688.6H1636.7zM1645.7 -702.5H1654.7V-683.6H1645.7zM1654.7 -702.5H1676.7V-683.6H1654.7zM1676.7 -702.5H1716.7V-688.6H1676.7zM1716.7 -702.5H1726.1V-685.6H1716.7zM1636.7 -670.4H1652.7V-647.7H1636.7zM1652.7 -670.4H1668.7V-647.7H1652.7zM1668.7 -670.4H1698.7V-647.7H1668.7zM1698.7 -670.4H1726.1V-647.7H1698.7zM1636.7 -647.7H1658.7V-630.9H1636.7zM1658.7 -647.7H1665.7V-632.9H1658.7zM1665.7 -647.7H1674.7V-630.9H1665.7zM1674.7 -647.7H1714.7V-630.9H1674.7zM1714.7 -647.7H1726.1V-630.9H1714.7zM1636.7 -614.1H1676.7V-592.9H1636.7zM1676.7 -614.1H1688.7V-592.9H1676.7zM1688.7 -614.1H1726.1V-592.9H1688.7zM1636.7 -592.9H1666.7V-571.4H1636.7zM1666.7 -592.9H1688.7V-571.4H1666.7zM1688.7 -592.9H1695.7V-571.4H1688.7zM1695.7 -592.9H1711.7V-571.4H1695.7zM1711.7 -592.9H1726.1V-571.4H1711.7zM1636.7 -559.6H1645.7V-534.8H1636.7zM1645.7 -557.6H1685.7V-534.8H1645.7zM1685.7 -557.6H1701.7V-534.8H1685.7zM1701.7 -559.6H1708.7V-534.8H1701.7zM1708.7 -555.6H1715.7V-534.8H1708.7zM1715.7 -559.6H1726.1V-534.8H1715.7zM1636.7 -534.8H1643.7V-515H1636.7zM1643.7 -534.8H1650.7V-515H1643.7zM1650.7 -534.8H1672.7V-515H1650.7zM1672.7 -534.8H1702.7V-520H1672.7zM1702.7 -534.8H1709.7V-515H1702.7zM1709.7 -534.8H1726.1V-515H1709.7zM1636.7 -495.7H1645.7V-475.9H1636.7zM1645.7 -495.7H1652.7V-475.9H1645.7zM1652.7 -495.7H1692.7V-475.9H1652.7zM1692.7 -495.7H1699.7V-475.9H1692.7zM1699.7 -495.7H1726.1V-475.9H1699.7zM1636.7 -475.9H1676.7V-455.4H1636.7zM1676.7 -475.9H1692.7V-455.4H1676.7zM1692.7 -475.9H1701.7V-455.4H1692.7zM1701.7 -475.9H1726.1V-453.4H1701.7zM1636.7 -439.6H1648.7V-420.5H1636.7zM1648.7 -441.6H1688.7V-420.5H1648.7zM1688.7 -441.6H1726.1V-420.5H1688.7zM1636.7 -420.5H1652.7V-402.7H1636.7zM1652.7 -420.5H1674.7V-405.7H1652.7zM1674.7 -420.5H1681.7V-405.7H1674.7zM1681.7 -420.5H1693.7V-400.7H1681.7zM1693.7 -420.5H1726.1V-400.7H1693.7zM1636.7 -387.9H1652.7V-366H1636.7zM1652.7 -387.9H1682.7V-366H1652.7zM1682.7 -387.9H1712.7V-366H1682.7zM1712.7 -385.9H1726.1V-366H1712.7zM1636.7 -366H1658.7V-346.6H1636.7zM1658.7 -366H1667.7V-346.6H1658.7zM1667.7 -366H1689.7V-346.6H1667.7zM1689.7 -366H1698.7V-348.6H1689.7zM1698.7 -366H1707.7V-346.6H1698.7zM1707.7 -366H1726.1V-346.6H1707.7zM1636.7 -331.4H1666.7V-311.9H1636.7zM1666.7 -327.4H1678.7V-311.9H1666.7zM1678.7 -331.4H1690.7V-311.9H1678.7zM1690.7 -329.4H1706.7V-311.9H1690.7zM1706.7 -331.4H1726.1V-311.9H1706.7zM1636.7 -311.9H1645.7V-291.4H1636.7zM1645.7 -311.9H1661.7V-296.4H1645.7zM1661.7 -311.9H1673.7V-291.4H1661.7zM1673.7 -311.9H1680.7V-296.4H1673.7zM1680.7 -311.9H1692.7V-291.4H1680.7zM1692.7 -311.9H1726.1V-291.4H1692.7zM1636.7 -272.6H1676.7V-257.4H1636.7zM1676.7 -276.6H1716.7V-257.4H1676.7zM1716.7 -276.6H1726.1V-257.4H1716.7zM1636.7 -257.4H1666.7V-235.2H1636.7zM1666.7 -257.4H1696.7V-237.2H1666.7zM1696.7 -257.4H1726.1V-235.2H1696.7zM1636.7 -219.8H1676.7V-203.4H1636.7zM1676.7 -223.8H1716.7V-203.4H1676.7zM1716.7 -223.8H1726.1V-203.4H1716.7zM1636.7 -203.4H1676.7V-184.8H1636.7zM1676.7 -203.4H1692.7V-179.8H1676.7zM1692.7 -203.4H1714.7V-181.8H1692.7zM1714.7 -203.4H1726.1V-179.8H1714.7zM1636.7 -168.2H1652.7V-147.1H1636.7zM1652.7 -164.2H1682.7V-147.1H1652.7zM1682.7 -168.2H1712.7V-147.1H1682.7zM1712.7 -168.2H1726.1V-147.1H1712.7zM1636.7 -147.1H1676.7V-125.3H1636.7zM1676.7 -147.1H1692.7V-130.3H1676.7zM1692.7 -147.1H1708.7V-125.3H1692.7zM1708.7 -147.1H1726.1V-127.3H1708.7zM1636.7 -111.7H1645.7V-88.7H1636.7zM1645.7 -107.7H1657.7V-88.7H1645.7zM1657.7 -111.7H1666.7V-88.7H1657.7zM1666.7 -109.7H1678.7V-88.7H1666.7zM1678.7 -107.7H1708.7V-88.7H1678.7zM1708.7 -111.7H1726.1V-88.7H1708.7zM1636.7 -88.7H1648.7V-71.9H1636.7zM1648.7 -88.7H1688.7V-69.9H1648.7zM1688.7 -88.7H1697.7V-69.9H1688.7zM1697.7 -88.7H1713.7V-69.9H1697.7zM1713.7 -88.7H1726.1V-69.9H1713.7zM1636.7 -56.1H1666.7V-35H1636.7zM1666.7 -54.1H1673.7V-35H1666.7zM1673.7 -56.1H1713.7V-35H1673.7zM1713.7 -56.1H1726.1V-35H1713.7zM1636.7 -35H1676.7V-15.4H1636.7zM1676.7 -35H1692.7V-13.4H1676.7zM1692.7 -35H1701.7V-13.4H1692.7zM1701.7 -35H1708.7V-18.4H1701.7zM1708.7 -35H1726.1V-13.4H1708.7zM1745.9 -727.1H1775.9V-705.4H1745.9zM1775.9 -727.1H1797.9V-705.4H1775.9zM1797.9 -727.1H1819.9V-705.4H1797.9zM1819.9 -727.1H1859.9V-705.4H1819.9zM1859.9 -727.1H1868.9V-705.4H1859.9zM1868.9 -727.1H1876.6V-705.4H1868.9zM1745.9 -705.4H1752.9V-683.6H1745.9zM1752.9 -705.4H1792.9V-683.6H1752.9zM1792.9 -705.4H1822.9V-683.6H1792.9zM1822.9 -705.4H1834.9V-683.6H1822.9zM1834.9 -705.4H1876.6V-685.6H1834.9zM1745.9 -670.4H1757.9V-647.8H1745.9zM1757.9 -670.4H1787.9V-647.8H1757.9zM1787.9 -670.4H1803.9V-647.8H1787.9zM1803.9 -670.4H1815.9V-647.8H1803.9zM1815.9 -670.4H1855.9V-647.8H1815.9zM1855.9 -668.4H1876.6V-647.8H1855.9zM1745.9 -647.8H1752.9V-630.9H1745.9zM1752.9 -647.8H1761.9V-635.9H1752.9zM1761.9 -647.8H1783.9V-630.9H1761.9zM1783.9 -647.8H1792.9V-635.9H1783.9zM1792.9 -647.8H1804.9V-630.9H1792.9zM1804.9 -647.8H1811.9V-630.9H1804.9zM1811.9 -647.8H1818.9V-632.9H1811.9zM1818.9 -647.8H1834.9V-630.9H1818.9zM1834.9 -647.8H1841.9V-630.9H1834.9zM1841.9 -647.8H1876.6V-635.9H1841.9zM1745.9 -612.1H1754.9V-595.1H1745.9zM1754.9 -610.1H1761.9V-595.1H1754.9zM1761.9 -614.1H1777.9V-595.1H1761.9zM1777.9 -614.1H1799.9V-595.1H1777.9zM1799.9 -614.1H1829.9V-595.1H1799.9zM1829.9 -614.1H1838.9V-595.1H1829.9zM1838.9 -612.1H1845.9V-595.1H1838.9zM1845.9 -614.1H1854.9V-595.1H1845.9zM1854.9 -614.1H1861.9V-595.1H1854.9zM1861.9 -612.1H1876.6V-595.1H1861.9zM1745.9 -595.1H1754.9V-576.4H1745.9zM1754.9 -595.1H1766.9V-571.4H1754.9zM1766.9 -595.1H1782.9V-571.4H1766.9zM1782.9 -595.1H1812.9V-571.4H1782.9zM1812.9 -595.1H1819.9V-573.4H1812.9zM1819.9 -595.1H1859.9V-571.4H1819.9zM1859.9 -595.1H1876.6V-571.4H1859.9zM1745.9 -557.6H1757.9V-539.4H1745.9zM1757.9 -559.6H1779.9V-539.4H1757.9zM1779.9 -555.6H1786.9V-539.4H1779.9zM1786.9 -555.6H1795.9V-539.4H1786.9zM1795.9 -555.6H1835.9V-539.4H1795.9zM1835.9 -555.6H1842.9V-539.4H1835.9zM1842.9 -559.6H1876.6V-539.4H1842.9zM1745.9 -539.4H1767.9V-515H1745.9zM1767.9 -539.4H1783.9V-515H1767.9zM1783.9 -539.4H1823.9V-515H1783.9zM1823.9 -539.4H1832.9V-515H1823.9zM1832.9 -539.4H1841.9V-515H1832.9zM1841.9 -539.4H1848.9V-515H1841.9zM1848.9 -539.4H1864.9V-515H1848.9zM1864.9 -539.4H1876.6V-515H1864.9zM1745.9 -493.7H1752.9V-472.3H1745.9zM1752.9 -495.7H1782.9V-472.3H1752.9zM1782.9 -493.7H1791.9V-472.3H1782.9zM1791.9 -495.7H1800.9V-472.3H1791.9zM1800.9 -491.7H1830.9V-472.3H1800.9zM1830.9 -491.7H1846.9V-472.3H1830.9zM1846.9 -491.7H1876.6V-472.3H1846.9zM1745.9 -472.3H1752.9V-453.4H1745.9zM1752.9 -472.3H1761.9V-458.4H1752.9zM1761.9 -472.3H1770.9V-453.4H1761.9zM1770.9 -472.3H1786.9V-453.4H1770.9zM1786.9 -472.3H1826.9V-453.4H1786.9zM1826.9 -472.3H1856.9V-458.4H1826.9zM1856.9 -472.3H1876.6V-453.4H1856.9zM1745.9 -441.6H1767.9V-422.3H1745.9zM1767.9 -441.6H1783.9V-422.3H1767.9zM1783.9 -441.6H1792.9V-422.3H1783.9zM1792.9 -439.6H1804.9V-422.3H1792.9zM1804.9 -441.6H1811.9V-422.3H1804.9zM1811.9 -439.6H1820.9V-422.3H1811.9zM1820.9 -441.6H1850.9V-422.3H1820.9zM1850.9 -441.6H1859.9V-422.3H1850.9zM1859.9 -439.6H1876.6V-422.3H1859.9zM1745.9 -422.3H1757.9V-400.7H1745.9zM1757.9 -422.3H1766.9V-402.7H1757.9zM1766.9 -422.3H1778.9V-405.7H1766.9zM1778.9 -422.3H1787.9V-402.7H1778.9zM1787.9 -422.3H1809.9V-400.7H1787.9zM1809.9 -422.3H1818.9V-400.7H1809.9zM1818.9 -422.3H1848.9V-405.7H1818.9zM1848.9 -422.3H1876.6V-402.7H1848.9zM1745.9 -387.9H1767.9V-369.8H1745.9zM1767.9 -385.9H1779.9V-369.8H1767.9zM1779.9 -385.9H1819.9V-369.8H1779.9zM1819.9 -387.9H1831.9V-369.8H1819.9zM1831.9 -387.9H1876.6V-369.8H1831.9zM1745.9 -369.8H1761.9V-346.6H1745.9zM1761.9 -369.8H1791.9V-346.6H1761.9zM1791.9 -369.8H1803.9V-346.6H1791.9zM1803.9 -369.8H1812.9V-351.6H1803.9zM1812.9 -369.8H1819.9V-351.6H1812.9zM1819.9 -369.8H1849.9V-346.6H1819.9zM1849.9 -369.8H1876.6V-351.6H1849.9zM1745.9 -329.4H1775.9V-308.5H1745.9zM1775.9 -331.4H1805.9V-308.5H1775.9zM1805.9 -329.4H1814.9V-308.5H1805.9zM1814.9 -331.4H1854.9V-308.5H1814.9zM1854.9 -331.4H1876.6V-308.5H1854.9zM1745.9 -308.5H1757.9V-291.4H1745.9zM1757.9 -308.5H1764.9V-291.4H1757.9zM1764.9 -308.5H1794.9V-293.4H1764.9zM1794.9 -308.5H1803.9V-293.4H1794.9zM1803.9 -308.5H1810.9V-293.4H1803.9zM1810.9 -308.5H1822.9V-291.4H1810.9zM1822.9 -308.5H1829.9V-293.4H1822.9zM1829.9 -308.5H1851.9V-291.4H1829.9zM1851.9 -308.5H1858.9V-293.4H1851.9zM1858.9 -308.5H1876.6V-291.4H1858.9zM1745.9 -274.6H1757.9V-257.2H1745.9zM1757.9 -276.6H1797.9V-257.2H1757.9zM1797.9 -276.6H1813.9V-257.2H1797.9zM1813.9 -276.6H1853.9V-257.2H1813.9zM1853.9 -276.6H1876.6V-257.2H1853.9zM1745.9 -257.2H1752.9V-240.2H1745.9zM1752.9 -257.2H1782.9V-235.2H1752.9zM1782.9 -257.2H1791.9V-237.2H1782.9zM1791.9 -257.2H1807.9V-237.2H1791.9zM1807.9 -257.2H1823.9V-235.2H1807.9zM1823.9 -257.2H1863.9V-240.2H1823.9zM1863.9 -257.2H1876.6V-235.2H1863.9zM1745.9 -221.8H1775.9V-203.5H1745.9zM1775.9 -219.8H1797.9V-203.5H1775.9zM1797.9 -223.8H1819.9V-203.5H1797.9zM1819.9 -223.8H1849.9V-203.5H1819.9zM1849.9 -223.8H1858.9V-203.5H1849.9zM1858.9 -223.8H1865.9V-203.5H1858.9zM1865.9 -221.8H1876.6V-203.5H1865.9zM1745.9 -203.5H1757.9V-184.8H1745.9zM1757.9 -203.5H1797.9V-179.8H1757.9zM1797.9 -203.5H1806.9V-184.8H1797.9zM1806.9 -203.5H1846.9V-184.8H1806.9zM1846.9 -203.5H1853.9V-179.8H1846.9zM1853.9 -203.5H1860.9V-181.8H1853.9zM1860.9 -203.5H1876.6V-184.8H1860.9zM1745.9 -164.2H1785.9V-146.4H1745.9zM1785.9 -168.2H1792.9V-146.4H1785.9zM1792.9 -168.2H1804.9V-146.4H1792.9zM1804.9 -168.2H1826.9V-146.4H1804.9zM1826.9 -164.2H1866.9V-146.4H1826.9zM1866.9 -168.2H1876.6V-146.4H1866.9zM1745.9 -146.4H1785.9V-125.3H1745.9zM1785.9 -146.4H1792.9V-125.3H1785.9zM1792.9 -146.4H1814.9V-130.3H1792.9zM1814.9 -146.4H1836.9V-125.3H1814.9zM1836.9 -146.4H1858.9V-125.3H1836.9zM1858.9 -146.4H1876.6V-127.3H1858.9zM1745.9 -107.7H1775.9V-91.1H1745.9zM1775.9 -111.7H1784.9V-91.1H1775.9zM1784.9 -111.7H1800.9V-91.1H1784.9zM1800.9 -111.7H1830.9V-91.1H1800.9zM1830.9 -111.7H1870.9V-91.1H1830.9zM1870.9 -111.7H1876.6V-91.1H1870.9zM1745.9 -91.1H1775.9V-69.9H1745.9zM1775.9 -91.1H1787.9V-74.9H1775.9zM1787.9 -91.1H1799.9V-74.9H1787.9zM1799.9 -91.1H1829.9V-69.9H1799.9zM1829.9 -91.1H1836.9V-69.9H1829.9zM1836.9 -91.1H1852.9V-69.9H1836.9zM1852.9 -91.1H1864.9V-69.9H1852.9zM1864.9 -91.1H1876.6V-69.9H1864.9zM1893.4 -559.6H1933.4V-534.8H1893.4zM1933.4 -555.6H1955.4V-534.8H1933.4zM1955.4 -559.6H1964.4V-534.8H1955.4zM1964.4 -555.6H1994.4V-534.8H1964.4zM1994.4 -557.6H2034.4V-534.8H1994.4zM2034.4 -557.6H2074.4V-534.8H2034.4zM2074.4 -559.6H2083.4V-534.8H2074.4zM2083.4 -559.6H2105.4V-534.8H2083.4zM2105.4 -559.6H2121.4V-534.8H2105.4zM2121.4 -559.6H2143.4V-534.8H2121.4zM2143.4 -557.6H2165.4V-534.8H2143.4zM2165.4 -559.6H2196.6V-534.8H2165.4zM1893.4 -534.8H1902.4V-517H1893.4zM1902.4 -534.8H1909.4V-515H1902.4zM1909.4 -534.8H1925.4V-517H1909.4zM1925.4 -534.8H1965.4V-517H1925.4zM1965.4 -534.8H1974.4V-517H1965.4zM1974.4 -534.8H2004.4V-515H1974.4zM2004.4 -534.8H2011.4V-517H2004.4zM2011.4 -534.8H2018.4V-515H2011.4zM2018.4 -534.8H2034.4V-515H2018.4zM2034.4 -534.8H2043.4V-515H2034.4zM2043.4 -534.8H2050.4V-515H2043.4zM2050.4 -534.8H2059.4V-520H2050.4zM2059.4 -534.8H2089.4V-515H2059.4zM2089.4 -534.8H2096.4V-517H2089.4zM2096.4 -534.8H2136.4V-515H2096.4zM2136.4 -534.8H2145.4V-520H2136.4zM2145.4 -534.8H2167.4V-517H2145.4zM2167.4 -534.8H2174.4V-520H2167.4zM2174.4 -534.8H2196.6V-520H2174.4zM1893.4 -491.7H1915.4V-473.8H1893.4zM1915.4 -491.7H1945.4V-473.8H1915.4zM1945.4 -495.7H1957.4V-473.8H1945.4zM1957.4 -495.7H1987.4V-473.8H1957.4zM1987.4 -495.7H2027.4V-473.8H1987.4zM2027.4 -495.7H2057.4V-473.8H2027.4zM2057.4 -495.7H2064.4V-473.8H2057.4zM2064.4 -495.7H2086.4V-473.8H2064.4zM2086.4 -495.7H2116.4V-473.8H2086.4zM2116.4 -495.7H2128.4V-473.8H2116.4zM2128.4 -491.7H2137.4V-473.8H2128.4zM2137.4 -495.7H2177.4V-473.8H2137.4zM2177.4 -491.7H2184.4V-473.8H2177.4zM2184.4 -493.7H2196.6V-473.8H2184.4zM1893.4 -473.8H1915.4V-453.4H1893.4zM1915.4 -473.8H1955.4V-453.4H1915.4zM1955.4 -473.8H1995.4V-453.4H1955.4zM1995.4 -473.8H2017.4V-453.4H1995.4zM2017.4 -473.8H2047.4V-453.4H2017.4zM2047.4 -473.8H2054.4V-453.4H2047.4zM2054.4 -473.8H2070.4V-458.4H2054.4zM2070.4 -473.8H2110.4V-453.4H2070.4zM2110.4 -473.8H2150.4V-458.4H2110.4zM2150.4 -473.8H2157.4V-453.4H2150.4zM2157.4 -473.8H2196.6V-453.4H2157.4zM1893.4 -441.6H1915.4V-419.4H1893.4zM1915.4 -441.6H1931.4V-419.4H1915.4zM1931.4 -439.6H1953.4V-419.4H1931.4zM1953.4 -437.6H1962.4V-419.4H1953.4zM1962.4 -437.6H1978.4V-419.4H1962.4zM1978.4 -441.6H2008.4V-419.4H1978.4zM2008.4 -441.6H2038.4V-419.4H2008.4zM2038.4 -441.6H2060.4V-419.4H2038.4zM2060.4 -441.6H2100.4V-419.4H2060.4zM2100.4 -441.6H2107.4V-419.4H2100.4zM2107.4 -437.6H2129.4V-419.4H2107.4zM2129.4 -441.6H2159.4V-419.4H2129.4zM2159.4 -441.6H2171.4V-419.4H2159.4zM2171.4 -441.6H2178.4V-419.4H2171.4zM2178.4 -439.6H2196.6V-419.4H2178.4zM1893.4 -419.4H1923.4V-400.7H1893.4zM1923.4 -419.4H1930.4V-402.7H1923.4zM1930.4 -419.4H1960.4V-400.7H1930.4zM1960.4 -419.4H2000.4V-400.7H1960.4zM2000.4 -419.4H2040.4V-400.7H2000.4zM2040.4 -419.4H2047.4V-400.7H2040.4zM2047.4 -419.4H2059.4V-400.7H2047.4zM2059.4 -419.4H2066.4V-400.7H2059.4zM2066.4 -419.4H2096.4V-400.7H2066.4zM2096.4 -419.4H2112.4V-402.7H2096.4zM2112.4 -419.4H2124.4V-405.7H2112.4zM2124.4 -419.4H2133.4V-400.7H2124.4zM2133.4 -419.4H2145.4V-400.7H2133.4zM2145.4 -419.4H2157.4V-400.7H2145.4zM2157.4 -419.4H2169.4V-400.7H2157.4zM2169.4 -419.4H2181.4V-400.7H2169.4zM2181.4 -419.4H2196.6V-400.7H2181.4zM1893.4 -385.9H1902.4V-368.9H1893.4zM1902.4 -385.9H1911.4V-368.9H1902.4zM1911.4 -387.9H1951.4V-368.9H1911.4zM1951.4 -387.9H1991.4V-368.9H1951.4zM1991.4 -387.9H2007.4V-368.9H1991.4zM2007.4 -385.9H2023.4V-368.9H2007.4zM2023.4 -385.9H2039.4V-368.9H2023.4zM2039.4 -387.9H2048.4V-368.9H2039.4zM2048.4 -387.9H2057.4V-368.9H2048.4zM2057.4 -387.9H2073.4V-368.9H2057.4zM2073.4 -387.9H2080.4V-368.9H2073.4zM2080.4 -383.9H2110.4V-368.9H2080.4zM2110.4 -385.9H2117.4V-368.9H2110.4zM2117.4 -387.9H2124.4V-368.9H2117.4zM2124.4 -387.9H2164.4V-368.9H2124.4zM2164.4 -385.9H2180.4V-368.9H2164.4zM2180.4 -387.9H2187.4V-368.9H2180.4zM2187.4 -387.9H2196.6V-368.9H2187.4zM1893.4 -368.9H1900.4V-348.6H1893.4zM1900.4 -368.9H1912.4V-351.6H1900.4zM1912.4 -368.9H1919.4V-351.6H1912.4zM1919.4 -368.9H1949.4V-351.6H1919.4zM1949.4 -368.9H1958.4V-348.6H1949.4zM1958.4 -368.9H1998.4V-346.6H1958.4zM1998.4 -368.9H2038.4V-346.6H1998.4zM2038.4 -368.9H2045.4V-348.6H2038.4zM2045.4 -368.9H2054.4V-348.6H2045.4zM2054.4 -368.9H2063.4V-346.6H2054.4zM2063.4 -368.9H2085.4V-348.6H2063.4zM2085.4 -368.9H2092.4V-346.6H2085.4zM2092.4 -368.9H2108.4V-346.6H2092.4zM2108.4 -368.9H2130.4V-346.6H2108.4zM2130.4 -368.9H2152.4V-348.6H2130.4zM2152.4 -368.9H2161.4V-346.6H2152.4zM2161.4 -368.9H2170.4V-346.6H2161.4zM2170.4 -368.9H2186.4V-346.6H2170.4zM2186.4 -368.9H2196.6V-346.6H2186.4zM1893.4 -331.4H1900.4V-309.4H1893.4zM1900.4 -327.4H1916.4V-309.4H1900.4zM1916.4 -327.4H1925.4V-309.4H1916.4zM1925.4 -331.4H1937.4V-309.4H1925.4zM1937.4 -331.4H1959.4V-309.4H1937.4zM1959.4 -331.4H1968.4V-309.4H1959.4zM1968.4 -329.4H1990.4V-309.4H1968.4zM1990.4 -331.4H2012.4V-309.4H1990.4zM2012.4 -331.4H2042.4V-309.4H2012.4zM2042.4 -331.4H2082.4V-309.4H2042.4zM2082.4 -331.4H2089.4V-309.4H2082.4zM2089.4 -329.4H2105.4V-309.4H2089.4zM2105.4 -327.4H2145.4V-309.4H2105.4zM2145.4 -329.4H2152.4V-309.4H2145.4zM2152.4 -331.4H2174.4V-309.4H2152.4zM2174.4 -331.4H2196.6V-309.4H2174.4zM1893.4 -309.4H1905.4V-291.4H1893.4zM1905.4 -309.4H1935.4V-296.4H1905.4zM1935.4 -309.4H1947.4V-291.4H1935.4zM1947.4 -309.4H1969.4V-291.4H1947.4zM1969.4 -309.4H2009.4V-293.4H1969.4zM2009.4 -309.4H2021.4V-293.4H2009.4zM2021.4 -309.4H2033.4V-293.4H2021.4zM2033.4 -309.4H2040.4V-296.4H2033.4zM2040.4 -309.4H2056.4V-291.4H2040.4zM2056.4 -309.4H2068.4V-293.4H2056.4zM2068.4 -309.4H2098.4V-291.4H2068.4zM2098.4 -309.4H2107.4V-291.4H2098.4zM2107.4 -309.4H2114.4V-296.4H2107.4zM2114.4 -309.4H2130.4V-296.4H2114.4zM2130.4 -309.4H2146.4V-296.4H2130.4zM2146.4 -309.4H2158.4V-291.4H2146.4zM2158.4 -309.4H2167.4V-291.4H2158.4zM2167.4 -309.4H2183.4V-296.4H2167.4zM2183.4 -309.4H2196.6V-296.4H2183.4zM1893.4 -276.6H1902.4V-253.1H1893.4zM1902.4 -272.6H1911.4V-253.1H1902.4zM1911.4 -272.6H1951.4V-253.1H1911.4zM1951.4 -272.6H1960.4V-253.1H1951.4zM1960.4 -276.6H1976.4V-253.1H1960.4zM1976.4 -276.6H1983.4V-253.1H1976.4zM1983.4 -276.6H2013.4V-253.1H1983.4zM2013.4 -276.6H2022.4V-253.1H2013.4zM2022.4 -276.6H2029.4V-253.1H2022.4zM2029.4 -276.6H2038.4V-253.1H2029.4zM2038.4 -274.6H2050.4V-253.1H2038.4zM2050.4 -276.6H2090.4V-253.1H2050.4zM2090.4 -276.6H2102.4V-253.1H2090.4zM2102.4 -276.6H2124.4V-253.1H2102.4zM2124.4 -276.6H2164.4V-253.1H2124.4zM2164.4 -276.6H2186.4V-253.1H2164.4zM2186.4 -276.6H2196.6V-253.1H2186.4zM1893.4 -253.1H1909.4V-235.2H1893.4zM1909.4 -253.1H1921.4V-235.2H1909.4zM1921.4 -253.1H1928.4V-237.2H1921.4zM1928.4 -253.1H1968.4V-240.2H1928.4zM1968.4 -253.1H1975.4V-240.2H1968.4zM1975.4 -253.1H1991.4V-240.2H1975.4zM1991.4 -253.1H2000.4V-235.2H1991.4zM2000.4 -253.1H2040.4V-240.2H2000.4zM2040.4 -253.1H2062.4V-235.2H2040.4zM2062.4 -253.1H2071.4V-240.2H2062.4zM2071.4 -253.1H2083.4V-240.2H2071.4zM2083.4 -253.1H2092.4V-235.2H2083.4zM2092.4 -253.1H2122.4V-235.2H2092.4zM2122.4 -253.1H2129.4V-235.2H2122.4zM2129.4 -253.1H2145.4V-235.2H2129.4zM2145.4 -253.1H2185.4V-235.2H2145.4zM2185.4 -253.1H2196.6V-235.2H2185.4zM1893.4 -221.8H1923.4V-203.7H1893.4zM1923.4 -219.8H1932.4V-203.7H1923.4zM1932.4 -221.8H1972.4V-203.7H1932.4zM1972.4 -223.8H1984.4V-203.7H1972.4zM1984.4 -221.8H2006.4V-203.7H1984.4zM2006.4 -219.8H2018.4V-203.7H2006.4zM2018.4 -221.8H2034.4V-203.7H2018.4zM2034.4 -219.8H2074.4V-203.7H2034.4zM2074.4 -223.8H2114.4V-203.7H2074.4zM2114.4 -221.8H2121.4V-203.7H2114.4zM2121.4 -223.8H2151.4V-203.7H2121.4zM2151.4 -219.8H2191.4V-203.7H2151.4zM2191.4 -219.8H2196.6V-203.7H2191.4zM1893.4 -203.7H1905.4V-181.8H1893.4zM1905.4 -203.7H1927.4V-179.8H1905.4zM1927.4 -203.7H1957.4V-179.8H1927.4zM1957.4 -203.7H1969.4V-184.8H1957.4zM1969.4 -203.7H1976.4V-179.8H1969.4zM1976.4 -203.7H2016.4V-179.8H1976.4zM2016.4 -203.7H2025.4V-179.8H2016.4zM2025.4 -203.7H2037.4V-181.8H2025.4zM2037.4 -203.7H2059.4V-181.8H2037.4zM2059.4 -203.7H2075.4V-184.8H2059.4zM2075.4 -203.7H2115.4V-181.8H2075.4zM2115.4 -203.7H2145.4V-179.8H2115.4zM2145.4 -203.7H2161.4V-179.8H2145.4zM2161.4 -203.7H2196.6V-184.8H2161.4z"/>
<path fill="none" stroke="#e4e4e4" stroke-width="2.4" d="M701.6 -333.1H1083.4V-289.6H701.6zM701.6 -278.4H1083.4V-233.4H701.6zM701.6 -225.6H1083.4V-178H701.6zM701.6 -170H1083.4V-125.1H701.6zM701.6 -111.9H1083.4V-69.3H701.6zM1096.6 -497.4H1298.9V-451.6H1096.6zM1096.6 -443.4H1298.9V-398.9H1096.6zM1096.6 -389.7H1298.9V-344.9H1096.6zM1096.6 -333.1H1298.9V-289.6H1096.6zM1096.6 -278.4H1298.9V-233.4H1096.6zM1096.6 -225.6H1298.9V-178H1096.6zM1096.6 -170H1298.9V-125.1H1096.6zM1096.6 -111.9H1298.9V-69.3H1096.6zM1096.6 -56.6H1298.9V-11.6H1096.6zM1096.6 -3.4H1298.9V43.9H1096.6zM1096.6 52.1H1298.9V97.9H1096.6zM1096.6 109.1H1298.9V154.9H1096.6zM1096.6 163.1H1298.9V210.4H1096.6zM1311.1 -561.4H1409.1V-513.1H1311.1zM1311.1 -497.4H1409.1V-451.6H1311.1zM1311.1 -443.4H1409.1V-398.9H1311.1zM1311.1 -389.7H1409.1V-344.9H1311.1zM1311.1 -333.1H1409.1V-289.6H1311.1zM1311.1 -278.4H1409.1V-233.4H1311.1zM1311.1 -225.6H1409.1V-178H1311.1zM1311.1 -170H1409.1V-123.5H1311.1zM1311.1 -113.5H1409.1V-68.1H1311.1zM1311.1 -57.9H1409.1V-11.6H1311.1zM1311.1 -3.4H1409.1V43.9H1311.1zM1311.1 52.1H1409.1V98.4H1311.1zM1311.1 108.6H1409.1V154.9H1311.1zM1420.9 -615.9H1506.9V-569.6H1420.9zM1420.9 -561.4H1506.9V-513.1H1420.9zM1420.9 -497.4H1506.9V-451.6H1420.9zM1420.9 -443.4H1506.9V-398.9H1420.9zM1420.9 -389.7H1506.9V-344.9H1420.9zM1420.9 -333.1H1506.9V-289.6H1420.9zM1420.9 -278.4H1506.9V-233.4H1420.9zM1420.9 -225.6H1506.9V-178H1420.9zM1420.9 -170H1506.9V-123.5H1420.9zM1420.9 -113.5H1506.9V-68.1H1420.9zM1420.9 -57.9H1506.9V-11.6H1420.9zM1420.9 -3.4H1506.9V43.9H1420.9zM1420.9 52.1H1506.9V98.4H1420.9zM1530.1 -672.1H1622.2V-629.1H1530.1zM1530.1 -615.9H1622.2V-569.6H1530.1zM1530.1 -561.4H1622.2V-513.1H1530.1zM1530.1 -497.4H1622.2V-451.6H1530.1zM1530.1 -443.4H1622.2V-398.9H1530.1zM1530.1 -389.7H1622.2V-344.9H1530.1zM1530.1 -333.1H1622.2V-289.6H1530.1zM1530.1 -278.4H1622.2V-233.4H1530.1zM1530.1 -225.6H1622.2V-178H1530.1zM1530.1 -170H1622.2V-123.5H1530.1zM1530.1 -113.5H1622.2V-68.1H1530.1zM1530.1 -57.9H1622.2V-11.6H1530.1zM1530.1 -3.4H1622.2V43.9H1530.1zM1634.8 -728.9H1727.9V-681.9H1634.8zM1634.8 -672.1H1727.9V-629.1H1634.8zM1634.8 -615.9H1727.9V-569.6H1634.8zM1634.8 -561.4H1727.9V-513.1H1634.8zM1634.8 -497.4H1727.9V-451.6H1634.8zM1634.8 -443.4H1727.9V-398.9H1634.8zM1634.8 -389.7H1727.9V-344.9H1634.8zM1634.8 -333.1H1727.9V-289.6H1634.8zM1634.8 -278.4H1727.9V-233.4H1634.8zM1634.8 -225.6H1727.9V-178H1634.8zM1634.8 -170H1727.9V-123.5H1634.8zM1634.8 -113.5H1727.9V-68.1H1634.8zM1634.8 -57.9H1727.9V-11.6H1634.8zM1744.1 -728.9H1878.4V-681.9H1744.1zM1744.1 -672.1H1878.4V-629.1H1744.1zM1744.1 -615.9H1878.4V-569.6H1744.1zM1744.1 -561.4H1878.4V-513.1H1744.1zM1744.1 -497.4H1878.4V-451.6H1744.1zM1744.1 -443.4H1878.4V-398.9H1744.1zM1744.1 -389.7H1878.4V-344.9H1744.1zM1744.1 -333.1H1878.4V-289.6H1744.1zM1744.1 -278.4H1878.4V-233.4H1744.1zM1744.1 -225.6H1878.4V-178H1744.1zM1744.1 -170H1878.4V-123.5H1744.1zM1744.1 -113.5H1878.4V-68.1H1744.1zM1891.6 -561.4H2198.4V-513.1H1891.6zM1891.6 -497.4H2198.4V-451.6H1891.6zM1891.6 -443.4H2198.4V-398.9H1891.6zM1891.6 -389.7H2198.4V-344.9H1891.6zM1891.6 -333.1H2198.4V-289.6H1891.6zM1891.6 -278.4H2198.4V-233.4H1891.6zM1891.6 -225.6H2198.4V-178H1891.6z"/>
<path fill="none" stroke="#f6f6f6" stroke-width="1.3" stroke-dasharray="1.2 1.6" d="M701.6 -333.1H1083.4V-289.6H701.6zM701.6 -278.4H1083.4V-233.4H701.6zM701.6 -225.6H1083.4V-178H701.6zM701.6 -170H1083.4V-125.1H701.6zM701.6 -111.9H1083.4V-69.3H701.6zM1096.6 -497.4H1298.9V-451.6H1096.6zM1096.6 -443.4H1298.9V-398.9H1096.6zM1096.6 -389.7H1298.9V-344.9H1096.6zM1096.6 -333.1H1298.9V-289.6H1096.6zM1096.6 -278.4H1298.9V-233.4H1096.6zM1096.6 -225.6H1298.9V-178H1096.6zM1096.6 -170H1298.9V-125.1H1096.6zM1096.6 -111.9H1298.9V-69.3H1096.6zM1096.6 -56.6H1298.9V-11.6H1096.6zM1096.6 -3.4H1298.9V43.9H1096.6zM1096.6 52.1H1298.9V97.9H1096.6zM1096.6 109.1H1298.9V154.9H1096.6zM1096.6 163.1H1298.9V210.4H1096.6zM1311.1 -561.4H1409.1V-513.1H1311.1zM1311.1 -497.4H1409.1V-451.6H1311.1zM1311.1 -443.4H1409.1V-398.9H1311.1zM1311.1 -389.7H1409.1V-344.9H1311.1zM1311.1 -333.1H1409.1V-289.6H1311.1zM1311.1 -278.4H1409.1V-233.4H1311.1zM1311.1 -225.6H1409.1V-178H1311.1zM1311.1 -170H1409.1V-123.5H1311.1zM1311.1 -113.5H1409.1V-68.1H1311.1zM1311.1 -57.9H1409.1V-11.6H1311.1zM1311.1 -3.4H1409.1V43.9H1311.1zM1311.1 52.1H1409.1V98.4H1311.1zM1311.1 108.6H1409.1V154.9H1311.1zM1420.9 -615.9H1506.9V-569.6H1420.9zM1420.9 -561.4H1506.9V-513.1H1420.9zM1420.9 -497.4H1506.9V-451.6H1420.9zM1420.9 -443.4H1506.9V-398.9H1420.9zM1420.9 -389.7H1506.9V-344.9H1420.9zM1420.9 -333.1H1506.9V-289.6H1420.9zM1420.9 -278.4H1506.9V-233.4H1420.9zM1420.9 -225.6H1506.9V-178H1420.9zM1420.9 -170H1506.9V-123.5H1420.9zM1420.9 -113.5H1506.9V-68.1H1420.9zM1420.9 -57.9H1506.9V-11.6H1420.9zM1420.9 -3.4H1506.9V43.9H1420.9zM1420.9 52.1H1506.9V98.4H1420.9zM1530.1 -672.1H1622.2V-629.1H1530.1zM1530.1 -615.9H1622.2V-569.6H1530.1zM1530.1 -561.4H1622.2V-513.1H1530.1zM1530.1 -497.4H1622.2V-451.6H1530.1zM1530.1 -443.4H1622.2V-398.9H1530.1zM1530.1 -389.7H1622.2V-344.9H1530.1zM1530.1 -333.1H1622.2V-289.6H1530.1zM1530.1 -278.4H1622.2V-233.4H1530.1zM1530.1 -225.6H1622.2V-178H1530.1zM1530.1 -170H1622.2V-123.5H1530.1zM1530.1 -113.5H1622.2V-68.1H1530.1zM1530.1 -57.9H1622.2V-11.6H1530.1zM1530.1 -3.4H1622.2V43.9H1530.1zM1634.8 -728.9H1727.9V-681.9H1634.8zM1634.8 -672.1H1727.9V-629.1H1634.8zM1634.8 -615.9H1727.9V-569.6H1634.8zM1634.8 -561.4H1727.9V-513.1H1634.8zM1634.8 -497.4H1727.9V-451.6H1634.8zM1634.8 -443.4H1727.9V-398.9H1634.8zM1634.8 -389.7H1727.9V-344.9H1634.8zM1634.8 -333.1H1727.9V-289.6H1634.8zM1634.8 -278.4H1727.9V-233.4H1634.8zM1634.8 -225.6H1727.9V-178H1634.8zM1634.8 -170H1727.9V-123.5H1634.8zM1634.8 -113.5H1727.9V-68.1H1634.8zM1634.8 -57.9H1727.9V-11.6H1634.8zM1744.1 -728.9H1878.4V-681.9H1744.1zM1744.1 -672.1H1878.4V-629.1H1744.1zM1744.1 -615.9H1878.4V-569.6H1744.1zM1744.1 -561.4H1878.4V-513.1H1744.1zM1744.1 -497.4H1878.4V-451.6H1744.1zM1744.1 -443.4H1878.4V-398.9H1744.1zM1744.1 -389.7H1878.4V-344.9H1744.1zM1744.1 -333.1H1878.4V-289.6H1744.1zM1744.1 -278.4H1878.4V-233.4H1744.1zM1744.1 -225.6H1878.4V-178H1744.1zM1744.1 -170H1878.4V-123.5H1744.1zM1744.1 -113.5H1878.4V-68.1H1744.1zM1891.6 -561.4H2198.4V-513.1H1891.6zM1891.6 -497.4H2198.4V-451.6H1891.6zM1891.6 -443.4H2198.4V-398.9H1891.6zM1891.6 -389.7H2198.4V-344.9H1891.6zM1891.6 -333.1H2198.4V-289.6H1891.6zM1891.6 -278.4H2198.4V-233.4H1891.6zM1891.6 -225.6H2198.4V-178H1891.6z"/>
<path fill="#f9f9f8" d="M1246 53H1300V97H1246zM1062 -300H1080V-288H1062zM1201 -322H1232V-300H1201z"/>
<path d="M1519 -800V260" stroke="#e3e3e3" stroke-width="1.8" stroke-dasharray="44 11.5" stroke-dashoffset="-299" fill="none"/>
<g fill="#a0b3c0" stroke="#a0b3c0" stroke-width=".35" text-anchor="middle">
<text x="1064.8" y="-327.5" font-size="17.5" textLength="133" lengthAdjust="spacing">West 54th Street</text>
<text x="1078.2" y="-276.5" font-size="17.5" textLength="133" lengthAdjust="spacing">West 53rd Street</text>
<text x="1200.4" y="-112.7" font-size="17.5" textLength="133" lengthAdjust="spacing">West 50th Street</text>
<text x="1140.8" y="-54.6" font-size="17.5" textLength="133" lengthAdjust="spacing">West 49th Street</text>
<text x="1183" y="106.6" font-size="17.5" textLength="133" lengthAdjust="spacing">West 46th Street</text>
<text x="1427" y="-499" font-size="17.5" textLength="130" lengthAdjust="spacing">East 57th Street</text>
<text x="1670.9" y="-500.5" font-size="17.5" textLength="130" lengthAdjust="spacing">East 57th Street</text>
<text x="1590.3" y="-618.1" font-size="17.5" textLength="130" lengthAdjust="spacing">East 59th Street</text>
<text x="1526" y="-277.2" font-size="17.5" textLength="130" lengthAdjust="spacing">East 53rd Street</text>
<text x="1673.9" y="-331.2" font-size="17.5" textLength="130" lengthAdjust="spacing">East 54th Street</text>
<text x="1734.4" y="-277" font-size="17.5" textLength="130" lengthAdjust="spacing">East 53rd Street</text>
<text x="1567.8" y="-55.6" font-size="17.5" textLength="130" lengthAdjust="spacing">East 49th Street</text>
<text x="1654.1" y="-110.6" font-size="17.5" textLength="130" lengthAdjust="spacing">East 50th Street</text>
<text x="1092.6" y="-223.8" font-size="13" stroke-width=".1" textLength="98" lengthAdjust="spacing">West 52nd Street</text>
<text x="1112.3" y="-168.4" font-size="13" stroke-width=".1" textLength="94" lengthAdjust="spacing">West 51st Street</text>
<text x="1152.7" y="-3.3" font-size="13" stroke-width=".1" textLength="96" lengthAdjust="spacing">West 48th Street</text>
<text x="1170.7" y="53.4" font-size="13" stroke-width=".1" textLength="96" lengthAdjust="spacing">West 47th Street</text>
<text x="1356.9" y="-2.1" font-size="13" stroke-width=".1" textLength="93" lengthAdjust="spacing">East 48th Street</text>
<text x="1371.2" y="50.5" font-size="13" stroke-width=".1" textLength="93" lengthAdjust="spacing">East 47th Street</text>
<text x="1483.9" y="-3.9" font-size="13" stroke-width=".1" textLength="93" lengthAdjust="spacing">East 48th Street</text>
<text x="1429.5" y="-442.5" font-size="13" stroke-width=".1" textLength="93" lengthAdjust="spacing">East 56th Street</text>
<text x="1521" y="-559.9" font-size="13" stroke-width=".1" textLength="93" lengthAdjust="spacing">East 58th Street</text>
<text x="1504.7" y="-389.3" font-size="13" stroke-width=".1" textLength="93" lengthAdjust="spacing">East 55th Street</text>
<text x="1636.8" y="-441.9" font-size="13" stroke-width=".1" textLength="93" lengthAdjust="spacing">East 56th Street</text>
<text x="1764.7" y="-443.1" font-size="13" stroke-width=".1" textLength="93" lengthAdjust="spacing">East 56th Street</text>
<text x="1763.8" y="-388.1" font-size="13" stroke-width=".1" textLength="93" lengthAdjust="spacing">East 55th Street</text>
<text x="1582.4" y="-224.3" font-size="13" stroke-width=".1" textLength="93" lengthAdjust="spacing">East 52nd Street</text>
<text x="1627.9" y="-167.5" font-size="13" stroke-width=".1" textLength="86.5" lengthAdjust="spacing">East 51st Street</text>
<text x="1743.1" y="-222.5" font-size="13" stroke-width=".1" textLength="93" lengthAdjust="spacing">East 52nd Street</text>
<text x="1737.1" y="-167.5" font-size="13" stroke-width=".1" textLength="86" lengthAdjust="spacing">East 51st Street</text>
<text x="1960.7" y="-445.4" font-size="13" stroke-width=".1" textLength="93" lengthAdjust="spacing">East 56th Street</text>
<text transform="translate(1306.9 -55.6) rotate(-90)" y="6.1" font-size="17.5" textLength="94" lengthAdjust="spacing">5th Avenue</text>
<text transform="translate(1307.3 -310.7) rotate(-90)" y="6.1" font-size="17.5" textLength="94" lengthAdjust="spacing">5th Avenue</text>
<text transform="translate(1413.8 -89.7) rotate(-90)" y="6.1" font-size="17.5" textLength="130" lengthAdjust="spacing">Madison Avenue</text>
<text transform="translate(1414.3 -360.9) rotate(-90)" y="6.1" font-size="17.5" textLength="130" lengthAdjust="spacing">Madison Avenue</text>
<text transform="translate(1526.4 -200.1) rotate(-90)" y="6.1" font-size="17.5" textLength="102" lengthAdjust="spacing">Park Avenue</text>
<text transform="translate(1884.5 -230.5) rotate(-90)" y="6.1" font-size="17.5" textLength="98" lengthAdjust="spacing">2nd Avenue</text>
<text transform="translate(1732.8 -702.7) rotate(-90)" y="6.1" font-size="17.5" textLength="94" lengthAdjust="spacing">3rd Avenue</text>
</g>
</g>
<text x="1475.1" y="437.3" font-size="16.4" fill="#8a9fb0" stroke="#8a9fb0" stroke-width=".55" text-anchor="middle" textLength="130" lengthAdjust="spacing">MIDTOWN EAST</text>
</svg>
<div class="a" style="left:14.25px;top:13.25px;width:37.5px;height:76.25px;border:1.25px solid #b9b9b9;border-radius:5px;background:#fff"></div>
<div class="a" style="left:15.5px;top:52px;width:37.5px;height:1.25px;background:#ccc"></div>
<span class="t" style="left:26.31px;top:22.12px;font-size:27.5px;line-height:27.5px;font-family:'Liberation Mono',monospace;color:#000;-webkit-text-stroke:0.7px #000;">+</span>
<span class="t" style="left:26.29px;top:59.32px;font-size:27.5px;line-height:27.5px;font-family:'Liberation Mono',monospace;color:#000;-webkit-text-stroke:0.7px #000;">−</span>
<svg class="i" style="left:262.9px;top:180.1px;width:37.8px;height:75.2px" viewBox="0 0 37.8 75.2" aria-hidden="true"><rect width="37.8" height="75.2" fill="#fff" fill-opacity=".45"/><path d="M0.4 11.8L18.9 20.9V66.1L0.4 57.1z" fill="#f3f9fa"/><path d="M37.400 11.800L18.900 20.900V66.100L37.400 57.100z" fill="#e6edef"/><path d="M1 13.7L18.3 22.2v8.3L1 22.0zM1 24.4L18.3 32.9v8.3L1 32.7zM1 35.1L18.3 43.6v8.3L1 43.4zM1 45.8L18.3 54.3v8.3L1 54.1z" fill="#4fb0d7"/><path d="M36.8 13.7L19.5 22.2v8.3L36.8 22.0zM36.8 24.4L19.5 32.9v8.3L36.8 32.7zM36.8 35.1L19.5 43.6v8.3L36.8 43.4zM36.8 45.8L19.5 54.3v8.3L36.8 54.1z" fill="#2b9bc8"/><path d="M1 17.9L18.3 26.4M3.9 15.1v8.3M6.8 16.5v8.3M9.7 18.0v8.3M12.6 19.4v8.3M15.5 20.8v8.3M1 28.5L18.3 37.0M3.9 25.8v8.3M6.8 27.2v8.3M9.7 28.7v8.3M12.6 30.1v8.3M15.5 31.5v8.3M1 39.2L18.3 47.7M3.9 36.5v8.3M6.8 37.9v8.3M9.7 39.4v8.3M12.6 40.8v8.3M15.5 42.2v8.3M1 49.9L18.3 58.4M3.9 47.2v8.3M6.8 48.6v8.3M9.7 50.1v8.3M12.6 51.5v8.3M15.5 52.9v8.3" stroke="#b9e2f1" stroke-width=".85" fill="none"/><path d="M36.8 17.9L19.5 26.4M33.9 15.1v8.3M31.0 16.5v8.3M28.1 18.0v8.3M25.2 19.4v8.3M22.3 20.8v8.3M36.8 28.5L19.5 37.0M33.9 25.8v8.3M31.0 27.2v8.3M28.1 28.7v8.3M25.2 30.1v8.3M22.3 31.5v8.3M36.8 39.2L19.5 47.7M33.9 36.5v8.3M31.0 37.9v8.3M28.1 39.4v8.3M25.2 40.8v8.3M22.3 42.2v8.3M36.8 49.9L19.5 58.4M33.9 47.2v8.3M31.0 48.6v8.3M28.1 50.1v8.3M25.2 51.5v8.3M22.3 52.9v8.3" stroke="#8fcfe8" stroke-width=".85" fill="none"/><path d="M18.900 1.200L37.400 11.800L18.900 20.900L0.400 11.800z" fill="#fff"/><path d="M18.9 2L35.6 11.7L18.9 19.9L2.2 11.7z" fill="#edf7f8" stroke="#bcd3d9" stroke-width=".6"/><path d="M0.400 57.100L18.900 66.100V74.400L0.400 64.200z" fill="#6f6f6f"/><path d="M37.400 57.100L18.900 66.100V74.400L37.400 64.200z" fill="#36464e"/></svg>
<div class="a" style="left:229.5px;top:145.6px;width:104.5px;height:27px;border-radius:14px;background:rgba(255,255,255,.92)"></div>
<span class="t" style="left:244.3px;top:151.9px;font-size:15px;line-height:15px;letter-spacing:-0.02px;font-weight:700;color:#212121;">Building A</span>
<svg class="i" style="left:614.2px;top:188.9px;width:37.8px;height:75.2px" viewBox="0 0 37.8 75.2" aria-hidden="true"><rect width="37.8" height="75.2" fill="#fff" fill-opacity=".45"/><path d="M0.4 11.8L18.9 20.9V66.1L0.4 57.1z" fill="#f3f9fa"/><path d="M37.400 11.800L18.900 20.900V66.100L37.400 57.100z" fill="#e6edef"/><path d="M1 13.7L18.3 22.2v8.3L1 22.0zM1 24.4L18.3 32.9v8.3L1 32.7zM1 35.1L18.3 43.6v8.3L1 43.4zM1 45.8L18.3 54.3v8.3L1 54.1z" fill="#4fb0d7"/><path d="M36.8 13.7L19.5 22.2v8.3L36.8 22.0zM36.8 24.4L19.5 32.9v8.3L36.8 32.7zM36.8 35.1L19.5 43.6v8.3L36.8 43.4zM36.8 45.8L19.5 54.3v8.3L36.8 54.1z" fill="#2b9bc8"/><path d="M1 17.9L18.3 26.4M3.9 15.1v8.3M6.8 16.5v8.3M9.7 18.0v8.3M12.6 19.4v8.3M15.5 20.8v8.3M1 28.5L18.3 37.0M3.9 25.8v8.3M6.8 27.2v8.3M9.7 28.7v8.3M12.6 30.1v8.3M15.5 31.5v8.3M1 39.2L18.3 47.7M3.9 36.5v8.3M6.8 37.9v8.3M9.7 39.4v8.3M12.6 40.8v8.3M15.5 42.2v8.3M1 49.9L18.3 58.4M3.9 47.2v8.3M6.8 48.6v8.3M9.7 50.1v8.3M12.6 51.5v8.3M15.5 52.9v8.3" stroke="#b9e2f1" stroke-width=".85" fill="none"/><path d="M36.8 17.9L19.5 26.4M33.9 15.1v8.3M31.0 16.5v8.3M28.1 18.0v8.3M25.2 19.4v8.3M22.3 20.8v8.3M36.8 28.5L19.5 37.0M33.9 25.8v8.3M31.0 27.2v8.3M28.1 28.7v8.3M25.2 30.1v8.3M22.3 31.5v8.3M36.8 39.2L19.5 47.7M33.9 36.5v8.3M31.0 37.9v8.3M28.1 39.4v8.3M25.2 40.8v8.3M22.3 42.2v8.3M36.8 49.9L19.5 58.4M33.9 47.2v8.3M31.0 48.6v8.3M28.1 50.1v8.3M25.2 51.5v8.3M22.3 52.9v8.3" stroke="#8fcfe8" stroke-width=".85" fill="none"/><path d="M18.900 1.200L37.400 11.800L18.900 20.900L0.400 11.800z" fill="#fff"/><path d="M18.9 2L35.6 11.7L18.9 19.9L2.2 11.7z" fill="#edf7f8" stroke="#bcd3d9" stroke-width=".6"/><path d="M0.400 57.100L18.900 66.100V74.400L0.400 64.200z" fill="#6f6f6f"/><path d="M37.400 57.100L18.900 66.100V74.400L37.400 64.200z" fill="#36464e"/></svg>
<div class="a" style="left:581.6px;top:154.4px;width:104.5px;height:27px;border-radius:14px;background:rgba(255,255,255,.92)"></div>
<span class="t" style="left:595.6px;top:160.7px;font-size:15px;line-height:15px;letter-spacing:0.09px;font-weight:700;color:#212121;">Building B</span>
<div class="a" style="left:554px;top:498px;width:364px;height:21px;background:rgba(255,255,255,.8)"></div>
<svg class="i" style="left:560px;top:504px;width:15px;height:10px" viewBox="0 0 12 8"><path fill="#4C7BE1" d="M0 0h12v4H0z"/><path fill="#FFD500" d="M0 4h12v3H0z"/><path fill="#E0BC00" d="M0 7h12v1H0z"/></svg>
<span class="t" style="left:578.27px;top:500.5px;font-size:15px;line-height:15px;letter-spacing:0.13px;color:#0078a8;text-decoration:underline;text-decoration-color:rgba(0,120,168,.22);text-underline-offset:3.5px;text-decoration-thickness:1px">Leaflet</span>
<span class="t" style="left:628.66px;top:500.5px;font-size:15px;line-height:15px;color:#333;">|</span>
<span class="t" style="left:637.27px;top:500.5px;font-size:15px;line-height:15px;color:#333;">©</span>
<span class="t" style="left:651.79px;top:500.5px;font-size:15px;line-height:15px;letter-spacing:-0.01px;color:#0078a8;text-decoration:underline;text-decoration-color:rgba(0,120,168,.22);text-underline-offset:3.5px;text-decoration-thickness:1px">OpenStreetMap</span>
<span class="t" style="left:761.86px;top:500.5px;font-size:15px;line-height:15px;letter-spacing:0.02px;color:#333;">contributors ©</span>
<span class="t" style="left:859.24px;top:500.5px;font-size:15px;line-height:15px;color:#0078a8;text-decoration:underline;text-decoration-color:rgba(0,120,168,.22);text-underline-offset:3.5px;text-decoration-thickness:1px">CARTO</span>
</section>
</main>
<div id="hint" class="a" style="left:0;top:0;width:0;height:0;z-index:5">
<div class="a" style="left:456px;top:87px;width:115px;height:40px;border:3px solid #fcc22f;border-radius:10px;background:rgba(0,0,0,.05);box-shadow:0 0 4px rgba(0,0,0,.25),inset 0 0 4px rgba(0,0,0,.18)"></div>
<svg class="i" style="left:565px;top:100px;width:70px;height:24px" viewBox="565 100 70 24"><path d="M576 111.5H630" stroke="#fcc22f" stroke-width="3" stroke-dasharray="21 5" stroke-dashoffset="7.800" fill="none"/><circle cx="575.5" cy="111.5" r="5.2" fill="#fcc22f"/></svg>
<div class="a" style="left:628px;top:92px;width:481px;height:70px;border:3px solid #fcc22f;border-radius:11px;background:#fdeede;box-shadow:0 1px 4px rgba(0,0,0,.25)"></div>
<span class="t" style="left:636.1px;top:100.3px;font-size:28px;line-height:28px;color:#000;">Enter dashboard the editing mode,</span>
<span class="t" style="left:637.21px;top:134px;font-size:28px;line-height:28px;color:#000;">and click the "Manage layouts" button</span>
<div class="a" style="left:654px;top:60px;width:24px;height:30px;border:3px solid #fcc22f;border-radius:9px;background:#fff;box-shadow:0 1px 3px rgba(0,0,0,.2)"></div>
<span class="t" style="left:661.13px;top:63.87px;font-size:28.5px;line-height:28.5px;color:#000;">1</span>
<div class="a" role="tooltip" style="left:450px;top:144px;width:133px;height:30px;border-radius:5px;background:#616161"></div>
<span class="t" style="left:460.15px;top:151.65px;font-size:14px;line-height:14px;letter-spacing:1.01px;color:#fff;">Manage layouts</span>
<svg class="i" style="left:500px;top:115px;width:32px;height:36px" viewBox="500 115 32 36" aria-hidden="true"><path d="M511.3 120.3Q511.3 119.3 512.9 119.3Q514.5 119.3 514.5 120.300V124.600H517.400V125.600H520.400V127H522.600Q523.800 127.300 523.800 128.500V134.500L522.600 136L521.800 138.400V140.300H512.500V138.400L510.800 136.600L509.200 133.300L507.400 130.200Q507 129 508 128.600Q509.200 128.300 510 129.200L511.300 131Z" fill="#fff" stroke="#000" stroke-width="1.1" stroke-linejoin="round"/><path d="M514.600 124.800V128.600M517.600 125.800V128.800M520.500 127.200V129.200" stroke="#000" stroke-width="1" fill="none"/><rect x="512.500" y="140.600" width="9.300" height="5" fill="#fcc22f" stroke="#111" stroke-width="0.9"/><rect x="518.700" y="142.300" width="1.700" height="1.400" fill="#111"/></svg>
</div>
</body></html>
